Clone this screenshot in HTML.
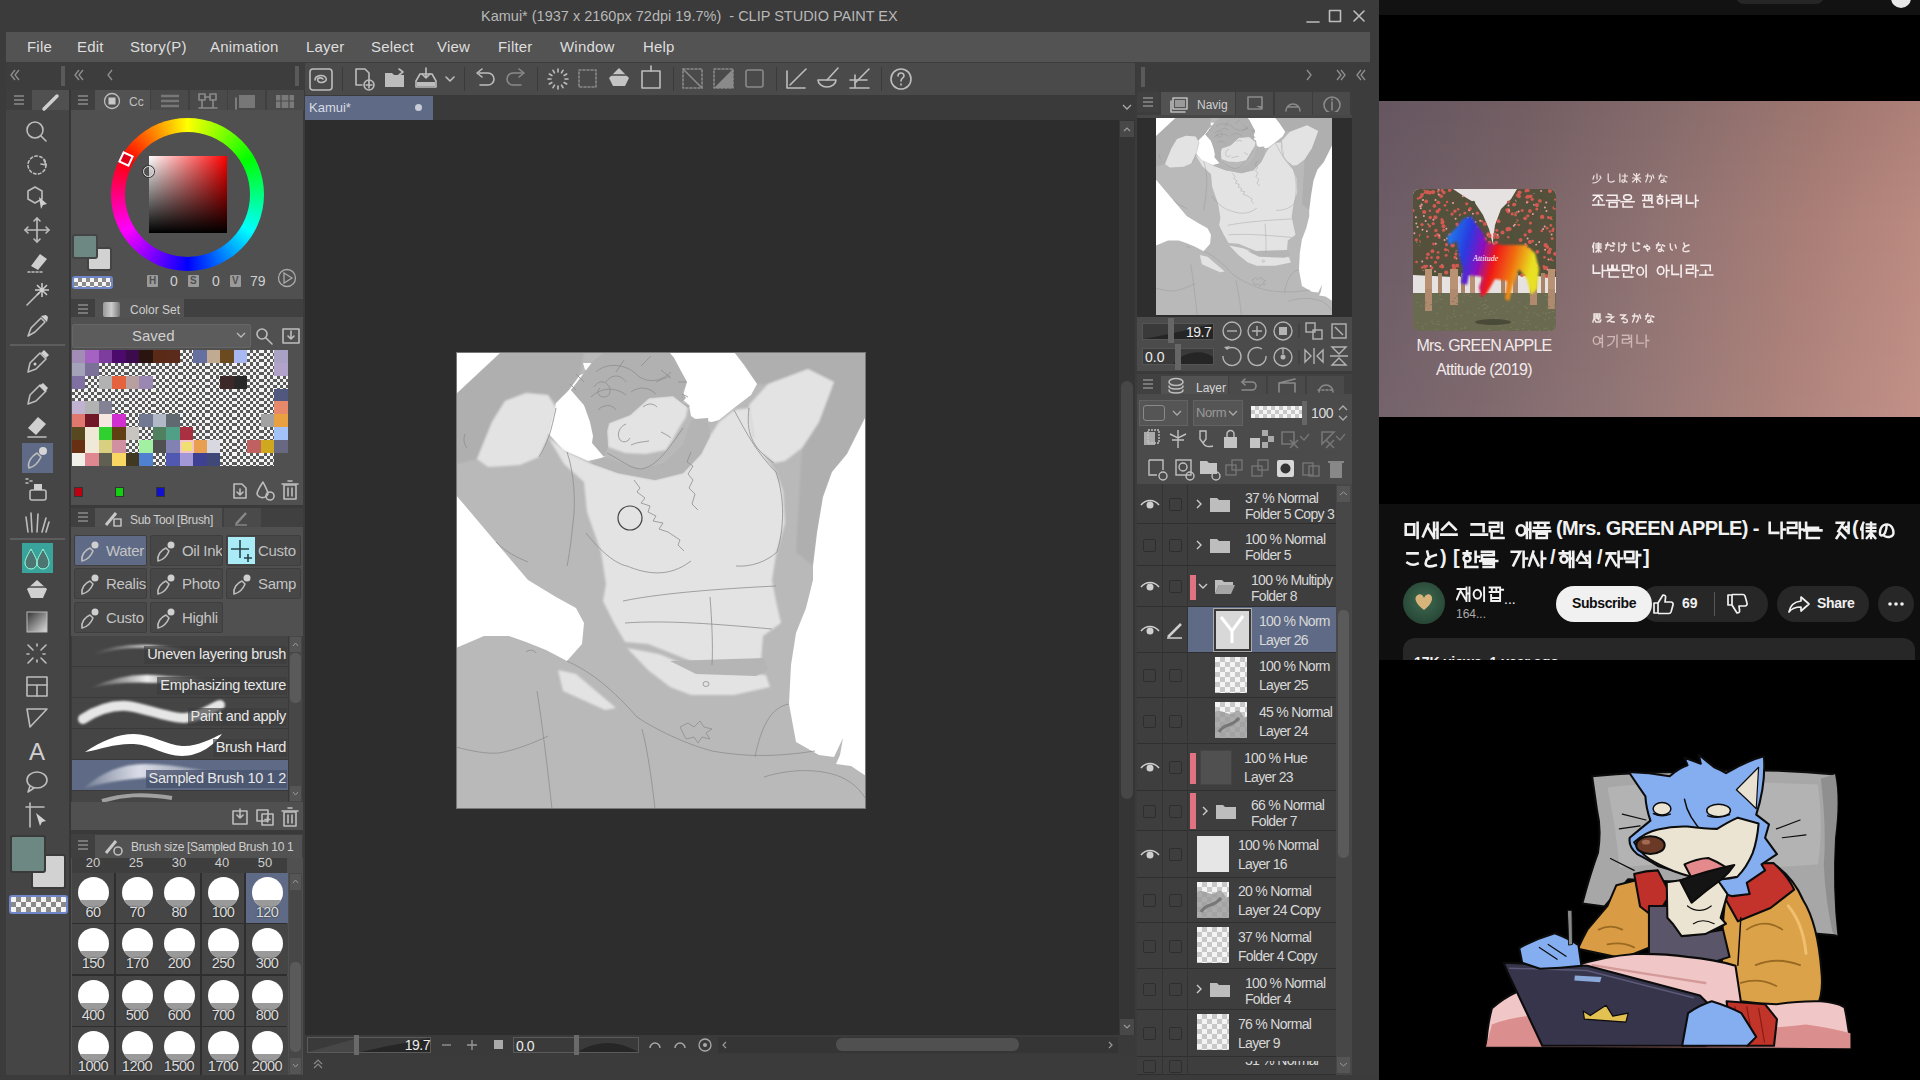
<!DOCTYPE html>
<html><head><meta charset="utf-8">
<style>
*{margin:0;padding:0;box-sizing:border-box}
html,body{width:1920px;height:1080px;overflow:hidden;background:#3b3b3b;font-family:"Liberation Sans",sans-serif;color:#d0d0d0}
.a{position:absolute}
.t{position:absolute;white-space:nowrap;line-height:1}
.chk{background-color:#f4f4f4;background-image:linear-gradient(45deg,#5a5a5a 25%,transparent 25%,transparent 75%,#5a5a5a 75%),linear-gradient(45deg,#5a5a5a 25%,transparent 25%,transparent 75%,#5a5a5a 75%);background-size:6px 6px;background-position:0 0,3px 3px}
.chkl{background-color:#f4f4f4;background-image:linear-gradient(45deg,#c8c8c8 25%,transparent 25%,transparent 75%,#c8c8c8 75%),linear-gradient(45deg,#c8c8c8 25%,transparent 25%,transparent 75%,#c8c8c8 75%);background-size:10px 10px;background-position:0 0,5px 5px}
.chk4{background-color:#fff;background-image:linear-gradient(45deg,#bdbdbd 25%,transparent 25%,transparent 75%,#bdbdbd 75%),linear-gradient(45deg,#bdbdbd 25%,transparent 25%,transparent 75%,#bdbdbd 75%);background-size:4px 4px;background-position:0 0,2px 2px}
</style></head><body>
<div class="a" style="left:0px;top:0px;width:1379px;height:1080px;background:#3b3b3b;"></div>
<div class="t" style="left:481px;top:9px;font-size:14.5px;color:#b8b8b8;letter-spacing:0px">Kamui* (1937 x 2160px 72dpi 19.7%)&nbsp; - CLIP STUDIO PAINT EX</div>
<svg class="a" style="left:1300px;top:6px;" width="75" height="22" viewBox="0 0 75 22"><path d="M7 16h12" stroke="#bdbdbd" fill="none" stroke-width="1.6" stroke-linecap="round" stroke-linejoin="round" stroke-width="1.5"/><rect x="29.5" y="4.5" width="11" height="11" stroke="#bdbdbd" fill="none" stroke-width="1.6" stroke-linecap="round" stroke-linejoin="round" stroke-width="1.5"/><path d="M54 5l10 10M64 5l-10 10" stroke="#bdbdbd" fill="none" stroke-width="1.6" stroke-linecap="round" stroke-linejoin="round" stroke-width="1.5"/></svg>
<div class="a" style="left:6px;top:32px;width:1364px;height:30px;background:#535353;"></div>
<div class="t" style="left:27px;top:39px;font-size:15px;color:#dedede;letter-spacing:0.2px">File</div>
<div class="t" style="left:77px;top:39px;font-size:15px;color:#dedede;letter-spacing:0.2px">Edit</div>
<div class="t" style="left:130px;top:39px;font-size:15px;color:#dedede;letter-spacing:0.2px">Story(P)</div>
<div class="t" style="left:210px;top:39px;font-size:15px;color:#dedede;letter-spacing:0.2px">Animation</div>
<div class="t" style="left:306px;top:39px;font-size:15px;color:#dedede;letter-spacing:0.2px">Layer</div>
<div class="t" style="left:371px;top:39px;font-size:15px;color:#dedede;letter-spacing:0.2px">Select</div>
<div class="t" style="left:437px;top:39px;font-size:15px;color:#dedede;letter-spacing:0.2px">View</div>
<div class="t" style="left:498px;top:39px;font-size:15px;color:#dedede;letter-spacing:0.2px">Filter</div>
<div class="t" style="left:560px;top:39px;font-size:15px;color:#dedede;letter-spacing:0.2px">Window</div>
<div class="t" style="left:643px;top:39px;font-size:15px;color:#dedede;letter-spacing:0.2px">Help</div>
<div class="a" style="left:6px;top:62px;width:1364px;height:28px;background:#3d3d3d;"></div>
<svg class="a" style="left:9px;top:69px;" width="13" height="13" viewBox="0 0 13 13"><path d="M6 1L2 6l4 5 M10 1L6 6l4 5" stroke="#8f8f8f" fill="none" stroke-width="1.3"/></svg>
<div class="a" style="left:61px;top:66px;width:4px;height:20px;background:#5a5a5a;"></div>
<svg class="a" style="left:73px;top:69px;" width="13" height="13" viewBox="0 0 13 13"><path d="M6 1L2 6l4 5 M10 1L6 6l4 5" stroke="#8f8f8f" fill="none" stroke-width="1.3"/></svg>
<svg class="a" style="left:106px;top:69px;" width="13" height="13" viewBox="0 0 13 13"><path d="M6 1L2 6l4 5" stroke="#8f8f8f" fill="none" stroke-width="1.3"/></svg>
<div class="a" style="left:295px;top:66px;width:4px;height:20px;background:#5a5a5a;"></div>
<div class="a" style="left:305px;top:63px;width:830px;height:32px;background:#4a4a4a;"></div>
<div class="a" style="left:342px;top:67px;width:1px;height:24px;background:#3a3a3a;"></div>
<div class="a" style="left:464px;top:67px;width:1px;height:24px;background:#3a3a3a;"></div>
<div class="a" style="left:537px;top:67px;width:1px;height:24px;background:#3a3a3a;"></div>
<div class="a" style="left:673px;top:67px;width:1px;height:24px;background:#3a3a3a;"></div>
<div class="a" style="left:776px;top:67px;width:1px;height:24px;background:#3a3a3a;"></div>
<div class="a" style="left:881px;top:67px;width:1px;height:24px;background:#3a3a3a;"></div>
<svg class="a" style="left:301px;top:63px;" width="40" height="32" viewBox="0 0 40 32"><rect x="9" y="6" width="22" height="21" rx="3" stroke="#bdbdbd" fill="none" stroke-width="1.6" stroke-linecap="round" stroke-linejoin="round"/><path d="M14 17c0-5 9-6 11-2s-6 6-8 3 3-4 5-2" stroke="#bdbdbd" fill="none" stroke-width="1.6" stroke-linecap="round" stroke-linejoin="round" stroke-width="1.4"/></svg>
<svg class="a" style="left:350px;top:63px;" width="30" height="32" viewBox="0 0 30 32"><path d="M6 6h9l4 4v9M6 6v16h6" stroke="#bdbdbd" fill="none" stroke-width="1.6" stroke-linecap="round" stroke-linejoin="round"/><circle cx="19" cy="22" r="5" stroke="#bdbdbd" fill="none" stroke-width="1.6" stroke-linecap="round" stroke-linejoin="round"/><path d="M16 22h6M19 19v6" stroke="#bdbdbd" fill="none" stroke-width="1.6" stroke-linecap="round" stroke-linejoin="round" stroke-width="1.2"/></svg>
<svg class="a" style="left:381px;top:63px;" width="30" height="32" viewBox="0 0 30 32"><path d="M4 10h7l2 2h10v12H4z" fill="#bdbdbd"/><path d="M18 6l4 3-4 3" stroke="#bdbdbd" fill="none" stroke-width="1.6" stroke-linecap="round" stroke-linejoin="round" stroke-width="1.3"/></svg>
<svg class="a" style="left:411px;top:63px;" width="30" height="32" viewBox="0 0 30 32"><path d="M5 18l4-7h12l4 7v6H5z" stroke="#bdbdbd" fill="none" stroke-width="1.6" stroke-linecap="round" stroke-linejoin="round"/><path d="M15 5v10M11 11l4 4 4-4" stroke="#bdbdbd" fill="none" stroke-width="1.6" stroke-linecap="round" stroke-linejoin="round" stroke-width="1.4"/><rect x="6" y="19" width="18" height="4" fill="#bdbdbd"/></svg>
<svg class="a" style="left:443px;top:63px;" width="16" height="32" viewBox="0 0 16 32"><path d="M3 14l4 4 4-4" stroke="#bdbdbd" fill="none" stroke-width="1.6" stroke-linecap="round" stroke-linejoin="round" stroke-width="1.3"/></svg>
<svg class="a" style="left:470px;top:63px;" width="30" height="32" viewBox="0 0 30 32"><path d="M9 10h9a6 6 0 010 12h-8" stroke="#bdbdbd" fill="none" stroke-width="1.6" stroke-linecap="round" stroke-linejoin="round"/><path d="M12 6l-5 4 5 4" stroke="#bdbdbd" fill="none" stroke-width="1.6" stroke-linecap="round" stroke-linejoin="round"/></svg>
<svg class="a" style="left:501px;top:63px;" width="30" height="32" viewBox="0 0 30 32"><path d="M21 10h-9a6 6 0 000 12h8" stroke="#8a8a8a" fill="none" stroke-width="1.6" stroke-linecap="round" stroke-linejoin="round"/><path d="M18 6l5 4-5 4" stroke="#8a8a8a" fill="none" stroke-width="1.6" stroke-linecap="round" stroke-linejoin="round"/></svg>
<svg class="a" style="left:543px;top:63px;" width="30" height="32" viewBox="0 0 30 32"><line x1="22.0" y1="16.0" x2="25.0" y2="16.0" stroke="#bdbdbd" fill="none" stroke-width="1.6" stroke-linecap="round" stroke-linejoin="round" stroke-width="2"/><line x1="21.1" y1="19.5" x2="23.7" y2="21.0" stroke="#bdbdbd" fill="none" stroke-width="1.6" stroke-linecap="round" stroke-linejoin="round" stroke-width="2"/><line x1="18.5" y1="22.1" x2="20.0" y2="24.7" stroke="#bdbdbd" fill="none" stroke-width="1.6" stroke-linecap="round" stroke-linejoin="round" stroke-width="2"/><line x1="15.0" y1="23.0" x2="15.0" y2="26.0" stroke="#bdbdbd" fill="none" stroke-width="1.6" stroke-linecap="round" stroke-linejoin="round" stroke-width="2"/><line x1="11.5" y1="22.1" x2="10.0" y2="24.7" stroke="#bdbdbd" fill="none" stroke-width="1.6" stroke-linecap="round" stroke-linejoin="round" stroke-width="2"/><line x1="8.9" y1="19.5" x2="6.3" y2="21.0" stroke="#bdbdbd" fill="none" stroke-width="1.6" stroke-linecap="round" stroke-linejoin="round" stroke-width="2"/><line x1="8.0" y1="16.0" x2="5.0" y2="16.0" stroke="#bdbdbd" fill="none" stroke-width="1.6" stroke-linecap="round" stroke-linejoin="round" stroke-width="2"/><line x1="8.9" y1="12.5" x2="6.3" y2="11.0" stroke="#bdbdbd" fill="none" stroke-width="1.6" stroke-linecap="round" stroke-linejoin="round" stroke-width="2"/><line x1="11.5" y1="9.9" x2="10.0" y2="7.3" stroke="#bdbdbd" fill="none" stroke-width="1.6" stroke-linecap="round" stroke-linejoin="round" stroke-width="2"/><line x1="15.0" y1="9.0" x2="15.0" y2="6.0" stroke="#bdbdbd" fill="none" stroke-width="1.6" stroke-linecap="round" stroke-linejoin="round" stroke-width="2"/><line x1="18.5" y1="9.9" x2="20.0" y2="7.3" stroke="#bdbdbd" fill="none" stroke-width="1.6" stroke-linecap="round" stroke-linejoin="round" stroke-width="2"/><line x1="21.1" y1="12.5" x2="23.7" y2="11.0" stroke="#bdbdbd" fill="none" stroke-width="1.6" stroke-linecap="round" stroke-linejoin="round" stroke-width="2"/></svg>
<svg class="a" style="left:573px;top:63px;" width="30" height="32" viewBox="0 0 30 32"><rect x="6" y="7" width="17" height="17" stroke="#8a8a8a" fill="none" stroke-width="1.6" stroke-linecap="round" stroke-linejoin="round" stroke-dasharray="2 2"/></svg>
<svg class="a" style="left:603px;top:63px;" width="32" height="32" viewBox="0 0 32 32"><path d="M16 5l10 10-4 8h-12l-4-8z" fill="#c4c4c4"/><path d="M8 12h16" stroke="#4a4a4a" stroke-width="1.5"/></svg>
<svg class="a" style="left:636px;top:63px;" width="30" height="32" viewBox="0 0 30 32"><rect x="6" y="8" width="18" height="17" stroke="#bdbdbd" fill="none" stroke-width="1.6" stroke-linecap="round" stroke-linejoin="round"/><path d="M15 3v5" stroke="#bdbdbd" fill="none" stroke-width="1.6" stroke-linecap="round" stroke-linejoin="round"/></svg>
<svg class="a" style="left:678px;top:63px;" width="30" height="32" viewBox="0 0 30 32"><rect x="5" y="6" width="19" height="19" stroke="#8a8a8a" fill="none" stroke-width="1.6" stroke-linecap="round" stroke-linejoin="round" stroke-dasharray="2 2"/><path d="M5 6l19 19" stroke="#8a8a8a" fill="none" stroke-width="1.6" stroke-linecap="round" stroke-linejoin="round"/></svg>
<svg class="a" style="left:709px;top:63px;" width="30" height="32" viewBox="0 0 30 32"><rect x="5" y="6" width="19" height="19" stroke="#8a8a8a" fill="none" stroke-width="1.6" stroke-linecap="round" stroke-linejoin="round" stroke-dasharray="2 2"/><path d="M24 6v19H5z" fill="#8a8a8a"/></svg>
<svg class="a" style="left:740px;top:63px;" width="30" height="32" viewBox="0 0 30 32"><rect x="6" y="7" width="17" height="17" rx="2" stroke="#8a8a8a" fill="none" stroke-width="1.6" stroke-linecap="round" stroke-linejoin="round"/></svg>
<svg class="a" style="left:782px;top:63px;" width="30" height="32" viewBox="0 0 30 32"><path d="M5 8v17h18" stroke="#bdbdbd" fill="none" stroke-width="1.6" stroke-linecap="round" stroke-linejoin="round"/><path d="M8 22L24 6" stroke="#bdbdbd" fill="none" stroke-width="1.6" stroke-linecap="round" stroke-linejoin="round" stroke-width="2"/></svg>
<svg class="a" style="left:813px;top:63px;" width="30" height="32" viewBox="0 0 30 32"><path d="M5 17a9 7 0 0018 0z" stroke="#bdbdbd" fill="none" stroke-width="1.6" stroke-linecap="round" stroke-linejoin="round"/><path d="M14 17L25 5" stroke="#bdbdbd" fill="none" stroke-width="1.6" stroke-linecap="round" stroke-linejoin="round" stroke-width="2"/></svg>
<svg class="a" style="left:845px;top:63px;" width="30" height="32" viewBox="0 0 30 32"><path d="M5 25h19M5 17h17M10 12v13" stroke="#bdbdbd" fill="none" stroke-width="1.6" stroke-linecap="round" stroke-linejoin="round"/><path d="M10 20L24 6" stroke="#bdbdbd" fill="none" stroke-width="1.6" stroke-linecap="round" stroke-linejoin="round" stroke-width="2"/></svg>
<svg class="a" style="left:886px;top:63px;" width="32" height="32" viewBox="0 0 32 32"><circle cx="15" cy="16" r="10" stroke="#bdbdbd" fill="none" stroke-width="1.6" stroke-linecap="round" stroke-linejoin="round"/><path d="M12 13a3 3 0 116 0c0 2-3 2-3 5M15 21v1" stroke="#bdbdbd" fill="none" stroke-width="1.6" stroke-linecap="round" stroke-linejoin="round" stroke-width="1.4"/></svg>
<div class="a" style="left:305px;top:95px;width:830px;height:25px;background:#3a3a3a;"></div>
<div class="a" style="left:305px;top:96px;width:128px;height:24px;background:#5f6b86;"></div>
<div class="t" style="left:309px;top:101px;font-size:13px;color:#d8dbe4;">Kamui*</div>
<div class="a" style="left:415px;top:104px;width:7px;height:7px;border-radius:50%;background:#c8ccd6"></div>
<svg class="a" style="left:1120px;top:100px;" width="14" height="14" viewBox="0 0 14 14"><path d="M3 5l4 4 4-4" stroke="#aaa" fill="none" stroke-width="1.3"/></svg>
<div class="a" style="left:305px;top:120px;width:830px;height:915px;background:#2d2d2d;"></div>
<div class="a" style="left:1119px;top:120px;width:16px;height:915px;background:#353535;"></div>
<div class="a" style="left:1121px;top:381px;width:12px;height:418px;background:#474747;border-radius:6px"></div>
<div class="a" style="left:1120px;top:121px;width:14px;height:16px;background:#484848;"></div>
<svg class="a" style="left:1120px;top:121px;" width="14" height="16" viewBox="0 0 14 16"><path d="M4 10l3-3 3 3" stroke="#999" fill="none" stroke-width="1.2"/></svg>
<div class="a" style="left:1120px;top:1019px;width:14px;height:16px;background:#484848;"></div>
<svg class="a" style="left:1120px;top:1019px;" width="14" height="16" viewBox="0 0 14 16"><path d="M4 6l3 3 3-3" stroke="#999" fill="none" stroke-width="1.2"/></svg>
<div class="a" style="left:305px;top:1035px;width:830px;height:20px;background:#3a3a3a;"></div>
<div class="a" style="left:307px;top:1037px;width:124px;height:16px;background:#3a3a3a;border:1px solid #5a5a5a"></div>
<svg class="a" style="left:308px;top:1038px;" width="122" height="14" viewBox="0 0 122 14"><path d="M0 14L50 14L50 0Z" fill="#474747"/><path d="M52 14C70 10 100 4 122 0V14Z" fill="#262626"/></svg>
<div class="a" style="left:354px;top:1035px;width:5px;height:20px;background:#6a6a6a;"></div>
<div class="t" style="right:1490px;top:1038px;font-size:14px;color:#ececec;letter-spacing:-0.5px">19.7</div>
<svg class="a" style="left:438px;top:1035px;" width="20" height="20" viewBox="0 0 20 20"><path d="M4 10h9" stroke="#999" stroke-width="1.3"/></svg>
<svg class="a" style="left:463px;top:1035px;" width="20" height="20" viewBox="0 0 20 20"><path d="M4 10h10M9 5v10" stroke="#999" stroke-width="1.3"/></svg>
<div class="a" style="left:494px;top:1040px;width:9px;height:9px;background:#aaa;"></div>
<div class="a" style="left:513px;top:1037px;width:126px;height:16px;background:#3a3a3a;border:1px solid #5a5a5a"></div>
<svg class="a" style="left:514px;top:1038px;" width="124" height="14" viewBox="0 0 124 14"><path d="M64 14C80 4 100 0 124 14Z" fill="#262626"/></svg>
<div class="a" style="left:574px;top:1035px;width:5px;height:20px;background:#6a6a6a;"></div>
<div class="t" style="left:516px;top:1039px;font-size:14px;color:#ececec;letter-spacing:-0.5px">0.0</div>
<svg class="a" style="left:645px;top:1035px;" width="70" height="20" viewBox="0 0 70 20"><path d="M5 13a5 5 0 0110 0" stroke="#aaa" fill="none" stroke-width="1.4"/><path d="M30 13a5 5 0 0110 0" stroke="#aaa" fill="none" stroke-width="1.4"/><circle cx="60" cy="10" r="6" stroke="#aaa" fill="none" stroke-width="1.3"/><circle cx="60" cy="10" r="2" fill="#aaa"/></svg>
<div class="a" style="left:718px;top:1037px;width:400px;height:16px;background:#353535;"></div>
<svg class="a" style="left:720px;top:1037px;" width="10" height="16" viewBox="0 0 10 16"><path d="M6 5l-3 3 3 3" stroke="#999" fill="none" stroke-width="1.2"/></svg>
<div class="a" style="left:836px;top:1038px;width:183px;height:13px;background:#505050;border-radius:6px"></div>
<svg class="a" style="left:1106px;top:1037px;" width="10" height="16" viewBox="0 0 10 16"><path d="M3 5l3 3-3 3" stroke="#999" fill="none" stroke-width="1.2"/></svg>
<div class="a" style="left:305px;top:1055px;width:830px;height:25px;background:#3b3b3b;"></div>
<svg class="a" style="left:310px;top:1055px;" width="18" height="16" viewBox="0 0 18 16"><path d="M4 9l4-4 4 4M4 13l4-4 4 4" stroke="#888" fill="none" stroke-width="1.2"/></svg>
<div class="a" style="left:6px;top:90px;width:63px;height:985px;background:#454545;"></div>
<div class="a" style="left:69px;top:90px;width:2px;height:985px;background:#363636;"></div>
<div class="a" style="left:6px;top:90px;width:26px;height:20px;background:#3e3e3e;"></div>
<svg class="a" style="left:12px;top:94px;" width="14" height="12" viewBox="0 0 14 12"><path d="M2 2h10M2 6h10M2 10h10" stroke="#8a8a8a" stroke-width="1.5"/></svg>
<div class="a" style="left:32px;top:90px;width:37px;height:20px;background:#505050;"></div>
<svg class="a" style="left:36px;top:92px;" width="28" height="20" viewBox="0 0 28 20"><path d="M8 17L21 4" stroke="#cfcfcf" stroke-width="3.5" stroke-linecap="round"/></svg>
<svg class="a" style="left:22px;top:117px;" width="31" height="30" viewBox="0 0 31 30"><circle cx="13" cy="13" r="8" stroke="#bdbdbd" fill="none" stroke-width="1.6" stroke-linecap="round" stroke-linejoin="round"/><path d="M19 19l5 5" stroke="#bdbdbd" fill="none" stroke-width="1.6" stroke-linecap="round" stroke-linejoin="round" stroke-width="2"/></svg>
<svg class="a" style="left:22px;top:150px;" width="31" height="30" viewBox="0 0 31 30"><circle cx="15" cy="15" r="9" stroke="#bdbdbd" fill="none" stroke-width="1.6" stroke-linecap="round" stroke-linejoin="round" stroke-dasharray="2.5 2.5"/><path d="M22 10l2 5-5-1" stroke="#bdbdbd" fill="none" stroke-width="1.6" stroke-linecap="round" stroke-linejoin="round" stroke-width="1.3"/></svg>
<svg class="a" style="left:22px;top:182px;" width="31" height="30" viewBox="0 0 31 30"><path d="M6 9l7-4 7 4v8l-7 4-7-4z" stroke="#bdbdbd" fill="none" stroke-width="1.6" stroke-linecap="round" stroke-linejoin="round"/><path d="M17 15l8 7-4 1-2 4z" fill="#cfcfcf"/></svg>
<svg class="a" style="left:22px;top:215px;" width="31" height="30" viewBox="0 0 31 30"><path d="M15 3v24M3 15h24" stroke="#bdbdbd" fill="none" stroke-width="1.6" stroke-linecap="round" stroke-linejoin="round"/><path d="M12 6l3-3 3 3M12 24l3 3 3-3M6 12l-3 3 3 3M24 12l3 3-3 3" stroke="#bdbdbd" fill="none" stroke-width="1.6" stroke-linecap="round" stroke-linejoin="round" stroke-width="1.4"/></svg>
<svg class="a" style="left:22px;top:247px;" width="31" height="30" viewBox="0 0 31 30"><path d="M9 19l9-12 7 5-9 11z" fill="#cfcfcf"/><path d="M6 25h16" stroke="#bdbdbd" fill="none" stroke-width="1.6" stroke-linecap="round" stroke-linejoin="round" stroke-dasharray="2 2"/></svg>
<svg class="a" style="left:22px;top:279px;" width="31" height="30" viewBox="0 0 31 30"><path d="M5 26l12-12" stroke="#bdbdbd" fill="none" stroke-width="1.6" stroke-linecap="round" stroke-linejoin="round" stroke-width="1.8"/><path d="M20 4v14M13 11h14M15 6l10 10M25 6L15 16" stroke="#cfcfcf" stroke-width="1.5"/></svg>
<svg class="a" style="left:22px;top:311px;" width="31" height="30" viewBox="0 0 31 30"><path d="M6 25l3-8 10-10 4 4-10 10z" stroke="#bdbdbd" fill="none" stroke-width="1.6" stroke-linecap="round" stroke-linejoin="round"/><path d="M19 5l5-1 2 2-1 5z" fill="#cfcfcf"/></svg>
<div class="a" style="left:10px;top:344px;width:55px;height:2px;background:#5d5d5d;"></div>
<svg class="a" style="left:22px;top:347px;" width="31" height="30" viewBox="0 0 31 30"><path d="M6 25l2-9 10-10 6 6-10 10z" stroke="#bdbdbd" fill="none" stroke-width="1.6" stroke-linecap="round" stroke-linejoin="round"/><path d="M19 6l3-3 5 5-3 3" fill="#cfcfcf"/><circle cx="13" cy="17" r="1.5" fill="#cfcfcf"/></svg>
<svg class="a" style="left:22px;top:379px;" width="31" height="30" viewBox="0 0 31 30"><path d="M6 25l2-9 10-10 6 6-10 10z" stroke="#bdbdbd" fill="none" stroke-width="1.6" stroke-linecap="round" stroke-linejoin="round"/><path d="M17 7l4-3 5 5-3 4z" fill="#cfcfcf"/></svg>
<svg class="a" style="left:22px;top:411px;" width="31" height="30" viewBox="0 0 31 30"><path d="M6 17l10-11 8 7-10 11z" fill="#d0d0d0"/><path d="M6 26h18" stroke="#bdbdbd" fill="none" stroke-width="1.6" stroke-linecap="round" stroke-linejoin="round"/></svg>
<div class="a" style="left:22px;top:443px;width:31px;height:30px;background:#5f6b86;"></div>
<svg class="a" style="left:22px;top:443px;" width="31" height="30" viewBox="0 0 31 30"><path d="M7 25c-2-6 3-12 8-15l4 4c-3 6-7 10-12 11z" stroke="#bdbdbd" fill="none" stroke-width="1.6" stroke-linecap="round" stroke-linejoin="round"/><circle cx="21" cy="8" r="4" fill="#d5d5d5"/></svg>
<svg class="a" style="left:22px;top:475px;" width="31" height="30" viewBox="0 0 31 30"><rect x="8" y="15" width="16" height="10" rx="2" stroke="#bdbdbd" fill="none" stroke-width="1.6" stroke-linecap="round" stroke-linejoin="round"/><rect x="12" y="9" width="8" height="6" fill="#cfcfcf"/><path d="M4 4h2M4 8h2M8 6h2" stroke="#bdbdbd" fill="none" stroke-width="1.6" stroke-linecap="round" stroke-linejoin="round" stroke-width="1.2"/></svg>
<svg class="a" style="left:22px;top:507px;" width="31" height="30" viewBox="0 0 31 30"><path d="M6 25L4 10M10 25L9 6M15 25l1-18M20 25l4-14M24 25l3-10" stroke="#bdbdbd" fill="none" stroke-width="1.6" stroke-linecap="round" stroke-linejoin="round" stroke-width="1.4"/></svg>
<div class="a" style="left:10px;top:538px;width:55px;height:2px;background:#5d5d5d;"></div>
<div class="a" style="left:22px;top:543px;width:31px;height:30px;background:#3aa49c;"></div>
<svg class="a" style="left:22px;top:543px;" width="31" height="30" viewBox="0 0 31 30"><path d="M9 6c-4 7-6 11-6 14a6 6 0 0012 0c0-3-2-7-6-14zM21 6c-4 7-6 11-6 14a6 6 0 0012 0c0-3-2-7-6-14z" fill="#4d7672" stroke="#9fd" stroke-width="1"/></svg>
<svg class="a" style="left:22px;top:575px;" width="31" height="30" viewBox="0 0 31 30"><path d="M15 5l10 9-4 9h-12l-4-9z" fill="#d0d0d0"/><path d="M6 12h18" stroke="#484848" stroke-width="1.5"/></svg>
<svg class="a" style="left:22px;top:607px;" width="31" height="30" viewBox="0 0 31 30"><defs><linearGradient id="gg" x1="0" y1="0" x2="1" y2="1"><stop offset="0" stop-color="#333"/><stop offset="1" stop-color="#ddd"/></linearGradient></defs><rect x="5" y="5" width="20" height="20" fill="url(#gg)" stroke="#bbb" stroke-width="1"/></svg>
<svg class="a" style="left:22px;top:639px;" width="31" height="30" viewBox="0 0 31 30"><path d="M6 6l5 5M24 6l-5 5M6 24l5-5M24 24l-5-5" stroke="#bdbdbd" fill="none" stroke-width="1.6" stroke-linecap="round" stroke-linejoin="round"/><path d="M5 15h4M21 15h4M15 5v4M15 21v4" stroke="#bdbdbd" fill="none" stroke-width="1.6" stroke-linecap="round" stroke-linejoin="round" stroke-dasharray="2 2"/></svg>
<svg class="a" style="left:22px;top:671px;" width="31" height="30" viewBox="0 0 31 30"><rect x="5" y="6" width="20" height="19" stroke="#bdbdbd" fill="none" stroke-width="1.6" stroke-linecap="round" stroke-linejoin="round"/><path d="M5 14h20M15 14v11" stroke="#bdbdbd" fill="none" stroke-width="1.6" stroke-linecap="round" stroke-linejoin="round"/></svg>
<svg class="a" style="left:22px;top:703px;" width="31" height="30" viewBox="0 0 31 30"><path d="M5 6h20L8 24z" stroke="#bdbdbd" fill="none" stroke-width="1.6" stroke-linecap="round" stroke-linejoin="round" stroke-width="2"/></svg>
<svg class="a" style="left:22px;top:735px;" width="31" height="30" viewBox="0 0 31 30"><text x="15" y="25" font-size="24" text-anchor="middle" fill="#d0d0d0" font-family="Liberation Sans">A</text></svg>
<svg class="a" style="left:22px;top:767px;" width="31" height="30" viewBox="0 0 31 30"><ellipse cx="15" cy="13" rx="10" ry="8" stroke="#bdbdbd" fill="none" stroke-width="1.6" stroke-linecap="round" stroke-linejoin="round"/><path d="M8 19l-2 6 6-4" stroke="#bdbdbd" fill="none" stroke-width="1.6" stroke-linecap="round" stroke-linejoin="round"/></svg>
<svg class="a" style="left:22px;top:799px;" width="31" height="30" viewBox="0 0 31 30"><path d="M8 4v24M4 8h18" stroke="#bdbdbd" fill="none" stroke-width="1.6" stroke-linecap="round" stroke-linejoin="round"/><path d="M14 14l10 8-4 1-2 4z" fill="#d0d0d0"/></svg>
<div class="a" style="left:31px;top:854px;width:35px;height:35px;background:#d2d2d2;border:2px solid #3a3a3a;border-radius:3px"></div>
<div class="a" style="left:10px;top:835px;width:36px;height:38px;background:#6d8783;border:2px solid #3a3a3a;border-radius:3px"></div>
<div class="a chkl" style="left:9px;top:895px;width:59px;height:19px;border:2px solid #6f86c8;border-radius:3px;background-image:linear-gradient(45deg,#8a8a8a 25%,transparent 25%,transparent 75%,#8a8a8a 75%),linear-gradient(45deg,#8a8a8a 25%,transparent 25%,transparent 75%,#8a8a8a 75%);background-size:10px 10px;background-position:0 0,5px 5px"></div>
<div class="a" style="left:71px;top:90px;width:232px;height:985px;background:#3d3d3d;"></div>
<div class="a" style="left:71px;top:90px;width:232px;height:20px;background:#404040;"></div>
<svg class="a" style="left:76px;top:94px;" width="14" height="12" viewBox="0 0 14 12"><path d="M2 2h10M2 6h10M2 10h10" stroke="#8a8a8a" stroke-width="1.5"/></svg>
<div class="a" style="left:95px;top:90px;width:55px;height:20px;background:#525252;"></div>
<svg class="a" style="left:102px;top:92px;" width="20" height="18" viewBox="0 0 20 18"><circle cx="10" cy="9" r="7.5" stroke="#bdbdbd" fill="none" stroke-width="1.3"/><rect x="6.5" y="5.5" width="7" height="7" fill="#c8c8c8"/></svg>
<div class="t" style="left:129px;top:96px;font-size:12px;color:#c0c0c0;">Cc</div>
<div class="a" style="left:151px;top:90px;width:37px;height:20px;background:#4a4a4a;"></div>
<div class="a" style="left:190px;top:90px;width:37px;height:20px;background:#4a4a4a;"></div>
<div class="a" style="left:228px;top:90px;width:37px;height:20px;background:#4a4a4a;"></div>
<div class="a" style="left:267px;top:90px;width:37px;height:20px;background:#4a4a4a;"></div>
<svg class="a" style="left:158px;top:92px;" width="24" height="18" viewBox="0 0 24 18"><path d="M3 4h18M3 9h18M3 14h18" stroke="#777" stroke-width="2.5"/></svg>
<svg class="a" style="left:196px;top:92px;" width="24" height="18" viewBox="0 0 24 18"><rect x="3" y="2" width="6" height="6" stroke="#8a8a8a" fill="none" stroke-width="1.6" stroke-linecap="round" stroke-linejoin="round"/><rect x="14" y="2" width="6" height="6" stroke="#8a8a8a" fill="none" stroke-width="1.6" stroke-linecap="round" stroke-linejoin="round"/><path d="M6 8v8M17 8v8M3 16h18M9 5h5" stroke="#8a8a8a" fill="none" stroke-width="1.6" stroke-linecap="round" stroke-linejoin="round"/></svg>
<svg class="a" style="left:234px;top:92px;" width="24" height="18" viewBox="0 0 24 18"><rect x="5" y="3" width="16" height="13" fill="#777"/><path d="M2 6v11" stroke="#8a8a8a" fill="none" stroke-width="1.6" stroke-linecap="round" stroke-linejoin="round"/></svg>
<svg class="a" style="left:273px;top:92px;" width="24" height="18" viewBox="0 0 24 18"><rect x="3" y="3" width="18" height="13" fill="#7a7a7a"/><path d="M3 9h18M8 3v13M16 3v13" stroke="#4a4a4a" stroke-width="1.2"/></svg>
<div class="a" style="left:71px;top:110px;width:232px;height:190px;background:#505050;"></div>
<div class="a" style="left:111px;top:118px;width:153px;height:153px;border-radius:50%;background:conic-gradient(from 0deg,#ffff00,#00ff00,#00ffff,#0000ff,#ff00ff,#ff0000,#ffff00)"></div>
<div class="a" style="left:125px;top:132px;width:125px;height:125px;border-radius:50%;background:#505050"></div>
<div class="a" style="left:149px;top:156px;width:78px;height:77px;background:linear-gradient(to top,#000,rgba(0,0,0,0)),linear-gradient(to right,#fff,#f00)"></div>
<div class="a" style="left:120px;top:153px;width:12px;height:12px;background:#e0001a;border:2px solid #fff;transform:rotate(25deg)"></div>
<div class="a" style="left:143px;top:166px;width:11px;height:11px;border-radius:50%;border:1.5px solid #ddd;box-shadow:0 0 0 1px #333"></div>
<div class="a" style="left:87px;top:247px;width:25px;height:24px;background:#d2d2d2;border:2px solid #444;border-radius:3px"></div>
<div class="a" style="left:72px;top:234px;width:26px;height:25px;background:#6d8783;border:2px solid #444;border-radius:3px"></div>
<div class="a chkl" style="left:72px;top:276px;width:41px;height:13px;border:2px solid #6f86c8;border-radius:3px;background-image:linear-gradient(45deg,#8a8a8a 25%,transparent 25%,transparent 75%,#8a8a8a 75%),linear-gradient(45deg,#8a8a8a 25%,transparent 25%,transparent 75%,#8a8a8a 75%);background-size:8px 8px;background-position:0 0,4px 4px"></div>
<div class="a" style="left:147px;top:275px;width:11px;height:12px;background:#9a9a9a;border-radius:1px"></div>
<div class="t" style="left:149px;top:276px;font-size:10px;color:#505050;font-weight:bold">H</div>
<div class="t" style="left:170px;top:274px;font-size:14px;color:#cfcfcf;">0</div>
<div class="a" style="left:188px;top:275px;width:11px;height:12px;background:#9a9a9a;border-radius:1px"></div>
<div class="t" style="left:190px;top:276px;font-size:10px;color:#505050;font-weight:bold">S</div>
<div class="t" style="left:212px;top:274px;font-size:14px;color:#cfcfcf;">0</div>
<div class="a" style="left:230px;top:275px;width:11px;height:12px;background:#9a9a9a;border-radius:1px"></div>
<div class="t" style="left:232px;top:276px;font-size:10px;color:#505050;font-weight:bold">V</div>
<div class="t" style="left:250px;top:274px;font-size:14px;color:#cfcfcf;">79</div>
<svg class="a" style="left:277px;top:268px;" width="20" height="20" viewBox="0 0 20 20"><circle cx="10" cy="10" r="8.5" stroke="#aaa" fill="none" stroke-width="1.3"/><path d="M7 5l8 5-8 5z" stroke="#aaa" fill="none" stroke-width="1.3"/></svg>
<div class="a" style="left:71px;top:300px;width:232px;height:16px;background:#3d3d3d;"></div>
<div class="a" style="left:71px;top:299px;width:232px;height:18px;background:#404040;"></div>
<svg class="a" style="left:76px;top:303px;" width="14" height="12" viewBox="0 0 14 12"><path d="M2 2h10M2 6h10M2 10h10" stroke="#8a8a8a" stroke-width="1.5"/></svg>
<div class="a" style="left:95px;top:299px;width:89px;height:18px;background:#525252;"></div>
<div class="a" style="left:103px;top:302px;width:17px;height:15px;background:linear-gradient(90deg,#999,#ccc,#777);border-radius:2px"></div>
<div class="t" style="left:130px;top:304px;font-size:12px;color:#cfcfcf;">Color Set</div>
<div class="a" style="left:71px;top:317px;width:232px;height:188px;background:#505050;"></div>
<div class="a" style="left:72px;top:324px;width:179px;height:24px;background:#5c5c5c;border:1px solid #666;border-radius:2px"></div>
<div class="t" style="left:132px;top:328px;font-size:15px;color:#d0d0d0;">Saved</div>
<svg class="a" style="left:234px;top:328px;" width="14" height="14" viewBox="0 0 14 14"><path d="M3 5l4 4 4-4" stroke="#bbb" fill="none" stroke-width="1.3"/></svg>
<svg class="a" style="left:254px;top:326px;" width="22" height="20" viewBox="0 0 22 20"><circle cx="8" cy="8" r="5" stroke="#bdbdbd" fill="none" stroke-width="1.6" stroke-linecap="round" stroke-linejoin="round" stroke-width="1.4"/><path d="M12 12l6 6" stroke="#bdbdbd" fill="none" stroke-width="1.6" stroke-linecap="round" stroke-linejoin="round" stroke-width="2.2"/></svg>
<svg class="a" style="left:281px;top:326px;" width="20" height="20" viewBox="0 0 20 20"><rect x="2" y="3" width="16" height="14" stroke="#bdbdbd" fill="none" stroke-width="1.6" stroke-linecap="round" stroke-linejoin="round" stroke-width="1.3"/><path d="M10 5v8M7 10l3 3 3-3" stroke="#bdbdbd" fill="none" stroke-width="1.6" stroke-linecap="round" stroke-linejoin="round" stroke-width="1.3"/></svg>
<div class="a" style="left:72px;top:350px;width:13px;height:13px;background:#a08cb4;"></div>
<div class="a" style="left:85px;top:350px;width:14px;height:13px;background:#a562c2;"></div>
<div class="a" style="left:99px;top:350px;width:13px;height:13px;background:#7c3d9e;"></div>
<div class="a" style="left:112px;top:350px;width:14px;height:13px;background:#4b0a6c;"></div>
<div class="a" style="left:126px;top:350px;width:13px;height:13px;background:#3c0b4c;"></div>
<div class="a" style="left:139px;top:350px;width:14px;height:13px;background:#2a1410;"></div>
<div class="a" style="left:153px;top:350px;width:13px;height:13px;background:#5a2a16;"></div>
<div class="a" style="left:166px;top:350px;width:14px;height:13px;background:#5a2a1a;"></div>
<div class="a chk" style="left:180px;top:350px;width:13px;height:13px"></div>
<div class="a" style="left:193px;top:350px;width:14px;height:13px;background:#6670a0;"></div>
<div class="a" style="left:207px;top:350px;width:13px;height:13px;background:#c0aa92;"></div>
<div class="a" style="left:220px;top:350px;width:14px;height:13px;background:#6a4a1e;"></div>
<div class="a" style="left:234px;top:350px;width:13px;height:13px;background:#a8b8f0;"></div>
<div class="a chk" style="left:247px;top:350px;width:14px;height:13px"></div>
<div class="a chk" style="left:261px;top:350px;width:13px;height:13px"></div>
<div class="a" style="left:274px;top:350px;width:14px;height:13px;background:#a9a2c4;"></div>
<div class="a" style="left:72px;top:363px;width:13px;height:13px;background:#a3a2b8;"></div>
<div class="a" style="left:85px;top:363px;width:14px;height:13px;background:#7a7098;"></div>
<div class="a chk" style="left:99px;top:363px;width:13px;height:13px"></div>
<div class="a chk" style="left:112px;top:363px;width:14px;height:13px"></div>
<div class="a chk" style="left:126px;top:363px;width:13px;height:13px"></div>
<div class="a chk" style="left:139px;top:363px;width:14px;height:13px"></div>
<div class="a chk" style="left:153px;top:363px;width:13px;height:13px"></div>
<div class="a chk" style="left:166px;top:363px;width:14px;height:13px"></div>
<div class="a chk" style="left:180px;top:363px;width:13px;height:13px"></div>
<div class="a chk" style="left:193px;top:363px;width:14px;height:13px"></div>
<div class="a chk" style="left:207px;top:363px;width:13px;height:13px"></div>
<div class="a chk" style="left:220px;top:363px;width:14px;height:13px"></div>
<div class="a chk" style="left:234px;top:363px;width:13px;height:13px"></div>
<div class="a chk" style="left:247px;top:363px;width:14px;height:13px"></div>
<div class="a chk" style="left:261px;top:363px;width:13px;height:13px"></div>
<div class="a" style="left:274px;top:363px;width:14px;height:13px;background:#b0a2c8;"></div>
<div class="a" style="left:72px;top:376px;width:13px;height:13px;background:#8070a2;"></div>
<div class="a chk" style="left:85px;top:376px;width:14px;height:13px"></div>
<div class="a" style="left:99px;top:376px;width:13px;height:13px;background:#b2b2b2;"></div>
<div class="a" style="left:112px;top:376px;width:14px;height:13px;background:#e4623e;"></div>
<div class="a" style="left:126px;top:376px;width:13px;height:13px;background:#b9a0a0;"></div>
<div class="a" style="left:139px;top:376px;width:14px;height:13px;background:#9a88b2;"></div>
<div class="a chk" style="left:153px;top:376px;width:13px;height:13px"></div>
<div class="a chk" style="left:166px;top:376px;width:14px;height:13px"></div>
<div class="a chk" style="left:180px;top:376px;width:13px;height:13px"></div>
<div class="a chk" style="left:193px;top:376px;width:14px;height:13px"></div>
<div class="a chk" style="left:207px;top:376px;width:13px;height:13px"></div>
<div class="a" style="left:220px;top:376px;width:14px;height:13px;background:#3c2828;"></div>
<div class="a" style="left:234px;top:376px;width:13px;height:13px;background:#282828;"></div>
<div class="a chk" style="left:247px;top:376px;width:14px;height:13px"></div>
<div class="a chk" style="left:261px;top:376px;width:13px;height:13px"></div>
<div class="a chk" style="left:274px;top:376px;width:14px;height:13px"></div>
<div class="a chk" style="left:72px;top:389px;width:13px;height:12px"></div>
<div class="a chk" style="left:85px;top:389px;width:14px;height:12px"></div>
<div class="a chk" style="left:99px;top:389px;width:13px;height:12px"></div>
<div class="a chk" style="left:112px;top:389px;width:14px;height:12px"></div>
<div class="a chk" style="left:126px;top:389px;width:13px;height:12px"></div>
<div class="a chk" style="left:139px;top:389px;width:14px;height:12px"></div>
<div class="a chk" style="left:153px;top:389px;width:13px;height:12px"></div>
<div class="a chk" style="left:166px;top:389px;width:14px;height:12px"></div>
<div class="a chk" style="left:180px;top:389px;width:13px;height:12px"></div>
<div class="a chk" style="left:193px;top:389px;width:14px;height:12px"></div>
<div class="a chk" style="left:207px;top:389px;width:13px;height:12px"></div>
<div class="a chk" style="left:220px;top:389px;width:14px;height:12px"></div>
<div class="a chk" style="left:234px;top:389px;width:13px;height:12px"></div>
<div class="a chk" style="left:247px;top:389px;width:14px;height:12px"></div>
<div class="a chk" style="left:261px;top:389px;width:13px;height:12px"></div>
<div class="a" style="left:274px;top:389px;width:14px;height:12px;background:#505880;"></div>
<div class="a" style="left:72px;top:401px;width:13px;height:13px;background:#c2b2d2;"></div>
<div class="a" style="left:85px;top:401px;width:14px;height:13px;background:#b2b2b2;"></div>
<div class="a" style="left:99px;top:401px;width:13px;height:13px;background:#828294;"></div>
<div class="a chk" style="left:112px;top:401px;width:14px;height:13px"></div>
<div class="a chk" style="left:126px;top:401px;width:13px;height:13px"></div>
<div class="a chk" style="left:139px;top:401px;width:14px;height:13px"></div>
<div class="a chk" style="left:153px;top:401px;width:13px;height:13px"></div>
<div class="a chk" style="left:166px;top:401px;width:14px;height:13px"></div>
<div class="a chk" style="left:180px;top:401px;width:13px;height:13px"></div>
<div class="a chk" style="left:193px;top:401px;width:14px;height:13px"></div>
<div class="a chk" style="left:207px;top:401px;width:13px;height:13px"></div>
<div class="a chk" style="left:220px;top:401px;width:14px;height:13px"></div>
<div class="a chk" style="left:234px;top:401px;width:13px;height:13px"></div>
<div class="a chk" style="left:247px;top:401px;width:14px;height:13px"></div>
<div class="a chk" style="left:261px;top:401px;width:13px;height:13px"></div>
<div class="a" style="left:274px;top:401px;width:14px;height:13px;background:#e8886a;"></div>
<div class="a" style="left:72px;top:414px;width:13px;height:13px;background:#e07870;"></div>
<div class="a" style="left:85px;top:414px;width:14px;height:13px;background:#701828;"></div>
<div class="a" style="left:99px;top:414px;width:13px;height:13px;background:#f6e8e0;"></div>
<div class="a" style="left:112px;top:414px;width:14px;height:13px;background:#d030d0;"></div>
<div class="a chk" style="left:126px;top:414px;width:13px;height:13px"></div>
<div class="a" style="left:139px;top:414px;width:14px;height:13px;background:#707892;"></div>
<div class="a" style="left:153px;top:414px;width:13px;height:13px;background:#b2bac8;"></div>
<div class="a" style="left:166px;top:414px;width:14px;height:13px;background:#606870;"></div>
<div class="a chk" style="left:180px;top:414px;width:13px;height:13px"></div>
<div class="a chk" style="left:193px;top:414px;width:14px;height:13px"></div>
<div class="a chk" style="left:207px;top:414px;width:13px;height:13px"></div>
<div class="a chk" style="left:220px;top:414px;width:14px;height:13px"></div>
<div class="a chk" style="left:234px;top:414px;width:13px;height:13px"></div>
<div class="a chk" style="left:247px;top:414px;width:14px;height:13px"></div>
<div class="a" style="left:261px;top:414px;width:13px;height:13px;background:#a2a2a2;"></div>
<div class="a" style="left:274px;top:414px;width:14px;height:13px;background:#e8a040;"></div>
<div class="a" style="left:72px;top:427px;width:13px;height:13px;background:#584820;"></div>
<div class="a" style="left:85px;top:427px;width:14px;height:13px;background:#f0e8d6;"></div>
<div class="a" style="left:99px;top:427px;width:13px;height:13px;background:#30d030;"></div>
<div class="a" style="left:112px;top:427px;width:14px;height:13px;background:#604012;"></div>
<div class="a" style="left:126px;top:427px;width:13px;height:13px;background:#c8c4c0;"></div>
<div class="a chk" style="left:139px;top:427px;width:14px;height:13px"></div>
<div class="a" style="left:153px;top:427px;width:13px;height:13px;background:#508060;"></div>
<div class="a" style="left:166px;top:427px;width:14px;height:13px;background:#50a088;"></div>
<div class="a" style="left:180px;top:427px;width:13px;height:13px;background:#a83040;"></div>
<div class="a chk" style="left:193px;top:427px;width:14px;height:13px"></div>
<div class="a chk" style="left:207px;top:427px;width:13px;height:13px"></div>
<div class="a chk" style="left:220px;top:427px;width:14px;height:13px"></div>
<div class="a chk" style="left:234px;top:427px;width:13px;height:13px"></div>
<div class="a chk" style="left:247px;top:427px;width:14px;height:13px"></div>
<div class="a chk" style="left:261px;top:427px;width:13px;height:13px"></div>
<div class="a" style="left:274px;top:427px;width:14px;height:13px;background:#a2c2f8;"></div>
<div class="a" style="left:72px;top:440px;width:13px;height:13px;background:#683012;"></div>
<div class="a" style="left:85px;top:440px;width:14px;height:13px;background:#f0e8d8;"></div>
<div class="a" style="left:99px;top:440px;width:13px;height:13px;background:#d8d080;"></div>
<div class="a" style="left:112px;top:440px;width:14px;height:13px;background:#d090a2;"></div>
<div class="a chk" style="left:126px;top:440px;width:13px;height:13px"></div>
<div class="a" style="left:139px;top:440px;width:14px;height:13px;background:#a2f0a2;"></div>
<div class="a" style="left:153px;top:440px;width:13px;height:13px;background:#505050;"></div>
<div class="a" style="left:166px;top:440px;width:14px;height:13px;background:#8282b2;"></div>
<div class="a" style="left:180px;top:440px;width:13px;height:13px;background:#f0e070;"></div>
<div class="a" style="left:193px;top:440px;width:14px;height:13px;background:#e8a050;"></div>
<div class="a" style="left:207px;top:440px;width:13px;height:13px;background:#d8d8e0;"></div>
<div class="a chk" style="left:220px;top:440px;width:14px;height:13px"></div>
<div class="a chk" style="left:234px;top:440px;width:13px;height:13px"></div>
<div class="a" style="left:247px;top:440px;width:14px;height:13px;background:#c06060;"></div>
<div class="a" style="left:261px;top:440px;width:13px;height:13px;background:#d0a820;"></div>
<div class="a" style="left:274px;top:440px;width:14px;height:13px;background:#686882;"></div>
<div class="a" style="left:72px;top:453px;width:13px;height:13px;background:#f0f0e8;"></div>
<div class="a" style="left:85px;top:453px;width:14px;height:13px;background:#e08892;"></div>
<div class="a" style="left:99px;top:453px;width:13px;height:13px;background:#606052;"></div>
<div class="a" style="left:112px;top:453px;width:14px;height:13px;background:#f8d862;"></div>
<div class="a" style="left:126px;top:453px;width:13px;height:13px;background:#403820;"></div>
<div class="a" style="left:139px;top:453px;width:14px;height:13px;background:#5080d0;"></div>
<div class="a chk" style="left:153px;top:453px;width:13px;height:13px"></div>
<div class="a" style="left:166px;top:453px;width:14px;height:13px;background:#5058b2;"></div>
<div class="a" style="left:180px;top:453px;width:13px;height:13px;background:#a298d8;"></div>
<div class="a" style="left:193px;top:453px;width:14px;height:13px;background:#404092;"></div>
<div class="a" style="left:207px;top:453px;width:13px;height:13px;background:#404878;"></div>
<div class="a chk" style="left:220px;top:453px;width:14px;height:13px"></div>
<div class="a chk" style="left:234px;top:453px;width:13px;height:13px"></div>
<div class="a chk" style="left:247px;top:453px;width:14px;height:13px"></div>
<div class="a chk" style="left:261px;top:453px;width:13px;height:13px"></div>
<div class="a" style="left:274px;top:453px;width:14px;height:13px;background:#505050;"></div>
<div class="a" style="left:180px;top:440px;width:14px;height:13px;border:2px solid #f4c4c8"></div>
<div class="a" style="left:71px;top:466px;width:232px;height:10px;background:#505050;"></div>
<div class="a" style="left:74px;top:487px;width:9px;height:10px;background:#c00010;border:1px solid #333"></div>
<div class="a" style="left:115px;top:487px;width:9px;height:10px;background:#10d010;border:1px solid #333"></div>
<div class="a" style="left:156px;top:487px;width:9px;height:10px;background:#1010d0;border:1px solid #333"></div>
<svg class="a" style="left:229px;top:479px;" width="22" height="22" viewBox="0 0 22 22"><path d="M5 5h8l4 4v10H5z" stroke="#bdbdbd" fill="none" stroke-width="1.6" stroke-linecap="round" stroke-linejoin="round" stroke-width="1.3"/><path d="M11 10v6M8 13l3 3 3-3" stroke="#bdbdbd" fill="none" stroke-width="1.6" stroke-linecap="round" stroke-linejoin="round" stroke-width="1.2"/></svg>
<svg class="a" style="left:254px;top:479px;" width="22" height="22" viewBox="0 0 22 22"><path d="M9 3c-4 6-6 9-6 12a6 6 0 0011 0c0-3-2-6-5-12z" stroke="#bdbdbd" fill="none" stroke-width="1.6" stroke-linecap="round" stroke-linejoin="round" stroke-width="1.3"/><circle cx="16" cy="17" r="4" stroke="#bdbdbd" fill="none" stroke-width="1.6" stroke-linecap="round" stroke-linejoin="round" stroke-width="1.2"/></svg>
<svg class="a" style="left:280px;top:479px;" width="20" height="22" viewBox="0 0 20 22"><rect x="4" y="6" width="12" height="14" stroke="#bdbdbd" fill="none" stroke-width="1.6" stroke-linecap="round" stroke-linejoin="round" stroke-width="1.3"/><path d="M2 5h16M8 2h4M8 9v8M12 9v8" stroke="#bdbdbd" fill="none" stroke-width="1.6" stroke-linecap="round" stroke-linejoin="round" stroke-width="1.2"/></svg>
<div class="a" style="left:71px;top:505px;width:232px;height:3px;background:#3a3a3a;"></div>
<div class="a" style="left:71px;top:508px;width:232px;height:19px;background:#404040;"></div>
<svg class="a" style="left:76px;top:511px;" width="14" height="12" viewBox="0 0 14 12"><path d="M2 2h10M2 6h10M2 10h10" stroke="#8a8a8a" stroke-width="1.5"/></svg>
<div class="a" style="left:95px;top:508px;width:127px;height:19px;background:#525252;"></div>
<svg class="a" style="left:103px;top:509px;" width="20" height="18" viewBox="0 0 20 18"><path d="M3 16l10-12" stroke="#c8c8c8" stroke-width="3"/><rect x="11" y="10" width="7" height="7" stroke="#bdbdbd" fill="none" stroke-width="1.6" stroke-linecap="round" stroke-linejoin="round" stroke-width="1.2"/></svg>
<div class="t" style="left:130px;top:514px;font-size:12px;color:#cfcfcf;letter-spacing:-0.3px">Sub Tool [Brush]</div>
<div class="a" style="left:224px;top:508px;width:37px;height:19px;background:#4a4a4a;"></div>
<svg class="a" style="left:232px;top:509px;" width="20" height="18" viewBox="0 0 20 18"><path d="M4 15l10-11" stroke="#888" stroke-width="2.5"/><path d="M3 16h12" stroke="#888" stroke-width="1.4"/></svg>
<div class="a" style="left:71px;top:527px;width:232px;height:109px;background:#505050;"></div>
<div class="a" style="left:74px;top:535px;width:73px;height:31px;background:#5f6b86;border:1px solid #3e3e3e;border-radius:2px;overflow:hidden"><svg style="position:absolute;left:3px;top:2px" width="26" height="26"><path d="M4 23c-1-6 3-11 8-13l3 3c-2 5-6 9-11 10z" stroke="#bdbdbd" fill="none" stroke-width="1.6" stroke-linecap="round" stroke-linejoin="round" stroke-width="1.4"/><circle cx="17" cy="7" r="3.5" fill="#cfcfcf"/></svg><div class="t" style="left:31px;top:7px;font-size:15px;color:#c4c4c4;letter-spacing:-0.3px">Water</div></div>
<div class="a" style="left:150px;top:535px;width:73px;height:31px;background:#474747;border:1px solid #3e3e3e;border-radius:2px;overflow:hidden"><svg style="position:absolute;left:3px;top:2px" width="26" height="26"><path d="M4 23c-1-6 3-11 8-13l3 3c-2 5-6 9-11 10z" stroke="#bdbdbd" fill="none" stroke-width="1.6" stroke-linecap="round" stroke-linejoin="round" stroke-width="1.4"/><circle cx="17" cy="7" r="3.5" fill="#cfcfcf"/></svg><div class="t" style="left:31px;top:7px;font-size:15px;color:#c4c4c4;letter-spacing:-0.3px">Oil Ink</div></div>
<div class="a" style="left:226px;top:535px;width:75px;height:31px;background:#474747;border:1px solid #3e3e3e;border-radius:2px;overflow:hidden"><div style="position:absolute;left:1px;top:1px;width:27px;height:27px;background:#a9ecf8"></div><svg style="position:absolute;left:1px;top:1px" width="27" height="27"><path d="M12 3v18M3 12h18M20 17v8M16 21h8" stroke="#2a4048" stroke-width="1.6"/></svg><div class="t" style="left:31px;top:7px;font-size:15px;color:#bfbfbf;letter-spacing:-0.3px">Custo</div></div>
<div class="a" style="left:74px;top:568px;width:73px;height:31px;background:#474747;border:1px solid #3e3e3e;border-radius:2px;overflow:hidden"><svg style="position:absolute;left:3px;top:2px" width="26" height="26"><path d="M4 23c-1-6 3-11 8-13l3 3c-2 5-6 9-11 10z" stroke="#bdbdbd" fill="none" stroke-width="1.6" stroke-linecap="round" stroke-linejoin="round" stroke-width="1.4"/><circle cx="17" cy="7" r="3.5" fill="#cfcfcf"/></svg><div class="t" style="left:31px;top:7px;font-size:15px;color:#c4c4c4;letter-spacing:-0.3px">Realis</div></div>
<div class="a" style="left:150px;top:568px;width:73px;height:31px;background:#474747;border:1px solid #3e3e3e;border-radius:2px;overflow:hidden"><svg style="position:absolute;left:3px;top:2px" width="26" height="26"><path d="M4 23c-1-6 3-11 8-13l3 3c-2 5-6 9-11 10z" stroke="#bdbdbd" fill="none" stroke-width="1.6" stroke-linecap="round" stroke-linejoin="round" stroke-width="1.4"/><circle cx="17" cy="7" r="3.5" fill="#cfcfcf"/></svg><div class="t" style="left:31px;top:7px;font-size:15px;color:#c4c4c4;letter-spacing:-0.3px">Photo</div></div>
<div class="a" style="left:226px;top:568px;width:75px;height:31px;background:#474747;border:1px solid #3e3e3e;border-radius:2px;overflow:hidden"><svg style="position:absolute;left:3px;top:2px" width="26" height="26"><path d="M4 23c-1-6 3-11 8-13l3 3c-2 5-6 9-11 10z" stroke="#bdbdbd" fill="none" stroke-width="1.6" stroke-linecap="round" stroke-linejoin="round" stroke-width="1.4"/><circle cx="17" cy="7" r="3.5" fill="#cfcfcf"/></svg><div class="t" style="left:31px;top:7px;font-size:15px;color:#c4c4c4;letter-spacing:-0.3px">Samp</div></div>
<div class="a" style="left:74px;top:602px;width:73px;height:31px;background:#474747;border:1px solid #3e3e3e;border-radius:2px;overflow:hidden"><svg style="position:absolute;left:3px;top:2px" width="26" height="26"><path d="M4 23c-1-6 3-11 8-13l3 3c-2 5-6 9-11 10z" stroke="#bdbdbd" fill="none" stroke-width="1.6" stroke-linecap="round" stroke-linejoin="round" stroke-width="1.4"/><circle cx="17" cy="7" r="3.5" fill="#cfcfcf"/></svg><div class="t" style="left:31px;top:7px;font-size:15px;color:#c4c4c4;letter-spacing:-0.3px">Custo</div></div>
<div class="a" style="left:150px;top:602px;width:73px;height:31px;background:#474747;border:1px solid #3e3e3e;border-radius:2px;overflow:hidden"><svg style="position:absolute;left:3px;top:2px" width="26" height="26"><path d="M4 23c-1-6 3-11 8-13l3 3c-2 5-6 9-11 10z" stroke="#bdbdbd" fill="none" stroke-width="1.6" stroke-linecap="round" stroke-linejoin="round" stroke-width="1.4"/><circle cx="17" cy="7" r="3.5" fill="#cfcfcf"/></svg><div class="t" style="left:31px;top:7px;font-size:15px;color:#c4c4c4;letter-spacing:-0.3px">Highli</div></div>
<div class="a" style="left:71px;top:636px;width:218px;height:166px;background:#3a3a3a;"></div>
<div class="a" style="left:72px;top:636px;width:216px;height:30px;background:#454545;"></div>
<svg class="a" style="left:72px;top:636px;" width="216" height="30" viewBox="0 0 216 30"><defs><filter id="bb" x="-20%" y="-150%" width="140%" height="400%"><feGaussianBlur stdDeviation="1.1"/></filter><linearGradient id="bu" x1="0" x2="1"><stop offset="0" stop-color="#999" stop-opacity="0"/><stop offset="0.6" stop-color="#ddd"/><stop offset="1" stop-color="#bbb" stop-opacity="0.2"/></linearGradient><linearGradient id="be" x1="0" x2="1"><stop offset="0" stop-color="#bbb" stop-opacity="0.1"/><stop offset="0.45" stop-color="#eee"/><stop offset="1" stop-color="#888" stop-opacity="0.2"/></linearGradient><linearGradient id="bs" x1="0" x2="1"><stop offset="0" stop-color="#fff" stop-opacity="0.1"/><stop offset="0.4" stop-color="#e8eaf4" stop-opacity="0.9"/><stop offset="1" stop-color="#fff" stop-opacity="0.1"/></linearGradient></defs><path d="M22 18Q60 4 112 15" stroke="url(#bu)" stroke-width="3" fill="none" filter="url(#bb)"/></svg>
<div class="t" style="right:1633px;top:646px;font-size:14.5px;color:#e8e8e8;letter-spacing:-0.3px;background:rgba(60,60,60,0.65);padding:1px 1px 2px 3px">Uneven layering brush</div>
<div class="a" style="left:72px;top:667px;width:216px;height:30px;background:#454545;"></div>
<svg class="a" style="left:72px;top:667px;" width="216" height="30" viewBox="0 0 216 30"><path d="M18 21Q50 6 82 8Q110 10 145 12Q110 16 82 16Q50 14 18 21Z" fill="url(#be)" filter="url(#bb)"/></svg>
<div class="t" style="right:1633px;top:677px;font-size:14.5px;color:#e8e8e8;letter-spacing:-0.3px;background:rgba(60,60,60,0.65);padding:1px 1px 2px 3px">Emphasizing texture</div>
<div class="a" style="left:72px;top:698px;width:216px;height:30px;background:#454545;"></div>
<svg class="a" style="left:72px;top:698px;" width="216" height="30" viewBox="0 0 216 30"><path d="M11 21C25 12 40 7 55 8S95 20 112 20S140 9 148 7" stroke="#e6e6e6" stroke-width="10" fill="none" stroke-linecap="round" filter="url(#bb)"/></svg>
<div class="t" style="right:1633px;top:708px;font-size:14.5px;color:#e8e8e8;letter-spacing:-0.3px;background:rgba(60,60,60,0.65);padding:1px 1px 2px 3px">Paint and apply</div>
<div class="a" style="left:72px;top:729px;width:216px;height:30px;background:#454545;"></div>
<svg class="a" style="left:72px;top:729px;" width="216" height="30" viewBox="0 0 216 30"><path d="M13 23C30 12 45 5 62 5S95 16 110 17S138 10 150 5C142 16 128 27 110 27S80 16 62 15S30 20 13 23Z" fill="#ffffff"/></svg>
<div class="t" style="right:1633px;top:739px;font-size:14.5px;color:#e8e8e8;letter-spacing:-0.3px;background:rgba(60,60,60,0.65);padding:1px 1px 2px 3px">Brush Hard</div>
<div class="a" style="left:72px;top:760px;width:216px;height:30px;background:#5f6b86;"></div>
<svg class="a" style="left:72px;top:760px;" width="216" height="30" viewBox="0 0 216 30"><path d="M12 28C30 12 50 4 72 4S120 8 150 14C120 14 95 16 72 18S35 22 12 28Z" fill="url(#bs)" filter="url(#bb)"/></svg>
<div class="t" style="right:1633px;top:770px;font-size:14.5px;color:#e8e8e8;letter-spacing:-0.3px;background:rgba(70,80,105,0.75);padding:1px 1px 2px 3px">Sampled Brush 10 1 2</div>
<div class="a" style="left:72px;top:791px;width:216px;height:11px;background:#454545;"></div>
<svg class="a" style="left:72px;top:791px;" width="216" height="11" viewBox="0 0 216 11"><path d="M30 10c20-6 40-8 70-3" stroke="#ddd" stroke-width="4" fill="none" opacity="0.6"/></svg>
<div class="a" style="left:289px;top:636px;width:13px;height:166px;background:#474747;"></div>
<div class="a" style="left:290px;top:637px;width:11px;height:15px;background:#555;"></div>
<svg class="a" style="left:290px;top:637px;" width="11" height="15" viewBox="0 0 11 15"><path d="M3 9l2.5-3 2.5 3" stroke="#999" fill="none" stroke-width="1"/></svg>
<div class="a" style="left:290px;top:653px;width:11px;height:50px;background:#5a5a5a;border-radius:5px"></div>
<div class="a" style="left:290px;top:786px;width:11px;height:15px;background:#555;"></div>
<svg class="a" style="left:290px;top:786px;" width="11" height="15" viewBox="0 0 11 15"><path d="M3 6l2.5 3 2.5-3" stroke="#999" fill="none" stroke-width="1"/></svg>
<div class="a" style="left:71px;top:802px;width:232px;height:28px;background:#505050;"></div>
<svg class="a" style="left:229px;top:806px;" width="22" height="22" viewBox="0 0 22 22"><rect x="4" y="5" width="14" height="13" stroke="#bdbdbd" fill="none" stroke-width="1.6" stroke-linecap="round" stroke-linejoin="round" stroke-width="1.3"/><path d="M11 3v9M8 9l3 3 3-3" stroke="#bdbdbd" fill="none" stroke-width="1.6" stroke-linecap="round" stroke-linejoin="round" stroke-width="1.2"/></svg>
<svg class="a" style="left:254px;top:806px;" width="22" height="22" viewBox="0 0 22 22"><rect x="3" y="4" width="11" height="11" stroke="#bdbdbd" fill="none" stroke-width="1.6" stroke-linecap="round" stroke-linejoin="round" stroke-width="1.3"/><rect x="8" y="8" width="11" height="11" stroke="#bdbdbd" fill="none" stroke-width="1.6" stroke-linecap="round" stroke-linejoin="round" stroke-width="1.3"/><path d="M13.5 11v5M11 13.5h5" stroke="#bdbdbd" fill="none" stroke-width="1.6" stroke-linecap="round" stroke-linejoin="round" stroke-width="1.2"/></svg>
<svg class="a" style="left:280px;top:806px;" width="20" height="22" viewBox="0 0 20 22"><rect x="4" y="6" width="12" height="14" stroke="#bdbdbd" fill="none" stroke-width="1.6" stroke-linecap="round" stroke-linejoin="round" stroke-width="1.3"/><path d="M2 5h16M8 2h4M8 9v8M12 9v8" stroke="#bdbdbd" fill="none" stroke-width="1.6" stroke-linecap="round" stroke-linejoin="round" stroke-width="1.2"/></svg>
<div class="a" style="left:71px;top:830px;width:232px;height:4px;background:#3a3a3a;"></div>
<div class="a" style="left:71px;top:834px;width:232px;height:24px;background:#404040;"></div>
<svg class="a" style="left:76px;top:839px;" width="14" height="12" viewBox="0 0 14 12"><path d="M2 2h10M2 6h10M2 10h10" stroke="#8a8a8a" stroke-width="1.5"/></svg>
<div class="a" style="left:95px;top:835px;width:207px;height:23px;background:#525252;"></div>
<svg class="a" style="left:103px;top:836px;" width="22" height="22" viewBox="0 0 22 22"><path d="M3 17l10-12" stroke="#c8c8c8" stroke-width="3"/><circle cx="15" cy="15" r="4" stroke="#bdbdbd" fill="none" stroke-width="1.6" stroke-linecap="round" stroke-linejoin="round" stroke-width="1.2"/></svg>
<div class="t" style="left:131px;top:841px;font-size:12px;color:#cfcfcf;letter-spacing:-0.3px">Brush size [Sampled Brush 10 1</div>
<div class="a" style="left:71px;top:858px;width:232px;height:217px;background:#505050;"></div>
<div class="a" style="left:72px;top:858px;width:215px;height:15px;background:#3e3e3e;"></div>
<div class="a" style="left:72px;top:856px;width:42px;height:14px;overflow:hidden"><div class="t" style="left:0;width:42px;text-align:center;top:0;font-size:13px;color:#cfcfcf">20</div></div>
<div class="a" style="left:115px;top:856px;width:42px;height:14px;overflow:hidden"><div class="t" style="left:0;width:42px;text-align:center;top:0;font-size:13px;color:#cfcfcf">25</div></div>
<div class="a" style="left:158px;top:856px;width:42px;height:14px;overflow:hidden"><div class="t" style="left:0;width:42px;text-align:center;top:0;font-size:13px;color:#cfcfcf">30</div></div>
<div class="a" style="left:201px;top:856px;width:42px;height:14px;overflow:hidden"><div class="t" style="left:0;width:42px;text-align:center;top:0;font-size:13px;color:#cfcfcf">40</div></div>
<div class="a" style="left:244px;top:856px;width:42px;height:14px;overflow:hidden"><div class="t" style="left:0;width:42px;text-align:center;top:0;font-size:13px;color:#cfcfcf">50</div></div>
<div class="a" style="left:72px;top:873px;width:215px;height:202px;background:#2e2e2e;"></div>
<div class="a" style="left:72px;top:873px;width:42px;height:50px;background:#454545;"></div>
<div class="a" style="left:78px;top:877px;width:31px;height:31px;border-radius:50%;background:#fff;overflow:hidden"><div style="position:absolute;left:0;top:23px;width:31px;height:8px;background:#9a9a9a"></div></div>
<div class="t" style="left:72px;width:42px;text-align:center;top:905px;font-size:14.5px;color:#dcdcdc;letter-spacing:-0.5px;text-shadow:0 0 2px #222">60</div>
<div class="a" style="left:116px;top:873px;width:42px;height:50px;background:#454545;"></div>
<div class="a" style="left:122px;top:877px;width:31px;height:31px;border-radius:50%;background:#fff;overflow:hidden"><div style="position:absolute;left:0;top:23px;width:31px;height:8px;background:#9a9a9a"></div></div>
<div class="t" style="left:116px;width:42px;text-align:center;top:905px;font-size:14.5px;color:#dcdcdc;letter-spacing:-0.5px;text-shadow:0 0 2px #222">70</div>
<div class="a" style="left:158px;top:873px;width:42px;height:50px;background:#454545;"></div>
<div class="a" style="left:164px;top:877px;width:31px;height:31px;border-radius:50%;background:#fff;overflow:hidden"><div style="position:absolute;left:0;top:23px;width:31px;height:8px;background:#9a9a9a"></div></div>
<div class="t" style="left:158px;width:42px;text-align:center;top:905px;font-size:14.5px;color:#dcdcdc;letter-spacing:-0.5px;text-shadow:0 0 2px #222">80</div>
<div class="a" style="left:202px;top:873px;width:42px;height:50px;background:#454545;"></div>
<div class="a" style="left:208px;top:877px;width:31px;height:31px;border-radius:50%;background:#fff;overflow:hidden"><div style="position:absolute;left:0;top:23px;width:31px;height:8px;background:#9a9a9a"></div></div>
<div class="t" style="left:202px;width:42px;text-align:center;top:905px;font-size:14.5px;color:#dcdcdc;letter-spacing:-0.5px;text-shadow:0 0 2px #222">100</div>
<div class="a" style="left:246px;top:873px;width:42px;height:50px;background:#5f6b86;"></div>
<div class="a" style="left:252px;top:877px;width:31px;height:31px;border-radius:50%;background:#fff;overflow:hidden"><div style="position:absolute;left:0;top:23px;width:31px;height:8px;background:#9a9a9a"></div></div>
<div class="t" style="left:246px;width:42px;text-align:center;top:905px;font-size:14.5px;color:#dcdcdc;letter-spacing:-0.5px;text-shadow:0 0 2px #222">120</div>
<div class="a" style="left:72px;top:924px;width:42px;height:50px;background:#454545;"></div>
<div class="a" style="left:78px;top:928px;width:31px;height:31px;border-radius:50%;background:#fff;overflow:hidden"><div style="position:absolute;left:0;top:23px;width:31px;height:8px;background:#9a9a9a"></div></div>
<div class="t" style="left:72px;width:42px;text-align:center;top:956px;font-size:14.5px;color:#dcdcdc;letter-spacing:-0.5px;text-shadow:0 0 2px #222">150</div>
<div class="a" style="left:116px;top:924px;width:42px;height:50px;background:#454545;"></div>
<div class="a" style="left:122px;top:928px;width:31px;height:31px;border-radius:50%;background:#fff;overflow:hidden"><div style="position:absolute;left:0;top:23px;width:31px;height:8px;background:#9a9a9a"></div></div>
<div class="t" style="left:116px;width:42px;text-align:center;top:956px;font-size:14.5px;color:#dcdcdc;letter-spacing:-0.5px;text-shadow:0 0 2px #222">170</div>
<div class="a" style="left:158px;top:924px;width:42px;height:50px;background:#454545;"></div>
<div class="a" style="left:164px;top:928px;width:31px;height:31px;border-radius:50%;background:#fff;overflow:hidden"><div style="position:absolute;left:0;top:23px;width:31px;height:8px;background:#9a9a9a"></div></div>
<div class="t" style="left:158px;width:42px;text-align:center;top:956px;font-size:14.5px;color:#dcdcdc;letter-spacing:-0.5px;text-shadow:0 0 2px #222">200</div>
<div class="a" style="left:202px;top:924px;width:42px;height:50px;background:#454545;"></div>
<div class="a" style="left:208px;top:928px;width:31px;height:31px;border-radius:50%;background:#fff;overflow:hidden"><div style="position:absolute;left:0;top:23px;width:31px;height:8px;background:#9a9a9a"></div></div>
<div class="t" style="left:202px;width:42px;text-align:center;top:956px;font-size:14.5px;color:#dcdcdc;letter-spacing:-0.5px;text-shadow:0 0 2px #222">250</div>
<div class="a" style="left:246px;top:924px;width:42px;height:50px;background:#454545;"></div>
<div class="a" style="left:252px;top:928px;width:31px;height:31px;border-radius:50%;background:#fff;overflow:hidden"><div style="position:absolute;left:0;top:23px;width:31px;height:8px;background:#9a9a9a"></div></div>
<div class="t" style="left:246px;width:42px;text-align:center;top:956px;font-size:14.5px;color:#dcdcdc;letter-spacing:-0.5px;text-shadow:0 0 2px #222">300</div>
<div class="a" style="left:72px;top:976px;width:42px;height:50px;background:#454545;"></div>
<div class="a" style="left:78px;top:980px;width:31px;height:31px;border-radius:50%;background:#fff;overflow:hidden"><div style="position:absolute;left:0;top:23px;width:31px;height:8px;background:#9a9a9a"></div></div>
<div class="t" style="left:72px;width:42px;text-align:center;top:1008px;font-size:14.5px;color:#dcdcdc;letter-spacing:-0.5px;text-shadow:0 0 2px #222">400</div>
<div class="a" style="left:116px;top:976px;width:42px;height:50px;background:#454545;"></div>
<div class="a" style="left:122px;top:980px;width:31px;height:31px;border-radius:50%;background:#fff;overflow:hidden"><div style="position:absolute;left:0;top:23px;width:31px;height:8px;background:#9a9a9a"></div></div>
<div class="t" style="left:116px;width:42px;text-align:center;top:1008px;font-size:14.5px;color:#dcdcdc;letter-spacing:-0.5px;text-shadow:0 0 2px #222">500</div>
<div class="a" style="left:158px;top:976px;width:42px;height:50px;background:#454545;"></div>
<div class="a" style="left:164px;top:980px;width:31px;height:31px;border-radius:50%;background:#fff;overflow:hidden"><div style="position:absolute;left:0;top:23px;width:31px;height:8px;background:#9a9a9a"></div></div>
<div class="t" style="left:158px;width:42px;text-align:center;top:1008px;font-size:14.5px;color:#dcdcdc;letter-spacing:-0.5px;text-shadow:0 0 2px #222">600</div>
<div class="a" style="left:202px;top:976px;width:42px;height:50px;background:#454545;"></div>
<div class="a" style="left:208px;top:980px;width:31px;height:31px;border-radius:50%;background:#fff;overflow:hidden"><div style="position:absolute;left:0;top:23px;width:31px;height:8px;background:#9a9a9a"></div></div>
<div class="t" style="left:202px;width:42px;text-align:center;top:1008px;font-size:14.5px;color:#dcdcdc;letter-spacing:-0.5px;text-shadow:0 0 2px #222">700</div>
<div class="a" style="left:246px;top:976px;width:42px;height:50px;background:#454545;"></div>
<div class="a" style="left:252px;top:980px;width:31px;height:31px;border-radius:50%;background:#fff;overflow:hidden"><div style="position:absolute;left:0;top:23px;width:31px;height:8px;background:#9a9a9a"></div></div>
<div class="t" style="left:246px;width:42px;text-align:center;top:1008px;font-size:14.5px;color:#dcdcdc;letter-spacing:-0.5px;text-shadow:0 0 2px #222">800</div>
<div class="a" style="left:72px;top:1027px;width:42px;height:48px;background:#454545;"></div>
<div class="a" style="left:78px;top:1031px;width:31px;height:31px;border-radius:50%;background:#fff;overflow:hidden"><div style="position:absolute;left:0;top:23px;width:31px;height:8px;background:#9a9a9a"></div></div>
<div class="t" style="left:72px;width:42px;text-align:center;top:1059px;font-size:14.5px;color:#dcdcdc;letter-spacing:-0.5px;text-shadow:0 0 2px #222">1000</div>
<div class="a" style="left:116px;top:1027px;width:42px;height:48px;background:#454545;"></div>
<div class="a" style="left:122px;top:1031px;width:31px;height:31px;border-radius:50%;background:#fff;overflow:hidden"><div style="position:absolute;left:0;top:23px;width:31px;height:8px;background:#9a9a9a"></div></div>
<div class="t" style="left:116px;width:42px;text-align:center;top:1059px;font-size:14.5px;color:#dcdcdc;letter-spacing:-0.5px;text-shadow:0 0 2px #222">1200</div>
<div class="a" style="left:158px;top:1027px;width:42px;height:48px;background:#454545;"></div>
<div class="a" style="left:164px;top:1031px;width:31px;height:31px;border-radius:50%;background:#fff;overflow:hidden"><div style="position:absolute;left:0;top:23px;width:31px;height:8px;background:#9a9a9a"></div></div>
<div class="t" style="left:158px;width:42px;text-align:center;top:1059px;font-size:14.5px;color:#dcdcdc;letter-spacing:-0.5px;text-shadow:0 0 2px #222">1500</div>
<div class="a" style="left:202px;top:1027px;width:42px;height:48px;background:#454545;"></div>
<div class="a" style="left:208px;top:1031px;width:31px;height:31px;border-radius:50%;background:#fff;overflow:hidden"><div style="position:absolute;left:0;top:23px;width:31px;height:8px;background:#9a9a9a"></div></div>
<div class="t" style="left:202px;width:42px;text-align:center;top:1059px;font-size:14.5px;color:#dcdcdc;letter-spacing:-0.5px;text-shadow:0 0 2px #222">1700</div>
<div class="a" style="left:246px;top:1027px;width:42px;height:48px;background:#454545;"></div>
<div class="a" style="left:252px;top:1031px;width:31px;height:31px;border-radius:50%;background:#fff;overflow:hidden"><div style="position:absolute;left:0;top:23px;width:31px;height:8px;background:#9a9a9a"></div></div>
<div class="t" style="left:246px;width:42px;text-align:center;top:1059px;font-size:14.5px;color:#dcdcdc;letter-spacing:-0.5px;text-shadow:0 0 2px #222">2000</div>
<div class="a" style="left:289px;top:873px;width:13px;height:202px;background:#474747;"></div>
<div class="a" style="left:290px;top:874px;width:11px;height:16px;background:#555;"></div>
<svg class="a" style="left:290px;top:874px;" width="11" height="16" viewBox="0 0 11 16"><path d="M3 9l2.5-3 2.5 3" stroke="#999" fill="none" stroke-width="1"/></svg>
<div class="a" style="left:290px;top:962px;width:11px;height:90px;background:#5a5a5a;border-radius:5px"></div>
<div class="a" style="left:290px;top:1058px;width:11px;height:16px;background:#555;"></div>
<svg class="a" style="left:290px;top:1058px;" width="11" height="16" viewBox="0 0 11 16"><path d="M3 6l2.5 3 2.5-3" stroke="#999" fill="none" stroke-width="1"/></svg>
<svg class="a" style="left:456px;top:352px" width="410" height="457" viewBox="0 0 410 457"><defs><filter id="cb" x="-10%" y="-10%" width="120%" height="120%"><feGaussianBlur stdDeviation="1.3"/></filter></defs>
<rect width="410" height="457" fill="#b9b9b9"/>
<g fill="#afafaf" filter="url(#cb)"><polygon points="0,42 45,0 128,0 124,23 113,38 100,51 92,43 70,41 49,49 36,70 21,107 0,112"/><polygon points="278,0 410,0 410,64 391,102 376,120 367,145 361,181 357,214 340,200 346,96 363,70 378,30 352,17 312,32 301,32 288,13"/></g>
<g fill="#ffffff">
<polygon points="0,0 45,0 0,42"/>
<polygon points="124,23 113,38 100,51 92,81 107,98 132,109 149,105 139,90 137,70 128,53 115,38 124,30 130,21"/>
<polygon points="127,11 143,11 141,17 129,18"/>
<polygon points="213,0 278,0 288,13 301,32 295,43 278,56 263,68 256,70 241,68 235,64 233,53 226,47 231,30 224,19 218,6"/>
<polygon points="410,64 391,102 376,120 367,145 361,181 357,214 357,228 350,256 340,281 335,313 333,352 340,390 363,403 378,405 387,386 384,403 380,412 395,414 410,424"/>
<polygon points="0,143 38,188 72,228 100,245 120,256 128,271 126,292 111,309 90,298 70,290 53,284 28,284 0,296"/>
</g>
<g fill="#e3e3e3" filter="url(#cb)">
<polygon points="21,107 36,70 49,49 70,41 92,43 100,56 92,85 83,105 64,113 32,115"/>
<polygon points="92,85 111,100 134,111 162,121 199,128 227,121 245,102 254,84 263,70 278,58 293,56 297,85 307,102 320,120 327,139 329,171 320,203 316,228 320,249 325,271 307,284 305,309 295,313 256,313 235,309 192,292 169,290 158,271 147,249 150,232 145,200 131,160 128,130 108,112"/>
<polygon points="293,53 312,32 352,17 378,30 363,70 346,96 329,109 318,111 299,94"/>
<polygon points="153,71 174,63 193,46 217,44 232,54 230,65 223,76 217,87 210,98 190,102 169,101 152,95 151,79"/>
<polygon points="171,296 203,302 235,315 256,319 310,323 314,335 278,343 235,343 214,335 192,318"/>
<polygon points="102,318 120,322 160,356 149,358 107,339"/>
</g>
<g fill="#b1b1b1">
<polygon points="115,38 128,21 137,9 149,0 213,0 218,6 231,30 226,40 230,46 226,50 234,54 232,56 217,44 193,46 174,63 153,71 151,79 152,95 148,105 136,91 137,84 134,70 128,53"/>
</g>
<g fill="#b5b5b5">
<polygon points="214,309 308,306 312,318 300,324 240,322"/>
</g>
<g fill="#b4b4b4">
<polygon points="148,105 171,113 186,117 208,111 227,93 234,70 239,67 252,66 254,84 245,102 227,121 199,128 162,121 134,111"/>
</g>
<g stroke="#8e8e8e" fill="none" stroke-width="0.8">
<path d="M111,100 C118,120 120,150 117,171 C115,190 113,205 111,214"/>
<path d="M130,181 C145,200 160,212 171,214 C190,222 213,226 235,209"/>
<path d="M178,128 l6,8 -3,4 8,6 -4,5 9,3 -2,6 8,4 -3,5 10,2 -4,6 9,3 12,8 -2,5 6,6"/>
<path d="M235,100 l-4,10 6,4 -5,8 5,6 -4,8 6,6 -3,10 6,6"/>
<path d="M278,58 C290,80 300,100 320,120 C327,140 330,170 321,200 C310,210 295,215 280,214"/>
<path d="M293,56 C290,80 295,95 318,111"/>
<path d="M100,56 C95,80 92,90 83,105"/>
<path d="M9,82 c-2,6 -1,10 2,14"/>
<path d="M111,309 C130,318 150,330 181,365 C200,378 230,392 256,399 C290,405 320,405 359,399"/>
<path d="M186,377 C192,400 196,430 199,457"/>
<path d="M0,395 C15,399 30,402 43,401 C60,398 80,390 92,384"/>
<path d="M81,339 C86,370 92,420 96,457"/>
<path d="M299,405 C305,375 315,355 333,352"/>
<path d="M308,425 C330,418 360,415 385,425 C400,432 405,440 410,447"/>
<path d="M167,249 C210,240 280,236 320,234"/>
<path d="M169,271 C210,268 260,272 316,277"/>
<path d="M254,245 C256,270 257,295 256,313"/>
<path d="M224,375 l8,-4 6,4 6,-6 4,6 8,2 -6,4 4,6 -8,-2 -4,6 -4,-6 -8,2z"/>
<path d="M170,72 c-6,2 -10,10 -6,16 c3,3 8,2 10,-2 M175,93 c6,-3 12,-3 18,-4 M187,55 c5,-4 10,-4 14,0 M151,101 C165,108 175,117 185,117 C200,115 212,98 227,76 M205,80 c4,2 8,4 10,6"/>
<path d="M140,20 C150,10 170,12 180,22 C190,32 205,30 215,20 M135,45 c10,-10 25,-10 35,-2 M150,30 c5,-8 15,-8 20,0 M175,40 c8,-6 18,-5 25,2 M138,35 c4,-6 10,-7 14,-2 c4,5 2,12 -4,12 c-6,0 -8,-6 -4,-9 M142,58 c6,-6 14,-6 18,0 M160,20 l8,-12 M185,14 l10,-10 M200,30 l14,-6 M205,18 l10,8 M120,38 l-6,-6 M128,30 l-8,-8 M222,30 l8,0 M226,42 l6,3"/>
<path d="M40,190 C50,200 60,205 72,210"/>
<path d="M70,300 c4,-3 8,-2 10,1"/>
</g>
<ellipse cx="250" cy="332" rx="3" ry="2.5" fill="none" stroke="#8e8e8e" stroke-width="0.8"/>
<circle cx="174" cy="166" r="12" fill="none" stroke="#444" stroke-width="1.2"/>
<rect x="0.5" y="0.5" width="409" height="456" fill="none" stroke="#777" stroke-width="1"/>
</svg>
<div class="a" style="left:1135px;top:63px;width:244px;height:1017px;background:#3b3b3b;"></div>
<div class="a" style="left:1137px;top:63px;width:241px;height:27px;background:#3c3c3c;"></div>
<div class="a" style="left:1141px;top:67px;width:4px;height:20px;background:#5a5a5a;"></div>
<svg class="a" style="left:1305px;top:69px;" width="13" height="13" viewBox="0 0 13 13"><path d="M2 1l4 5-4 5" stroke="#8f8f8f" fill="none" stroke-width="1.3"/></svg>
<svg class="a" style="left:1335px;top:69px;" width="13" height="13" viewBox="0 0 13 13"><path d="M2 1l4 5-4 5 M6 1l4 5-4 5" stroke="#8f8f8f" fill="none" stroke-width="1.3"/></svg>
<svg class="a" style="left:1355px;top:69px;" width="13" height="13" viewBox="0 0 13 13"><path d="M6 1L2 6l4 5 M10 1L6 6l4 5" stroke="#8f8f8f" fill="none" stroke-width="1.3"/></svg>
<div class="a" style="left:1352px;top:90px;width:27px;height:990px;background:#3c3c3c;"></div>
<div class="a" style="left:1137px;top:90px;width:215px;height:25px;background:#3d3d3d;"></div>
<div class="a" style="left:1137px;top:92px;width:22px;height:20px;background:#404040;"></div>
<svg class="a" style="left:1141px;top:96px;" width="14" height="12" viewBox="0 0 14 12"><path d="M2 2h10M2 6h10M2 10h10" stroke="#8a8a8a" stroke-width="1.5"/></svg>
<div class="a" style="left:1161px;top:92px;width:74px;height:23px;background:#525252;"></div>
<svg class="a" style="left:1168px;top:96px;" width="22" height="18" viewBox="0 0 22 18"><rect x="5" y="2" width="14" height="11" stroke="#bdbdbd" fill="none" stroke-width="1.6" stroke-linecap="round" stroke-linejoin="round" stroke-width="1.3"/><rect x="7" y="4" width="10" height="7" fill="#9a9a9a"/><path d="M3 5v11h14" stroke="#bdbdbd" fill="none" stroke-width="1.6" stroke-linecap="round" stroke-linejoin="round" stroke-width="1.2"/></svg>
<div class="t" style="left:1197px;top:99px;font-size:12px;color:#cfcfcf;">Navig</div>
<div class="a" style="left:1236px;top:92px;width:37px;height:23px;background:#4a4a4a;"></div>
<div class="a" style="left:1275px;top:92px;width:37px;height:23px;background:#4a4a4a;"></div>
<div class="a" style="left:1313px;top:92px;width:37px;height:23px;background:#4a4a4a;"></div>
<svg class="a" style="left:1244px;top:94px;" width="22" height="18" viewBox="0 0 22 18"><rect x="4" y="3" width="14" height="12" stroke="#8a8a8a" fill="none" stroke-width="1.6" stroke-linecap="round" stroke-linejoin="round"/><path d="M12 12h6v3" fill="#8a8a8a"/></svg>
<svg class="a" style="left:1282px;top:94px;" width="22" height="18" viewBox="0 0 22 18"><path d="M4 17a7 7 0 0114 0M6 13h10" stroke="#8a8a8a" fill="none" stroke-width="1.6" stroke-linecap="round" stroke-linejoin="round"/></svg>
<svg class="a" style="left:1321px;top:94px;" width="22" height="18" viewBox="0 0 22 18"><circle cx="11" cy="11" r="8" stroke="#8a8a8a" fill="none" stroke-width="1.6" stroke-linecap="round" stroke-linejoin="round"/><path d="M11 8v8M11 5v1" stroke="#8a8a8a" fill="none" stroke-width="1.6" stroke-linecap="round" stroke-linejoin="round"/></svg>
<div class="a" style="left:1137px;top:115px;width:215px;height:3px;background:#474747;"></div>
<div class="a" style="left:1137px;top:118px;width:215px;height:199px;background:#2e2e2e;"></div>
<svg class="a" style="left:1156px;top:118px" width="176" height="197" viewBox="0 0 410 457" preserveAspectRatio="none"><defs><filter id="cb2" x="-10%" y="-10%" width="120%" height="120%"><feGaussianBlur stdDeviation="1.3"/></filter></defs>
<rect width="410" height="457" fill="#b9b9b9"/>
<g fill="#afafaf" filter="url(#cb2)"><polygon points="0,42 45,0 128,0 124,23 113,38 100,51 92,43 70,41 49,49 36,70 21,107 0,112"/><polygon points="278,0 410,0 410,64 391,102 376,120 367,145 361,181 357,214 340,200 346,96 363,70 378,30 352,17 312,32 301,32 288,13"/></g>
<g fill="#ffffff">
<polygon points="0,0 45,0 0,42"/>
<polygon points="124,23 113,38 100,51 92,81 107,98 132,109 149,105 139,90 137,70 128,53 115,38 124,30 130,21"/>
<polygon points="127,11 143,11 141,17 129,18"/>
<polygon points="213,0 278,0 288,13 301,32 295,43 278,56 263,68 256,70 241,68 235,64 233,53 226,47 231,30 224,19 218,6"/>
<polygon points="410,64 391,102 376,120 367,145 361,181 357,214 357,228 350,256 340,281 335,313 333,352 340,390 363,403 378,405 387,386 384,403 380,412 395,414 410,424"/>
<polygon points="0,143 38,188 72,228 100,245 120,256 128,271 126,292 111,309 90,298 70,290 53,284 28,284 0,296"/>
</g>
<g fill="#e3e3e3" filter="url(#cb2)">
<polygon points="21,107 36,70 49,49 70,41 92,43 100,56 92,85 83,105 64,113 32,115"/>
<polygon points="92,85 111,100 134,111 162,121 199,128 227,121 245,102 254,84 263,70 278,58 293,56 297,85 307,102 320,120 327,139 329,171 320,203 316,228 320,249 325,271 307,284 305,309 295,313 256,313 235,309 192,292 169,290 158,271 147,249 150,232 145,200 131,160 128,130 108,112"/>
<polygon points="293,53 312,32 352,17 378,30 363,70 346,96 329,109 318,111 299,94"/>
<polygon points="153,71 174,63 193,46 217,44 232,54 230,65 223,76 217,87 210,98 190,102 169,101 152,95 151,79"/>
<polygon points="171,296 203,302 235,315 256,319 310,323 314,335 278,343 235,343 214,335 192,318"/>
<polygon points="102,318 120,322 160,356 149,358 107,339"/>
</g>
<g fill="#b1b1b1">
<polygon points="115,38 128,21 137,9 149,0 213,0 218,6 231,30 226,40 230,46 226,50 234,54 232,56 217,44 193,46 174,63 153,71 151,79 152,95 148,105 136,91 137,84 134,70 128,53"/>
</g>
<g fill="#b5b5b5">
<polygon points="214,309 308,306 312,318 300,324 240,322"/>
</g>
<g fill="#b4b4b4">
<polygon points="148,105 171,113 186,117 208,111 227,93 234,70 239,67 252,66 254,84 245,102 227,121 199,128 162,121 134,111"/>
</g>
<g stroke="#8e8e8e" fill="none" stroke-width="0.8">
<path d="M111,100 C118,120 120,150 117,171 C115,190 113,205 111,214"/>
<path d="M130,181 C145,200 160,212 171,214 C190,222 213,226 235,209"/>
<path d="M178,128 l6,8 -3,4 8,6 -4,5 9,3 -2,6 8,4 -3,5 10,2 -4,6 9,3 12,8 -2,5 6,6"/>
<path d="M235,100 l-4,10 6,4 -5,8 5,6 -4,8 6,6 -3,10 6,6"/>
<path d="M278,58 C290,80 300,100 320,120 C327,140 330,170 321,200 C310,210 295,215 280,214"/>
<path d="M293,56 C290,80 295,95 318,111"/>
<path d="M100,56 C95,80 92,90 83,105"/>
<path d="M9,82 c-2,6 -1,10 2,14"/>
<path d="M111,309 C130,318 150,330 181,365 C200,378 230,392 256,399 C290,405 320,405 359,399"/>
<path d="M186,377 C192,400 196,430 199,457"/>
<path d="M0,395 C15,399 30,402 43,401 C60,398 80,390 92,384"/>
<path d="M81,339 C86,370 92,420 96,457"/>
<path d="M299,405 C305,375 315,355 333,352"/>
<path d="M308,425 C330,418 360,415 385,425 C400,432 405,440 410,447"/>
<path d="M167,249 C210,240 280,236 320,234"/>
<path d="M169,271 C210,268 260,272 316,277"/>
<path d="M254,245 C256,270 257,295 256,313"/>
<path d="M224,375 l8,-4 6,4 6,-6 4,6 8,2 -6,4 4,6 -8,-2 -4,6 -4,-6 -8,2z"/>
<path d="M170,72 c-6,2 -10,10 -6,16 c3,3 8,2 10,-2 M175,93 c6,-3 12,-3 18,-4 M187,55 c5,-4 10,-4 14,0 M151,101 C165,108 175,117 185,117 C200,115 212,98 227,76 M205,80 c4,2 8,4 10,6"/>
<path d="M140,20 C150,10 170,12 180,22 C190,32 205,30 215,20 M135,45 c10,-10 25,-10 35,-2 M150,30 c5,-8 15,-8 20,0 M175,40 c8,-6 18,-5 25,2 M138,35 c4,-6 10,-7 14,-2 c4,5 2,12 -4,12 c-6,0 -8,-6 -4,-9 M142,58 c6,-6 14,-6 18,0 M160,20 l8,-12 M185,14 l10,-10 M200,30 l14,-6 M205,18 l10,8 M120,38 l-6,-6 M128,30 l-8,-8 M222,30 l8,0 M226,42 l6,3"/>
<path d="M40,190 C50,200 60,205 72,210"/>
<path d="M70,300 c4,-3 8,-2 10,1"/>
</g>
<ellipse cx="250" cy="332" rx="3" ry="2.5" fill="none" stroke="#8e8e8e" stroke-width="0.8"/>
</svg>
<div class="a" style="left:1137px;top:317px;width:215px;height:54px;background:#4b4b4b;"></div>
<div class="a" style="left:1142px;top:323px;width:72px;height:17px;background:#3a3a3a;border:1px solid #555"></div>
<svg class="a" style="left:1143px;top:324px;" width="70" height="15" viewBox="0 0 70 15"><path d="M0 15 C30 10 50 4 70 0 V15z" fill="#252525"/></svg>
<div class="a" style="left:1168px;top:318px;width:6px;height:25px;background:#666;"></div>
<div class="t" style="left:1186px;top:325px;font-size:14px;color:#ececec;letter-spacing:-0.5px">19.7</div>
<div class="a" style="left:1142px;top:348px;width:72px;height:17px;background:#3a3a3a;border:1px solid #555"></div>
<svg class="a" style="left:1143px;top:349px;" width="70" height="15" viewBox="0 0 70 15"><path d="M30 15 C40 2 60 0 70 8 V15z" fill="#252525"/></svg>
<div class="a" style="left:1175px;top:344px;width:6px;height:26px;background:#666;"></div>
<div class="t" style="left:1145px;top:350px;font-size:14px;color:#ececec;">0.0</div>
<svg class="a" style="left:1222px;top:320px;" width="110" height="48" viewBox="0 0 110 48"><circle cx="10" cy="11" r="9" stroke="#b4b4b4" fill="none" stroke-width="1.4"/><path d="M5 11h10" stroke="#b4b4b4" fill="none" stroke-width="1.4" stroke-width="2"/><circle cx="35" cy="11" r="9" stroke="#b4b4b4" fill="none" stroke-width="1.4"/><path d="M30 11h10M35 6v10" stroke="#b4b4b4" fill="none" stroke-width="1.4" stroke-width="2"/><circle cx="61" cy="11" r="9" stroke="#b4b4b4" fill="none" stroke-width="1.4"/><rect x="57" y="7" width="8" height="8" fill="#b4b4b4"/><path d="M1 36a9 9 0 1 0 4-7" stroke="#b4b4b4" fill="none" stroke-width="1.4"/><path d="M2 27l3 3 3-4" fill="#b4b4b4"/><path d="M44 36a9 9 0 1 1-4-7" stroke="#b4b4b4" fill="none" stroke-width="1.4"/><circle cx="61" cy="37" r="9" stroke="#b4b4b4" fill="none" stroke-width="1.4"/><circle cx="61" cy="37" r="2.5" fill="#b4b4b4"/><path d="M61 28v6" stroke="#b4b4b4" fill="none" stroke-width="1.4"/><path d="M77 4v14M77 30v14" stroke="#3a3a3a" stroke-width="1"/></svg>
<svg class="a" style="left:1302px;top:320px;" width="46" height="48" viewBox="0 0 46 48"><rect x="4" y="3" width="9" height="9" stroke="#b4b4b4" fill="none" stroke-width="1.4"/><rect x="11" y="10" width="9" height="9" stroke="#b4b4b4" fill="none" stroke-width="1.4"/><rect x="30" y="4" width="14" height="14" stroke="#b4b4b4" fill="none" stroke-width="1.4"/><path d="M33 7l8 8" stroke="#b4b4b4" fill="none" stroke-width="1.4" stroke-width="2"/><path d="M3 30l6 6-6 6zM21 30l-6 6 6 6z" stroke="#b4b4b4" fill="none" stroke-width="1.4"/><path d="M12 28v16" stroke="#b4b4b4" fill="none" stroke-width="1.4"/><path d="M30 27h14l-7 7zM30 45h14l-7-7zM28 36h18" stroke="#b4b4b4" fill="none" stroke-width="1.4"/></svg>
<div class="a" style="left:1137px;top:371px;width:215px;height:3px;background:#3a3a3a;"></div>
<div class="a" style="left:1137px;top:374px;width:215px;height:20px;background:#404040;"></div>
<svg class="a" style="left:1141px;top:378px;" width="14" height="12" viewBox="0 0 14 12"><path d="M2 2h10M2 6h10M2 10h10" stroke="#8a8a8a" stroke-width="1.5"/></svg>
<div class="a" style="left:1161px;top:376px;width:67px;height:18px;background:#525252;"></div>
<svg class="a" style="left:1165px;top:376px;" width="22" height="20" viewBox="0 0 22 20"><ellipse cx="11" cy="6" rx="7" ry="3.5" stroke="#bdbdbd" fill="none" stroke-width="1.6" stroke-linecap="round" stroke-linejoin="round" stroke-width="1.3"/><path d="M4 10c0 4 14 4 14 0M4 14c0 4 14 4 14 0" stroke="#bdbdbd" fill="none" stroke-width="1.6" stroke-linecap="round" stroke-linejoin="round" stroke-width="1.3"/></svg>
<div class="t" style="left:1196px;top:382px;font-size:12px;color:#d6d6d6;">Layer</div>
<div class="a" style="left:1229px;top:376px;width:37px;height:18px;background:#4a4a4a;"></div>
<div class="a" style="left:1268px;top:376px;width:37px;height:18px;background:#4a4a4a;"></div>
<div class="a" style="left:1307px;top:376px;width:37px;height:18px;background:#4a4a4a;"></div>
<svg class="a" style="left:1237px;top:376px;" width="22" height="18" viewBox="0 0 22 18"><path d="M5 6h10a4 4 0 010 8H5" stroke="#8a8a8a" fill="none" stroke-width="1.6" stroke-linecap="round" stroke-linejoin="round"/><path d="M8 3l-3 3 3 3" stroke="#8a8a8a" fill="none" stroke-width="1.6" stroke-linecap="round" stroke-linejoin="round"/></svg>
<svg class="a" style="left:1276px;top:376px;" width="22" height="18" viewBox="0 0 22 18"><path d="M3 16V7h16v9M3 7l16-4" stroke="#8a8a8a" fill="none" stroke-width="1.6" stroke-linecap="round" stroke-linejoin="round"/></svg>
<svg class="a" style="left:1315px;top:376px;" width="22" height="18" viewBox="0 0 22 18"><path d="M4 16a7 7 0 0114 0" stroke="#8a8a8a" fill="none" stroke-width="1.6" stroke-linecap="round" stroke-linejoin="round"/><path d="M3 14h16" stroke="#8a8a8a" fill="none" stroke-width="1.6" stroke-linecap="round" stroke-linejoin="round" stroke-dasharray="2 2"/></svg>
<div class="a" style="left:1137px;top:394px;width:215px;height:90px;background:#4b4b4b;"></div>
<div class="a" style="left:1139px;top:400px;width:49px;height:26px;background:#555;border:1px solid #626262"></div>
<div class="a" style="left:1143px;top:405px;width:22px;height:16px;background:#555;border:1.5px solid #8a8a8a;border-radius:3px"></div>
<svg class="a" style="left:1170px;top:406px;" width="14" height="14" viewBox="0 0 14 14"><path d="M3 5l4 4 4-4" stroke="#aaa" fill="none" stroke-width="1.3"/></svg>
<div class="a" style="left:1193px;top:400px;width:50px;height:26px;background:#555;border:1px solid #626262"></div>
<div class="t" style="left:1196px;top:406px;font-size:13px;color:#9a9a9a;letter-spacing:-0.4px">Norm</div>
<svg class="a" style="left:1226px;top:406px;" width="14" height="14" viewBox="0 0 14 14"><path d="M3 5l4 4 4-4" stroke="#aaa" fill="none" stroke-width="1.3"/></svg>
<div class="a chkl" style="left:1251px;top:406px;width:51px;height:12px;background-size:8px 8px;background-position:0 0,4px 4px"></div>
<div class="a" style="left:1302px;top:401px;width:5px;height:24px;background:#666;"></div>
<div class="t" style="left:1311px;top:406px;font-size:14px;color:#dedede;letter-spacing:-0.4px">100</div>
<svg class="a" style="left:1336px;top:402px;" width="14" height="22" viewBox="0 0 14 22"><path d="M3 8l4-4 4 4M3 14l4 4 4-4" stroke="#aaa" fill="none" stroke-width="1.3"/></svg>
<div class="a" style="left:1137px;top:484px;width:215px;height:591px;background:#3e3e3e;"></div>
<div class="a" style="left:1137px;top:484px;width:199px;height:40px;background:#3e3e3e;"></div>
<div class="a" style="left:1137px;top:523px;width:199px;height:1px;background:#2f2f2f;"></div>
<div class="a" style="left:1162px;top:484px;width:1px;height:40px;background:#333;"></div>
<div class="a" style="left:1187px;top:484px;width:1px;height:40px;background:#333;"></div>
<svg class="a" style="left:1139px;top:497px;" width="22" height="14" viewBox="0 0 22 14"><path d="M2 8c5-6 13-6 18 0" stroke="#cfcfcf" fill="none" stroke-width="1.6"/><circle cx="11" cy="8" r="3.5" fill="#cfcfcf"/></svg>
<div class="a" style="left:1169px;top:498px;width:13px;height:13px;background:#3e3e3e;border:1px solid #2e2e2e;border-radius:2px"></div>
<svg class="a" style="left:1193px;top:498px;" width="12" height="12" viewBox="0 0 12 12"><path d="M4 2l4 4-4 4" stroke="#ccc" fill="none" stroke-width="1.4"/></svg>
<svg class="a" style="left:1209px;top:495px;" width="22" height="18" viewBox="0 0 22 18"><path d="M1 3h7l2 2h11v12H1z" fill="#bdbdbd"/></svg>
<div class="a" style="left:1245px;top:488px;width:91px;height:40px;overflow:hidden"><div class="t" style="left:0;top:3px;font-size:14px;color:#d8d8d8;letter-spacing:-0.7px">37 % Normal</div><div class="t" style="left:0;top:19px;font-size:14px;color:#d8d8d8;letter-spacing:-0.7px">Folder 5 Copy 3</div></div>
<div class="a" style="left:1137px;top:524px;width:199px;height:42px;background:#3e3e3e;"></div>
<div class="a" style="left:1137px;top:565px;width:199px;height:1px;background:#2f2f2f;"></div>
<div class="a" style="left:1162px;top:524px;width:1px;height:42px;background:#333;"></div>
<div class="a" style="left:1187px;top:524px;width:1px;height:42px;background:#333;"></div>
<div class="a" style="left:1143px;top:539px;width:13px;height:13px;background:#3e3e3e;border:1px solid #2e2e2e;border-radius:2px"></div>
<div class="a" style="left:1169px;top:539px;width:13px;height:13px;background:#3e3e3e;border:1px solid #2e2e2e;border-radius:2px"></div>
<svg class="a" style="left:1193px;top:539px;" width="12" height="12" viewBox="0 0 12 12"><path d="M4 2l4 4-4 4" stroke="#ccc" fill="none" stroke-width="1.4"/></svg>
<svg class="a" style="left:1209px;top:536px;" width="22" height="18" viewBox="0 0 22 18"><path d="M1 3h7l2 2h11v12H1z" fill="#bdbdbd"/></svg>
<div class="a" style="left:1245px;top:528px;width:91px;height:42px;overflow:hidden"><div class="t" style="left:0;top:4px;font-size:14px;color:#d8d8d8;letter-spacing:-0.7px">100 % Normal</div><div class="t" style="left:0;top:20px;font-size:14px;color:#d8d8d8;letter-spacing:-0.7px">Folder 5</div></div>
<div class="a" style="left:1137px;top:566px;width:199px;height:41px;background:#3e3e3e;"></div>
<div class="a" style="left:1137px;top:606px;width:199px;height:1px;background:#2f2f2f;"></div>
<div class="a" style="left:1162px;top:566px;width:1px;height:41px;background:#333;"></div>
<div class="a" style="left:1187px;top:566px;width:1px;height:41px;background:#333;"></div>
<svg class="a" style="left:1139px;top:579px;" width="22" height="14" viewBox="0 0 22 14"><path d="M2 8c5-6 13-6 18 0" stroke="#cfcfcf" fill="none" stroke-width="1.6"/><circle cx="11" cy="8" r="3.5" fill="#cfcfcf"/></svg>
<div class="a" style="left:1169px;top:580px;width:13px;height:13px;background:#3e3e3e;border:1px solid #2e2e2e;border-radius:2px"></div>
<div class="a" style="left:1190px;top:575px;width:6px;height:25px;background:#e07282;"></div>
<svg class="a" style="left:1197px;top:580px;" width="12" height="12" viewBox="0 0 12 12"><path d="M2 4l4 4 4-4" stroke="#ccc" fill="none" stroke-width="1.4"/></svg>
<svg class="a" style="left:1214px;top:577px;" width="22" height="18" viewBox="0 0 22 18"><path d="M1 3h7l2 2h9v3H5l-4 9z" fill="#bdbdbd"/><path d="M5 8h16l-4 9H1z" fill="#a5a5a5"/></svg>
<div class="a" style="left:1251px;top:570px;width:85px;height:41px;overflow:hidden"><div class="t" style="left:0;top:3px;font-size:14px;color:#d8d8d8;letter-spacing:-0.7px">100 % Multiply</div><div class="t" style="left:0;top:19px;font-size:14px;color:#d8d8d8;letter-spacing:-0.7px">Folder 8</div></div>
<div class="a" style="left:1137px;top:607px;width:199px;height:46px;background:#3e3e3e;"></div>
<div class="a" style="left:1188px;top:607px;width:148px;height:46px;background:#5f6b86;"></div>
<div class="a" style="left:1137px;top:652px;width:199px;height:1px;background:#2f2f2f;"></div>
<div class="a" style="left:1162px;top:607px;width:1px;height:46px;background:#333;"></div>
<div class="a" style="left:1187px;top:607px;width:1px;height:46px;background:#333;"></div>
<svg class="a" style="left:1139px;top:623px;" width="22" height="14" viewBox="0 0 22 14"><path d="M2 8c5-6 13-6 18 0" stroke="#cfcfcf" fill="none" stroke-width="1.6"/><circle cx="11" cy="8" r="3.5" fill="#cfcfcf"/></svg>
<svg class="a" style="left:1164px;top:619px;" width="22" height="22" viewBox="0 0 22 22"><path d="M4 18L17 5" stroke="#cfcfcf" stroke-width="2.5"/><path d="M3 19h15" stroke="#cfcfcf" stroke-width="1.5"/></svg>
<div class="a" style="left:1214px;top:609px;width:37px;height:42px;background:#d8d8d8;border:2px solid #3a3a3a;outline:1px solid #aaa"></div>
<svg class="a" style="left:1218px;top:613px;" width="30" height="34" viewBox="0 0 30 34"><path d="M3 4l11 14M25 3L14 18v12" stroke="#fff" stroke-width="3" fill="none"/></svg>
<div class="a" style="left:1259px;top:611px;width:77px;height:46px;overflow:hidden"><div class="t" style="left:0;top:3px;font-size:14px;color:#d8d8d8;letter-spacing:-0.7px">100 % Norm</div><div class="t" style="left:0;top:22px;font-size:14px;color:#d8d8d8;letter-spacing:-0.7px">Layer 26</div></div>
<div class="a" style="left:1137px;top:653px;width:199px;height:45px;background:#3e3e3e;"></div>
<div class="a" style="left:1137px;top:697px;width:199px;height:1px;background:#2f2f2f;"></div>
<div class="a" style="left:1162px;top:653px;width:1px;height:45px;background:#333;"></div>
<div class="a" style="left:1187px;top:653px;width:1px;height:45px;background:#333;"></div>
<div class="a" style="left:1143px;top:669px;width:13px;height:13px;background:#3e3e3e;border:1px solid #2e2e2e;border-radius:2px"></div>
<div class="a" style="left:1169px;top:669px;width:13px;height:13px;background:#3e3e3e;border:1px solid #2e2e2e;border-radius:2px"></div>
<div class="a chkl" style="left:1215px;top:657px;width:32px;height:36px"></div>
<div class="a" style="left:1259px;top:657px;width:77px;height:45px;overflow:hidden"><div class="t" style="left:0;top:2px;font-size:14px;color:#d8d8d8;letter-spacing:-0.7px">100 % Norm</div><div class="t" style="left:0;top:21px;font-size:14px;color:#d8d8d8;letter-spacing:-0.7px">Layer 25</div></div>
<div class="a" style="left:1137px;top:698px;width:199px;height:46px;background:#3e3e3e;"></div>
<div class="a" style="left:1137px;top:743px;width:199px;height:1px;background:#2f2f2f;"></div>
<div class="a" style="left:1162px;top:698px;width:1px;height:46px;background:#333;"></div>
<div class="a" style="left:1187px;top:698px;width:1px;height:46px;background:#333;"></div>
<div class="a" style="left:1143px;top:715px;width:13px;height:13px;background:#3e3e3e;border:1px solid #2e2e2e;border-radius:2px"></div>
<div class="a" style="left:1169px;top:715px;width:13px;height:13px;background:#3e3e3e;border:1px solid #2e2e2e;border-radius:2px"></div>
<div class="a chkl" style="left:1215px;top:702px;width:32px;height:36px"></div>
<svg class="a" style="left:1215px;top:702px;" width="32" height="36" viewBox="0 0 32 36"><path d="M0 10c8-4 14 6 20 0s8 10 12 4v22H0z" fill="#9a9a9a" opacity="0.8"/><path d="M4 30c6-10 12-4 20-14" stroke="#777" stroke-width="3" fill="none"/></svg>
<div class="a" style="left:1259px;top:702px;width:77px;height:46px;overflow:hidden"><div class="t" style="left:0;top:3px;font-size:14px;color:#d8d8d8;letter-spacing:-0.7px">45 % Normal</div><div class="t" style="left:0;top:22px;font-size:14px;color:#d8d8d8;letter-spacing:-0.7px">Layer 24</div></div>
<div class="a" style="left:1137px;top:744px;width:199px;height:47px;background:#3e3e3e;"></div>
<div class="a" style="left:1137px;top:790px;width:199px;height:1px;background:#2f2f2f;"></div>
<div class="a" style="left:1162px;top:744px;width:1px;height:47px;background:#333;"></div>
<div class="a" style="left:1187px;top:744px;width:1px;height:47px;background:#333;"></div>
<svg class="a" style="left:1139px;top:760px;" width="22" height="14" viewBox="0 0 22 14"><path d="M2 8c5-6 13-6 18 0" stroke="#cfcfcf" fill="none" stroke-width="1.6"/><circle cx="11" cy="8" r="3.5" fill="#cfcfcf"/></svg>
<div class="a" style="left:1169px;top:761px;width:13px;height:13px;background:#3e3e3e;border:1px solid #2e2e2e;border-radius:2px"></div>
<div class="a" style="left:1190px;top:753px;width:6px;height:31px;background:#e07282;"></div>
<div class="a" style="left:1200px;top:750px;width:32px;height:35px;background:#505050;border:1px solid #444"></div>
<div class="a" style="left:1244px;top:748px;width:92px;height:47px;overflow:hidden"><div class="t" style="left:0;top:3px;font-size:14px;color:#d8d8d8;letter-spacing:-0.7px">100 % Hue</div><div class="t" style="left:0;top:22px;font-size:14px;color:#d8d8d8;letter-spacing:-0.7px">Layer 23</div></div>
<div class="a" style="left:1137px;top:791px;width:199px;height:40px;background:#3e3e3e;"></div>
<div class="a" style="left:1137px;top:830px;width:199px;height:1px;background:#2f2f2f;"></div>
<div class="a" style="left:1162px;top:791px;width:1px;height:40px;background:#333;"></div>
<div class="a" style="left:1187px;top:791px;width:1px;height:40px;background:#333;"></div>
<div class="a" style="left:1143px;top:805px;width:13px;height:13px;background:#3e3e3e;border:1px solid #2e2e2e;border-radius:2px"></div>
<div class="a" style="left:1169px;top:805px;width:13px;height:13px;background:#3e3e3e;border:1px solid #2e2e2e;border-radius:2px"></div>
<div class="a" style="left:1190px;top:793px;width:6px;height:36px;background:#e07282;"></div>
<svg class="a" style="left:1199px;top:805px;" width="12" height="12" viewBox="0 0 12 12"><path d="M4 2l4 4-4 4" stroke="#ccc" fill="none" stroke-width="1.4"/></svg>
<svg class="a" style="left:1215px;top:802px;" width="22" height="18" viewBox="0 0 22 18"><path d="M1 3h7l2 2h11v12H1z" fill="#bdbdbd"/></svg>
<div class="a" style="left:1251px;top:795px;width:85px;height:40px;overflow:hidden"><div class="t" style="left:0;top:3px;font-size:14px;color:#d8d8d8;letter-spacing:-0.7px">66 % Normal</div><div class="t" style="left:0;top:19px;font-size:14px;color:#d8d8d8;letter-spacing:-0.7px">Folder 7</div></div>
<div class="a" style="left:1137px;top:831px;width:199px;height:47px;background:#3e3e3e;"></div>
<div class="a" style="left:1137px;top:877px;width:199px;height:1px;background:#2f2f2f;"></div>
<div class="a" style="left:1162px;top:831px;width:1px;height:47px;background:#333;"></div>
<div class="a" style="left:1187px;top:831px;width:1px;height:47px;background:#333;"></div>
<svg class="a" style="left:1139px;top:847px;" width="22" height="14" viewBox="0 0 22 14"><path d="M2 8c5-6 13-6 18 0" stroke="#cfcfcf" fill="none" stroke-width="1.6"/><circle cx="11" cy="8" r="3.5" fill="#cfcfcf"/></svg>
<div class="a" style="left:1169px;top:848px;width:13px;height:13px;background:#3e3e3e;border:1px solid #2e2e2e;border-radius:2px"></div>
<div class="a" style="left:1197px;top:836px;width:32px;height:36px;background:#e6e6e6;"></div>
<div class="a" style="left:1238px;top:835px;width:98px;height:47px;overflow:hidden"><div class="t" style="left:0;top:3px;font-size:14px;color:#d8d8d8;letter-spacing:-0.7px">100 % Normal</div><div class="t" style="left:0;top:22px;font-size:14px;color:#d8d8d8;letter-spacing:-0.7px">Layer 16</div></div>
<div class="a" style="left:1137px;top:878px;width:199px;height:45px;background:#3e3e3e;"></div>
<div class="a" style="left:1137px;top:922px;width:199px;height:1px;background:#2f2f2f;"></div>
<div class="a" style="left:1162px;top:878px;width:1px;height:45px;background:#333;"></div>
<div class="a" style="left:1187px;top:878px;width:1px;height:45px;background:#333;"></div>
<div class="a" style="left:1143px;top:894px;width:13px;height:13px;background:#3e3e3e;border:1px solid #2e2e2e;border-radius:2px"></div>
<div class="a" style="left:1169px;top:894px;width:13px;height:13px;background:#3e3e3e;border:1px solid #2e2e2e;border-radius:2px"></div>
<div class="a chkl" style="left:1197px;top:882px;width:32px;height:36px"></div>
<svg class="a" style="left:1197px;top:882px;" width="32" height="36" viewBox="0 0 32 36"><path d="M0 10c8-4 14 6 20 0s8 10 12 4v22H0z" fill="#9a9a9a" opacity="0.8"/><path d="M4 30c6-10 12-4 20-14" stroke="#777" stroke-width="3" fill="none"/></svg>
<div class="a" style="left:1238px;top:882px;width:98px;height:45px;overflow:hidden"><div class="t" style="left:0;top:2px;font-size:14px;color:#d8d8d8;letter-spacing:-0.7px">20 % Normal</div><div class="t" style="left:0;top:21px;font-size:14px;color:#d8d8d8;letter-spacing:-0.7px">Layer 24 Copy</div></div>
<div class="a" style="left:1137px;top:923px;width:199px;height:46px;background:#3e3e3e;"></div>
<div class="a" style="left:1137px;top:968px;width:199px;height:1px;background:#2f2f2f;"></div>
<div class="a" style="left:1162px;top:923px;width:1px;height:46px;background:#333;"></div>
<div class="a" style="left:1187px;top:923px;width:1px;height:46px;background:#333;"></div>
<div class="a" style="left:1143px;top:940px;width:13px;height:13px;background:#3e3e3e;border:1px solid #2e2e2e;border-radius:2px"></div>
<div class="a" style="left:1169px;top:940px;width:13px;height:13px;background:#3e3e3e;border:1px solid #2e2e2e;border-radius:2px"></div>
<div class="a chkl" style="left:1197px;top:927px;width:32px;height:36px"></div>
<div class="a" style="left:1238px;top:927px;width:98px;height:46px;overflow:hidden"><div class="t" style="left:0;top:3px;font-size:14px;color:#d8d8d8;letter-spacing:-0.7px">37 % Normal</div><div class="t" style="left:0;top:22px;font-size:14px;color:#d8d8d8;letter-spacing:-0.7px">Folder 4 Copy</div></div>
<div class="a" style="left:1137px;top:969px;width:199px;height:41px;background:#3e3e3e;"></div>
<div class="a" style="left:1137px;top:1009px;width:199px;height:1px;background:#2f2f2f;"></div>
<div class="a" style="left:1162px;top:969px;width:1px;height:41px;background:#333;"></div>
<div class="a" style="left:1187px;top:969px;width:1px;height:41px;background:#333;"></div>
<div class="a" style="left:1143px;top:983px;width:13px;height:13px;background:#3e3e3e;border:1px solid #2e2e2e;border-radius:2px"></div>
<div class="a" style="left:1169px;top:983px;width:13px;height:13px;background:#3e3e3e;border:1px solid #2e2e2e;border-radius:2px"></div>
<svg class="a" style="left:1193px;top:983px;" width="12" height="12" viewBox="0 0 12 12"><path d="M4 2l4 4-4 4" stroke="#ccc" fill="none" stroke-width="1.4"/></svg>
<svg class="a" style="left:1209px;top:980px;" width="22" height="18" viewBox="0 0 22 18"><path d="M1 3h7l2 2h11v12H1z" fill="#bdbdbd"/></svg>
<div class="a" style="left:1245px;top:973px;width:91px;height:41px;overflow:hidden"><div class="t" style="left:0;top:3px;font-size:14px;color:#d8d8d8;letter-spacing:-0.7px">100 % Normal</div><div class="t" style="left:0;top:19px;font-size:14px;color:#d8d8d8;letter-spacing:-0.7px">Folder 4</div></div>
<div class="a" style="left:1137px;top:1010px;width:199px;height:47px;background:#3e3e3e;"></div>
<div class="a" style="left:1137px;top:1056px;width:199px;height:1px;background:#2f2f2f;"></div>
<div class="a" style="left:1162px;top:1010px;width:1px;height:47px;background:#333;"></div>
<div class="a" style="left:1187px;top:1010px;width:1px;height:47px;background:#333;"></div>
<div class="a" style="left:1143px;top:1027px;width:13px;height:13px;background:#3e3e3e;border:1px solid #2e2e2e;border-radius:2px"></div>
<div class="a" style="left:1169px;top:1027px;width:13px;height:13px;background:#3e3e3e;border:1px solid #2e2e2e;border-radius:2px"></div>
<div class="a chkl" style="left:1197px;top:1014px;width:32px;height:36px"></div>
<div class="a" style="left:1238px;top:1014px;width:98px;height:47px;overflow:hidden"><div class="t" style="left:0;top:3px;font-size:14px;color:#d8d8d8;letter-spacing:-0.7px">76 % Normal</div><div class="t" style="left:0;top:22px;font-size:14px;color:#d8d8d8;letter-spacing:-0.7px">Layer 9</div></div>
<div class="a" style="left:1137px;top:1057px;width:199px;height:18px;background:#3e3e3e;"></div>
<div class="a" style="left:1137px;top:1074px;width:199px;height:1px;background:#2f2f2f;"></div>
<div class="a" style="left:1162px;top:1057px;width:1px;height:18px;background:#333;"></div>
<div class="a" style="left:1187px;top:1057px;width:1px;height:18px;background:#333;"></div>
<div class="a" style="left:1143px;top:1060px;width:13px;height:13px;background:#3e3e3e;border:1px solid #2e2e2e;border-radius:2px"></div>
<div class="a" style="left:1169px;top:1060px;width:13px;height:13px;background:#3e3e3e;border:1px solid #2e2e2e;border-radius:2px"></div>
<div class="a" style="left:1245px;top:1061px;width:91px;height:18px;overflow:hidden"><div class="t" style="left:0;top:-8px;font-size:14px;color:#d8d8d8;letter-spacing:-0.7px">31 % Normal</div><div class="t" style="left:0;top:8px;font-size:14px;color:#d8d8d8;letter-spacing:-0.7px"></div></div>
<div class="a" style="left:1336px;top:484px;width:16px;height:591px;background:#474747;"></div>
<div class="a" style="left:1337px;top:486px;width:13px;height:16px;background:#555;"></div>
<svg class="a" style="left:1337px;top:486px;" width="13" height="16" viewBox="0 0 13 16"><path d="M3 9l3.5-3 3.5 3" stroke="#999" fill="none" stroke-width="1"/></svg>
<div class="a" style="left:1338px;top:610px;width:11px;height:248px;background:#5a5a5a;border-radius:5px"></div>
<div class="a" style="left:1337px;top:1057px;width:13px;height:16px;background:#555;"></div>
<svg class="a" style="left:1337px;top:1057px;" width="13" height="16" viewBox="0 0 13 16"><path d="M3 6l3.5 3 3.5-3" stroke="#999" fill="none" stroke-width="1"/></svg>
<div class="a" style="left:1137px;top:1075px;width:242px;height:5px;background:#3b3b3b;"></div>
<svg class="a" style="left:1140px;top:428px;" width="205" height="22" viewBox="0 0 205 22"><rect x="4" y="4" width="11" height="13" fill="#aaa"/><rect x="8" y="2" width="11" height="13" stroke="#c0c0c0" fill="none" stroke-width="1.4" stroke-dasharray="2 1"/><path d="M38 2v18M30 6l8 4 8-4M32 12h12" stroke="#c0c0c0" fill="none" stroke-width="1.4"/><path d="M60 3h6v8l-3 4-3-4zM63 15c2 4 6 4 10 3" stroke="#c0c0c0" fill="none" stroke-width="1.4"/><rect x="84" y="9" width="13" height="11" fill="#c4c4c4"/><path d="M87 9V6a3.5 3.5 0 017 0v3" stroke="#c0c0c0" fill="none" stroke-width="1.4"/><rect x="110" y="10" width="10" height="10" fill="#c4c4c4"/><path d="M122 2h6v6h-6zM128 8h6v6h-6zM122 14h6v6h-6z" fill="#aaa"/><path d="M142 4h12v12h-12zM150 12l8 8M158 12l-8 8" stroke="#777" fill="none" stroke-width="1.6"/><path d="M160 8l4 4 5-6" stroke="#777" fill="none" stroke-width="1.3"/><path d="M182 4l12 0-12 12zM186 12l8 8M194 12l-8 8" stroke="#777" fill="none" stroke-width="1.6"/><path d="M196 8l4 4 5-6" stroke="#777" fill="none" stroke-width="1.3"/></svg>
<svg class="a" style="left:1146px;top:457px;" width="205" height="24" viewBox="0 0 205 24"><path d="M3 3h14v10M3 3v15h8" stroke="#c0c0c0" fill="none" stroke-width="1.4"/><circle cx="17" cy="19" r="4" stroke="#c0c0c0" fill="none" stroke-width="1.4"/><rect x="30" y="3" width="15" height="15" stroke="#c0c0c0" fill="none" stroke-width="1.4"/><circle cx="37" cy="10" r="4" stroke="#c0c0c0" fill="none" stroke-width="1.4"/><circle cx="44" cy="19" r="4" stroke="#c0c0c0" fill="none" stroke-width="1.4"/><path d="M54 4h7l2 2h8v11H54z" fill="#c4c4c4"/><circle cx="70" cy="19" r="4" stroke="#c0c0c0" fill="none" stroke-width="1.4"/><rect x="80" y="8" width="10" height="10" stroke="#777" fill="none" stroke-width="1.3"/><rect x="86" y="3" width="10" height="10" stroke="#777" fill="none" stroke-width="1.3"/><rect x="106" y="9" width="10" height="10" stroke="#777" fill="none" stroke-width="1.3"/><rect x="112" y="3" width="10" height="10" stroke="#777" fill="none" stroke-width="1.3"/><rect x="131" y="3" width="17" height="17" rx="2" fill="#d8d8d8"/><circle cx="139.5" cy="11.5" r="5" fill="#333"/><rect x="157" y="6" width="10" height="12" stroke="#777" fill="none" stroke-width="1.3"/><rect x="163" y="9" width="10" height="10" stroke="#777" fill="none" stroke-width="1.3"/><rect x="184" y="6" width="12" height="15" fill="#888"/><path d="M182 5h16" stroke="#999" stroke-width="1.5"/></svg>
<div class="a" style="left:1379px;top:0px;width:541px;height:1080px;background:#000000;"></div>
<div class="a" style="left:1379px;top:0px;width:541px;height:15px;background:#121212;"></div>
<div class="a" style="left:1736px;top:-12px;width:88px;height:16px;background:#262626;border-radius:8px"></div>
<div class="a" style="left:1891px;top:-12px;width:20px;height:20px;border-radius:50%;background:#e8e8e8"></div>
<div class="a" style="left:1379px;top:101px;width:541px;height:316px;background:linear-gradient(100deg,#6b5b66 0%,#7a6469 25%,#8f7272 50%,#a97e77 75%,#c08d83 100%)"></div>
<div class="a" style="left:1379px;top:101px;width:541px;height:316px;background:linear-gradient(180deg,rgba(0,0,0,0.06) 0%,rgba(0,0,0,0) 40%,rgba(255,255,255,0.03) 100%)"></div>
<svg class="a" style="left:1413px;top:189px;border-radius:6px" width="143" height="142" viewBox="0 0 143 142"><defs><linearGradient id="uni" x1="0" y1="0" x2="1" y2="0.25"><stop offset="0" stop-color="#1a90f0"/><stop offset="0.28" stop-color="#2a3ae0"/><stop offset="0.45" stop-color="#8a10c0"/><stop offset="0.6" stop-color="#f01818"/><stop offset="0.8" stop-color="#f07010"/><stop offset="1" stop-color="#e8e020"/></linearGradient><filter id="bl"><feGaussianBlur stdDeviation="1.2"/></filter></defs><rect width="143" height="142" fill="#6a6a50"/><rect width="143" height="104" fill="#e6e2e2"/><polygon points="0,0 40,0 52,8 62,14 70,26 76,40 80,56 76,72 70,84 40,88 0,86" fill="#54503c"/><polygon points="143,0 104,0 98,10 88,20 82,36 80,52 84,68 96,86 143,88" fill="#54503c"/><circle cx="66.6" cy="44.7" r="1.6" fill="#4a5438"/><circle cx="26.4" cy="45.0" r="1.6" fill="#4a5438"/><circle cx="113.4" cy="8.3" r="1.3" fill="#d25a52"/><circle cx="115.8" cy="61.0" r="2.2" fill="#d25a52"/><circle cx="138.0" cy="57.5" r="1.6" fill="#4a5438"/><circle cx="22.5" cy="1.3" r="1.6" fill="#4a5438"/><circle cx="8.5" cy="16.7" r="1.2" fill="#d25a52"/><circle cx="74.2" cy="56.3" r="1" fill="#e8a0a0"/><circle cx="94.7" cy="40.2" r="2.2" fill="#d25a52"/><circle cx="142.4" cy="73.9" r="1.6" fill="#4a5438"/><circle cx="45.1" cy="20.2" r="1.3" fill="#d25a52"/><circle cx="90.0" cy="68.5" r="1.3" fill="#d25a52"/><circle cx="16.9" cy="21.7" r="1.3" fill="#d25a52"/><circle cx="114.0" cy="15.6" r="1.6" fill="#4a5438"/><circle cx="104.7" cy="11.5" r="1.6" fill="#4a5438"/><circle cx="16.7" cy="37.0" r="1.5" fill="#d25a52"/><circle cx="138.8" cy="70.7" r="2.1" fill="#d25a52"/><circle cx="141.5" cy="18.8" r="2.0" fill="#d25a52"/><circle cx="47.0" cy="26.1" r="1.3" fill="#d25a52"/><circle cx="86.0" cy="32.7" r="1" fill="#e8a0a0"/><circle cx="137.2" cy="42.6" r="1.6" fill="#4a5438"/><circle cx="123.9" cy="16.1" r="2.1" fill="#d25a52"/><circle cx="116.9" cy="22.0" r="1.9" fill="#d25a52"/><circle cx="126.2" cy="53.1" r="1" fill="#e8a0a0"/><circle cx="34.1" cy="62.0" r="2.0" fill="#d25a52"/><circle cx="25.1" cy="63.4" r="1.4" fill="#d25a52"/><circle cx="29.2" cy="1.5" r="1.6" fill="#d25a52"/><circle cx="8.6" cy="15.5" r="1" fill="#e8a0a0"/><circle cx="93.9" cy="60.8" r="1.6" fill="#4a5438"/><circle cx="20.1" cy="3.1" r="2.1" fill="#d25a52"/><circle cx="100.2" cy="84.7" r="1.8" fill="#d25a52"/><circle cx="69.0" cy="64.3" r="2.2" fill="#d25a52"/><circle cx="10.8" cy="48.1" r="1.6" fill="#4a5438"/><circle cx="128.7" cy="64.9" r="1.6" fill="#4a5438"/><circle cx="113.4" cy="80.5" r="1" fill="#e8a0a0"/><circle cx="81.9" cy="55.0" r="1" fill="#e8a0a0"/><circle cx="83.3" cy="53.6" r="1.8" fill="#d25a52"/><circle cx="142.0" cy="77.4" r="1.6" fill="#4a5438"/><circle cx="55.5" cy="64.7" r="1.6" fill="#4a5438"/><circle cx="63.0" cy="73.8" r="2.0" fill="#d25a52"/><circle cx="4.3" cy="52.9" r="1" fill="#e8a0a0"/><circle cx="32.9" cy="61.5" r="1" fill="#e8a0a0"/><circle cx="36.6" cy="1.0" r="1.9" fill="#d25a52"/><circle cx="46.8" cy="58.6" r="1.6" fill="#d25a52"/><circle cx="55.0" cy="51.3" r="1.3" fill="#d25a52"/><circle cx="101.7" cy="83.6" r="1.4" fill="#d25a52"/><circle cx="64.4" cy="24.2" r="1.6" fill="#d25a52"/><circle cx="89.5" cy="43.5" r="2.0" fill="#d25a52"/><circle cx="140.4" cy="39.8" r="1.2" fill="#d25a52"/><circle cx="124.8" cy="3.7" r="1.6" fill="#4a5438"/><circle cx="113.2" cy="1.7" r="1.7" fill="#d25a52"/><circle cx="3.5" cy="73.0" r="1.3" fill="#d25a52"/><circle cx="6.7" cy="55.4" r="1" fill="#e8a0a0"/><circle cx="137.1" cy="60.2" r="1.7" fill="#d25a52"/><circle cx="25.6" cy="0.9" r="1" fill="#e8a0a0"/><circle cx="102.1" cy="15.8" r="1.5" fill="#d25a52"/><circle cx="99.7" cy="45.8" r="1.6" fill="#4a5438"/><circle cx="103.3" cy="11.4" r="1" fill="#e8a0a0"/><circle cx="113.9" cy="83.1" r="1" fill="#e8a0a0"/><circle cx="93.1" cy="18.0" r="1.6" fill="#4a5438"/><circle cx="117.0" cy="56.5" r="1.6" fill="#4a5438"/><circle cx="49.8" cy="7.3" r="1" fill="#e8a0a0"/><circle cx="20.1" cy="13.1" r="1.6" fill="#4a5438"/><circle cx="103.5" cy="73.9" r="1.6" fill="#4a5438"/><circle cx="12.3" cy="19.5" r="1.6" fill="#4a5438"/><circle cx="41.5" cy="64.1" r="1.6" fill="#4a5438"/><circle cx="74.8" cy="74.2" r="1.6" fill="#4a5438"/><circle cx="138.5" cy="46.1" r="1.6" fill="#4a5438"/><circle cx="28.7" cy="47.2" r="1.6" fill="#4a5438"/><circle cx="138.6" cy="45.4" r="1" fill="#e8a0a0"/><circle cx="114.6" cy="49.5" r="1" fill="#e8a0a0"/><circle cx="136.8" cy="81.3" r="1.7" fill="#d25a52"/><circle cx="128.8" cy="41.9" r="1.4" fill="#d25a52"/><circle cx="18.5" cy="68.6" r="1.4" fill="#d25a52"/><circle cx="32.5" cy="60.5" r="1.6" fill="#d25a52"/><circle cx="104.5" cy="10.8" r="1.6" fill="#4a5438"/><circle cx="35.8" cy="17.4" r="1.6" fill="#4a5438"/><circle cx="62.5" cy="33.1" r="1" fill="#e8a0a0"/><circle cx="29.2" cy="55.6" r="1.6" fill="#4a5438"/><circle cx="129.1" cy="27.8" r="2.1" fill="#d25a52"/><circle cx="126.9" cy="11.8" r="1.9" fill="#d25a52"/><circle cx="60.3" cy="69.5" r="1.6" fill="#d25a52"/><circle cx="138.5" cy="10.2" r="1.6" fill="#4a5438"/><circle cx="108.4" cy="44.2" r="1.6" fill="#4a5438"/><circle cx="27.0" cy="6.2" r="1.2" fill="#d25a52"/><circle cx="141.6" cy="81.6" r="1.3" fill="#d25a52"/><circle cx="46.7" cy="41.1" r="1.6" fill="#4a5438"/><circle cx="61.5" cy="52.9" r="1.9" fill="#d25a52"/><circle cx="120.7" cy="16.0" r="1" fill="#e8a0a0"/><circle cx="105.7" cy="35.7" r="1.4" fill="#d25a52"/><circle cx="127.7" cy="70.6" r="1.6" fill="#4a5438"/><circle cx="123.1" cy="55.4" r="1" fill="#e8a0a0"/><circle cx="58.0" cy="63.6" r="1.5" fill="#d25a52"/><circle cx="50.9" cy="56.2" r="1.6" fill="#4a5438"/><circle cx="33.2" cy="83.1" r="1.6" fill="#4a5438"/><circle cx="48.3" cy="58.1" r="1.6" fill="#4a5438"/><circle cx="143.0" cy="56.5" r="1.6" fill="#4a5438"/><circle cx="108.9" cy="86.2" r="1.8" fill="#d25a52"/><circle cx="105.6" cy="22.6" r="1" fill="#e8a0a0"/><circle cx="7.2" cy="17.2" r="1" fill="#e8a0a0"/><circle cx="91.2" cy="71.2" r="1.8" fill="#d25a52"/><circle cx="22.9" cy="41.5" r="1.7" fill="#d25a52"/><circle cx="135.2" cy="37.0" r="1.6" fill="#4a5438"/><circle cx="85.5" cy="32.2" r="1.9" fill="#d25a52"/><circle cx="102.5" cy="26.1" r="1.4" fill="#d25a52"/><circle cx="55.8" cy="79.0" r="1.6" fill="#4a5438"/><circle cx="116.8" cy="53.1" r="1.8" fill="#d25a52"/><circle cx="7.4" cy="46.5" r="1.6" fill="#d25a52"/><circle cx="95.5" cy="40.1" r="1.8" fill="#d25a52"/><circle cx="60.0" cy="68.5" r="1.6" fill="#4a5438"/><circle cx="142.7" cy="83.8" r="1.6" fill="#4a5438"/><circle cx="112.2" cy="55.0" r="1" fill="#e8a0a0"/><circle cx="38.8" cy="60.3" r="1.6" fill="#4a5438"/><circle cx="130.9" cy="77.3" r="1.3" fill="#d25a52"/><circle cx="38.7" cy="37.4" r="1.6" fill="#4a5438"/><circle cx="14.7" cy="47.7" r="1.3" fill="#d25a52"/><circle cx="96.7" cy="48.5" r="1.6" fill="#4a5438"/><circle cx="53.4" cy="42.1" r="1.5" fill="#d25a52"/><circle cx="106.5" cy="73.8" r="1.3" fill="#d25a52"/><circle cx="30.5" cy="37.3" r="2.0" fill="#d25a52"/><circle cx="46.5" cy="48.3" r="1.6" fill="#4a5438"/><circle cx="131.7" cy="37.6" r="1" fill="#e8a0a0"/><circle cx="13.9" cy="77.0" r="1.3" fill="#d25a52"/><circle cx="10.9" cy="18.8" r="1.6" fill="#4a5438"/><circle cx="11.7" cy="26.7" r="1.6" fill="#4a5438"/><circle cx="99.2" cy="24.9" r="1.6" fill="#d25a52"/><circle cx="103.8" cy="32.2" r="1.9" fill="#d25a52"/><circle cx="134.4" cy="80.4" r="1" fill="#e8a0a0"/><circle cx="114.8" cy="26.8" r="1.6" fill="#d25a52"/><circle cx="133.7" cy="78.7" r="1.6" fill="#d25a52"/><circle cx="52.3" cy="32.0" r="1" fill="#e8a0a0"/><circle cx="55.4" cy="17.2" r="1.6" fill="#4a5438"/><circle cx="108.5" cy="77.5" r="1.2" fill="#d25a52"/><circle cx="73.7" cy="47.9" r="1.6" fill="#4a5438"/><circle cx="12.0" cy="7.2" r="1.6" fill="#4a5438"/><circle cx="128.6" cy="7.5" r="1.6" fill="#4a5438"/><circle cx="20.6" cy="65.6" r="1.6" fill="#4a5438"/><circle cx="74.6" cy="67.3" r="1" fill="#e8a0a0"/><circle cx="48.3" cy="85.2" r="1.6" fill="#4a5438"/><circle cx="70.6" cy="47.3" r="1.6" fill="#4a5438"/><circle cx="101.3" cy="80.5" r="1" fill="#e8a0a0"/><circle cx="137.0" cy="56.3" r="1.6" fill="#4a5438"/><circle cx="101.5" cy="70.6" r="1" fill="#e8a0a0"/><circle cx="53.7" cy="14.8" r="1.6" fill="#d25a52"/><circle cx="41.8" cy="85.3" r="1.5" fill="#d25a52"/><circle cx="25.7" cy="5.5" r="1" fill="#e8a0a0"/><circle cx="5.2" cy="9.6" r="1.4" fill="#d25a52"/><circle cx="33.7" cy="63.1" r="1.6" fill="#4a5438"/><circle cx="32.0" cy="16.3" r="1.4" fill="#d25a52"/><circle cx="108.3" cy="27.4" r="1.6" fill="#4a5438"/><circle cx="116.8" cy="42.2" r="2.1" fill="#d25a52"/><circle cx="130.7" cy="30.1" r="1.6" fill="#4a5438"/><circle cx="136.9" cy="42.5" r="1.2" fill="#d25a52"/><circle cx="135.5" cy="70.5" r="1" fill="#e8a0a0"/><circle cx="75.4" cy="45.4" r="2.2" fill="#d25a52"/><circle cx="94.0" cy="20.9" r="1.7" fill="#d25a52"/><circle cx="53.1" cy="70.1" r="1.6" fill="#4a5438"/><circle cx="22.4" cy="28.3" r="2.1" fill="#d25a52"/><circle cx="38.1" cy="47.0" r="2.0" fill="#d25a52"/><circle cx="117.6" cy="7.3" r="1.9" fill="#d25a52"/><circle cx="13.9" cy="42.2" r="1" fill="#e8a0a0"/><circle cx="43.4" cy="69.5" r="1" fill="#e8a0a0"/><circle cx="29.8" cy="47.8" r="1.6" fill="#4a5438"/><circle cx="22.5" cy="73.2" r="1.5" fill="#d25a52"/><circle cx="10.9" cy="26.9" r="1" fill="#e8a0a0"/><circle cx="102.3" cy="31.7" r="1.6" fill="#4a5438"/><circle cx="15.1" cy="34.7" r="1" fill="#e8a0a0"/><circle cx="138.3" cy="73.0" r="1.6" fill="#4a5438"/><circle cx="1.8" cy="33.2" r="1.6" fill="#4a5438"/><circle cx="34.0" cy="49.6" r="1" fill="#e8a0a0"/><circle cx="114.3" cy="18.2" r="1.6" fill="#4a5438"/><circle cx="41.5" cy="33.1" r="1.6" fill="#4a5438"/><circle cx="42.6" cy="29.7" r="1" fill="#e8a0a0"/><circle cx="95.3" cy="22.6" r="1.9" fill="#d25a52"/><circle cx="47.1" cy="83.2" r="1.6" fill="#4a5438"/><circle cx="13.2" cy="12.4" r="1.9" fill="#d25a52"/><circle cx="101.3" cy="15.8" r="1" fill="#e8a0a0"/><circle cx="119.7" cy="52.2" r="1.4" fill="#d25a52"/><circle cx="22.5" cy="10.9" r="1" fill="#e8a0a0"/><circle cx="10.4" cy="81.0" r="1" fill="#e8a0a0"/><circle cx="117.4" cy="34.0" r="1.6" fill="#d25a52"/><circle cx="2.2" cy="35.3" r="1.6" fill="#4a5438"/><circle cx="140.4" cy="69.5" r="1.6" fill="#4a5438"/><circle cx="47.3" cy="30.1" r="1.6" fill="#4a5438"/><circle cx="15.2" cy="33.2" r="1.6" fill="#4a5438"/><circle cx="112.8" cy="72.6" r="1.6" fill="#4a5438"/><circle cx="28.2" cy="83.2" r="1.6" fill="#4a5438"/><circle cx="28.3" cy="7.3" r="1.8" fill="#d25a52"/><circle cx="51.7" cy="40.7" r="2.2" fill="#d25a52"/><circle cx="19.4" cy="79.6" r="1.6" fill="#4a5438"/><circle cx="116.9" cy="52.9" r="2.0" fill="#d25a52"/><circle cx="41.3" cy="78.9" r="1.8" fill="#d25a52"/><circle cx="118.8" cy="16.3" r="1.6" fill="#4a5438"/><circle cx="10.9" cy="2.8" r="2.2" fill="#d25a52"/><circle cx="134.3" cy="57.9" r="1.9" fill="#d25a52"/><circle cx="105.5" cy="33.6" r="1.6" fill="#4a5438"/><circle cx="114.9" cy="1.4" r="1.7" fill="#d25a52"/><circle cx="20.4" cy="34.0" r="1.6" fill="#4a5438"/><circle cx="24.8" cy="45.7" r="1.8" fill="#d25a52"/><circle cx="47.5" cy="56.5" r="1.9" fill="#d25a52"/><circle cx="20.7" cy="84.4" r="1.6" fill="#4a5438"/><circle cx="67.2" cy="36.2" r="1.6" fill="#4a5438"/><circle cx="119.9" cy="75.2" r="1" fill="#e8a0a0"/><circle cx="75.2" cy="46.2" r="1" fill="#e8a0a0"/><circle cx="129.3" cy="28.2" r="1.9" fill="#d25a52"/><circle cx="128.7" cy="64.4" r="1.6" fill="#4a5438"/><circle cx="107.5" cy="26.8" r="1.6" fill="#4a5438"/><circle cx="10.0" cy="11.0" r="1" fill="#e8a0a0"/><circle cx="71.9" cy="34.9" r="1.9" fill="#d25a52"/><circle cx="43.8" cy="34.8" r="1.3" fill="#d25a52"/><circle cx="130.3" cy="85.0" r="1.6" fill="#4a5438"/><circle cx="31.7" cy="65.7" r="1.6" fill="#4a5438"/><circle cx="0.1" cy="21.5" r="1.5" fill="#d25a52"/><circle cx="56.8" cy="31.4" r="1.6" fill="#4a5438"/><circle cx="139.8" cy="41.6" r="1.5" fill="#d25a52"/><circle cx="131.9" cy="78.9" r="2.0" fill="#d25a52"/><circle cx="50.6" cy="41.6" r="2.1" fill="#d25a52"/><circle cx="142.3" cy="17.8" r="1.6" fill="#4a5438"/><circle cx="27.4" cy="77.5" r="1.3" fill="#d25a52"/><circle cx="124.4" cy="62.8" r="1.9" fill="#d25a52"/><circle cx="134.1" cy="39.2" r="1.4" fill="#d25a52"/><circle cx="43.9" cy="62.5" r="1.4" fill="#d25a52"/><circle cx="43.0" cy="81.6" r="1.6" fill="#4a5438"/><circle cx="39.6" cy="56.3" r="2.2" fill="#d25a52"/><circle cx="63.0" cy="46.5" r="1.6" fill="#4a5438"/><circle cx="6.5" cy="52.8" r="1.5" fill="#d25a52"/><circle cx="114.9" cy="7.7" r="2.0" fill="#d25a52"/><circle cx="35.2" cy="24.6" r="1.6" fill="#4a5438"/><circle cx="55.0" cy="81.8" r="1" fill="#e8a0a0"/><circle cx="25.7" cy="48.9" r="1.6" fill="#4a5438"/><circle cx="24.9" cy="68.6" r="1.8" fill="#d25a52"/><circle cx="112.5" cy="69.6" r="1.7" fill="#d25a52"/><circle cx="31.6" cy="51.0" r="1" fill="#e8a0a0"/><circle cx="5.1" cy="52.5" r="1.6" fill="#4a5438"/><circle cx="25.7" cy="13.4" r="1.7" fill="#d25a52"/><circle cx="62.2" cy="38.9" r="2.0" fill="#d25a52"/><circle cx="10.4" cy="79.8" r="1.6" fill="#4a5438"/><circle cx="34.0" cy="12.9" r="1.2" fill="#d25a52"/><circle cx="45.0" cy="54.7" r="1.6" fill="#4a5438"/><circle cx="37.9" cy="51.8" r="2.0" fill="#d25a52"/><circle cx="24.5" cy="22.4" r="1.9" fill="#d25a52"/><circle cx="118.8" cy="69.2" r="1.6" fill="#d25a52"/><circle cx="141.0" cy="12.7" r="1" fill="#e8a0a0"/><circle cx="106.5" cy="3.5" r="2.1" fill="#d25a52"/><circle cx="20.2" cy="34.6" r="1.6" fill="#d25a52"/><circle cx="109.1" cy="64.6" r="1.5" fill="#d25a52"/><circle cx="66.0" cy="82.1" r="1" fill="#e8a0a0"/><circle cx="48.2" cy="86.3" r="1.6" fill="#4a5438"/><circle cx="5.7" cy="35.5" r="1.6" fill="#4a5438"/><circle cx="8.4" cy="30.2" r="1.6" fill="#4a5438"/><circle cx="54.5" cy="68.8" r="1.5" fill="#d25a52"/><circle cx="26.3" cy="48.4" r="1.4" fill="#d25a52"/><circle cx="30.7" cy="41.2" r="1.6" fill="#d25a52"/><circle cx="29.3" cy="33.7" r="1.9" fill="#d25a52"/><circle cx="51.9" cy="24.2" r="1.4" fill="#d25a52"/><circle cx="102.3" cy="23.6" r="1" fill="#e8a0a0"/><circle cx="22.0" cy="82.4" r="1" fill="#e8a0a0"/><circle cx="2.9" cy="28.3" r="1" fill="#e8a0a0"/><circle cx="11.9" cy="77.7" r="2.0" fill="#d25a52"/><circle cx="56.3" cy="21.0" r="1.4" fill="#d25a52"/><circle cx="44.7" cy="37.3" r="1.6" fill="#4a5438"/><circle cx="19.4" cy="62.2" r="1.9" fill="#d25a52"/><circle cx="95.3" cy="13.0" r="1.5" fill="#d25a52"/><circle cx="101.9" cy="35.7" r="1" fill="#e8a0a0"/><circle cx="123.8" cy="19.9" r="1.5" fill="#d25a52"/><circle cx="30.9" cy="3.6" r="1.8" fill="#d25a52"/><circle cx="139.5" cy="26.2" r="1.6" fill="#4a5438"/><circle cx="131.4" cy="19.0" r="1.6" fill="#4a5438"/><circle cx="33.5" cy="55.7" r="1.6" fill="#d25a52"/><circle cx="54.8" cy="28.9" r="1" fill="#e8a0a0"/><circle cx="40.0" cy="14.0" r="1" fill="#e8a0a0"/><circle cx="95.1" cy="21.1" r="1.5" fill="#d25a52"/><circle cx="60.4" cy="13.3" r="1.6" fill="#4a5438"/><circle cx="100.3" cy="48.7" r="1.6" fill="#4a5438"/><circle cx="3.3" cy="34.4" r="1" fill="#e8a0a0"/><circle cx="9.0" cy="35.6" r="1.7" fill="#d25a52"/><circle cx="83.8" cy="41.3" r="1.5" fill="#d25a52"/><circle cx="95.5" cy="16.4" r="1" fill="#e8a0a0"/><circle cx="110.3" cy="55.2" r="1.6" fill="#4a5438"/><circle cx="58.8" cy="36.6" r="2.0" fill="#d25a52"/><circle cx="5.5" cy="12.0" r="1.6" fill="#4a5438"/><circle cx="21.4" cy="16.9" r="1.9" fill="#d25a52"/><circle cx="33.5" cy="0.1" r="1.6" fill="#4a5438"/><circle cx="56.3" cy="21.1" r="1" fill="#e8a0a0"/><circle cx="93.0" cy="48.2" r="1.6" fill="#4a5438"/><circle cx="138.5" cy="29.3" r="2.1" fill="#d25a52"/><circle cx="44.8" cy="63.0" r="1.6" fill="#4a5438"/><circle cx="22.8" cy="54.7" r="1" fill="#e8a0a0"/><circle cx="40.9" cy="65.9" r="1.6" fill="#4a5438"/><circle cx="33.9" cy="21.9" r="1.4" fill="#d25a52"/><circle cx="9.0" cy="6.0" r="1.9" fill="#d25a52"/><circle cx="123.9" cy="76.5" r="1.5" fill="#d25a52"/><circle cx="72.6" cy="70.1" r="1" fill="#e8a0a0"/><circle cx="102.4" cy="22.2" r="1.6" fill="#4a5438"/><circle cx="120.5" cy="72.9" r="1.6" fill="#4a5438"/><circle cx="60.1" cy="62.2" r="1.6" fill="#4a5438"/><circle cx="118.8" cy="70.5" r="1.6" fill="#d25a52"/><circle cx="95.7" cy="20.3" r="1.2" fill="#d25a52"/><circle cx="138.8" cy="11.8" r="1.6" fill="#4a5438"/><circle cx="60.0" cy="55.6" r="1" fill="#e8a0a0"/><circle cx="133.5" cy="87.0" r="1.9" fill="#d25a52"/><circle cx="16.9" cy="3.7" r="1.9" fill="#d25a52"/><circle cx="142.1" cy="10.6" r="1.2" fill="#d25a52"/><circle cx="119.9" cy="25.0" r="1" fill="#e8a0a0"/><circle cx="55.7" cy="61.1" r="1.6" fill="#4a5438"/><circle cx="114.4" cy="12.9" r="1.3" fill="#d25a52"/><circle cx="133.5" cy="22.1" r="1" fill="#e8a0a0"/><circle cx="17.2" cy="28.5" r="1.8" fill="#d25a52"/><circle cx="20.5" cy="55.0" r="1.4" fill="#d25a52"/><circle cx="69.0" cy="32.2" r="1.3" fill="#d25a52"/><circle cx="9.2" cy="78.6" r="1.3" fill="#d25a52"/><circle cx="28.9" cy="76.3" r="1" fill="#e8a0a0"/><circle cx="59.3" cy="71.0" r="1" fill="#e8a0a0"/><circle cx="8.2" cy="48.4" r="1.6" fill="#4a5438"/><circle cx="63.4" cy="73.4" r="1.6" fill="#4a5438"/><circle cx="25.1" cy="2.4" r="1.3" fill="#d25a52"/><circle cx="44.3" cy="45.3" r="1.4" fill="#d25a52"/><circle cx="137.2" cy="1.0" r="1.6" fill="#4a5438"/><circle cx="115.8" cy="69.7" r="1.6" fill="#4a5438"/><circle cx="14.4" cy="83.6" r="1" fill="#e8a0a0"/><circle cx="3.4" cy="50.8" r="1.6" fill="#d25a52"/><circle cx="52.1" cy="56.1" r="1" fill="#e8a0a0"/><circle cx="39.9" cy="79.7" r="1.3" fill="#d25a52"/><circle cx="47.9" cy="65.3" r="1.9" fill="#d25a52"/><circle cx="78.1" cy="59.9" r="1.3" fill="#d25a52"/><circle cx="20.4" cy="30.8" r="1" fill="#e8a0a0"/><circle cx="1.4" cy="44.2" r="1" fill="#e8a0a0"/><circle cx="29.3" cy="77.5" r="2.0" fill="#d25a52"/><circle cx="61.5" cy="84.7" r="1.6" fill="#d25a52"/><circle cx="101.0" cy="15.6" r="1.9" fill="#d25a52"/><circle cx="135.5" cy="28.4" r="1.6" fill="#d25a52"/><circle cx="141.5" cy="13.0" r="1.6" fill="#4a5438"/><circle cx="54.1" cy="56.7" r="1.8" fill="#d25a52"/><circle cx="126.9" cy="75.4" r="1.6" fill="#4a5438"/><circle cx="72.2" cy="50.0" r="2.0" fill="#d25a52"/><circle cx="98.6" cy="39.9" r="1.6" fill="#4a5438"/><circle cx="60.0" cy="33.8" r="1.8" fill="#d25a52"/><circle cx="81.9" cy="45.3" r="1.8" fill="#d25a52"/><circle cx="63.9" cy="52.2" r="1.6" fill="#4a5438"/><circle cx="133.2" cy="13.4" r="1" fill="#e8a0a0"/><circle cx="142.0" cy="64.9" r="1.9" fill="#d25a52"/><circle cx="118.6" cy="70.2" r="1.6" fill="#4a5438"/><circle cx="28.0" cy="24.6" r="1.6" fill="#4a5438"/><circle cx="113.9" cy="13.4" r="1" fill="#e8a0a0"/><circle cx="14.3" cy="3.2" r="2.1" fill="#d25a52"/><circle cx="119.2" cy="10.3" r="1.6" fill="#d25a52"/><circle cx="104.1" cy="17.3" r="1.6" fill="#4a5438"/><circle cx="48.6" cy="27.7" r="1.6" fill="#4a5438"/><circle cx="39.8" cy="53.1" r="1.6" fill="#4a5438"/><circle cx="25.8" cy="11.3" r="1.6" fill="#4a5438"/><circle cx="16.6" cy="82.8" r="1.6" fill="#4a5438"/><circle cx="98.9" cy="64.8" r="1" fill="#e8a0a0"/><circle cx="44.4" cy="35.9" r="1.8" fill="#d25a52"/><circle cx="60.7" cy="72.2" r="1" fill="#e8a0a0"/><circle cx="49.5" cy="61.9" r="1.8" fill="#d25a52"/><circle cx="40.7" cy="76.8" r="2.1" fill="#d25a52"/><circle cx="55.4" cy="65.4" r="1.6" fill="#4a5438"/><circle cx="59.9" cy="24.8" r="1" fill="#e8a0a0"/><circle cx="136.5" cy="25.8" r="1.6" fill="#4a5438"/><circle cx="96.1" cy="21.5" r="1" fill="#e8a0a0"/><circle cx="18.9" cy="78.8" r="1.6" fill="#d25a52"/><circle cx="84.5" cy="48.0" r="2.1" fill="#d25a52"/><circle cx="12.6" cy="32.0" r="1" fill="#e8a0a0"/><circle cx="103.4" cy="58.9" r="2.1" fill="#d25a52"/><circle cx="135.8" cy="2.0" r="1.6" fill="#4a5438"/><circle cx="67.1" cy="31.8" r="1" fill="#e8a0a0"/><circle cx="45.2" cy="59.0" r="1.6" fill="#4a5438"/><circle cx="56.5" cy="72.9" r="1.6" fill="#4a5438"/><circle cx="9.5" cy="40.7" r="1" fill="#e8a0a0"/><circle cx="29.9" cy="32.6" r="1.6" fill="#d25a52"/><circle cx="106.1" cy="7.4" r="1.8" fill="#d25a52"/><circle cx="89.1" cy="65.3" r="2.0" fill="#d25a52"/><circle cx="104.5" cy="68.3" r="1.7" fill="#d25a52"/><circle cx="128.1" cy="2.1" r="1" fill="#e8a0a0"/><circle cx="76.6" cy="47.0" r="2.0" fill="#d25a52"/><circle cx="43.1" cy="44.6" r="1.8" fill="#d25a52"/><circle cx="18.5" cy="7.8" r="1.6" fill="#4a5438"/><circle cx="42.0" cy="68.4" r="1.6" fill="#d25a52"/><circle cx="7.8" cy="19.2" r="1" fill="#e8a0a0"/><circle cx="22.1" cy="85.4" r="1.6" fill="#4a5438"/><circle cx="137.8" cy="36.4" r="1.4" fill="#d25a52"/><circle cx="117.0" cy="64.6" r="1.6" fill="#4a5438"/><circle cx="22.4" cy="46.7" r="1.3" fill="#d25a52"/><circle cx="43.0" cy="85.0" r="1.6" fill="#4a5438"/><circle cx="121.2" cy="4.1" r="1" fill="#e8a0a0"/><circle cx="11.2" cy="23.0" r="2.1" fill="#d25a52"/><circle cx="47.0" cy="43.0" r="1.6" fill="#4a5438"/><circle cx="126.8" cy="83.3" r="1.6" fill="#4a5438"/><circle cx="71.6" cy="79.5" r="1" fill="#e8a0a0"/><circle cx="42.8" cy="65.1" r="1.6" fill="#d25a52"/><circle cx="61.4" cy="42.0" r="1" fill="#e8a0a0"/><circle cx="61.6" cy="39.7" r="2.0" fill="#d25a52"/><circle cx="8.8" cy="46.5" r="1.6" fill="#4a5438"/><circle cx="57.2" cy="19.6" r="1.6" fill="#d25a52"/><circle cx="45.0" cy="42.6" r="1.9" fill="#d25a52"/><circle cx="58.1" cy="85.0" r="1.8" fill="#d25a52"/><circle cx="137.4" cy="32.2" r="1.6" fill="#4a5438"/><circle cx="52.8" cy="26.5" r="1.6" fill="#4a5438"/><circle cx="7.6" cy="8.2" r="1.5" fill="#d25a52"/><circle cx="57.5" cy="25.1" r="1.6" fill="#4a5438"/><circle cx="112.7" cy="56.5" r="2.0" fill="#d25a52"/><circle cx="6.9" cy="55.0" r="1.6" fill="#4a5438"/><circle cx="132.6" cy="56.2" r="2.1" fill="#d25a52"/><circle cx="107.6" cy="51.0" r="1.9" fill="#d25a52"/><circle cx="63.0" cy="66.1" r="1" fill="#e8a0a0"/><circle cx="64.0" cy="38.4" r="1.5" fill="#d25a52"/><circle cx="105.1" cy="6.3" r="2.0" fill="#d25a52"/><circle cx="95.3" cy="48.2" r="1.3" fill="#d25a52"/><circle cx="44.3" cy="83.9" r="1.6" fill="#4a5438"/><circle cx="131.9" cy="18.6" r="1" fill="#e8a0a0"/><circle cx="17.6" cy="76.9" r="1" fill="#e8a0a0"/><circle cx="4.5" cy="38.0" r="1" fill="#e8a0a0"/><circle cx="96.4" cy="81.7" r="1" fill="#e8a0a0"/><circle cx="15.0" cy="65.3" r="1.8" fill="#d25a52"/><circle cx="28.9" cy="30.5" r="1.5" fill="#d25a52"/><circle cx="84.6" cy="45.8" r="1" fill="#e8a0a0"/><circle cx="51.2" cy="51.4" r="1" fill="#e8a0a0"/><circle cx="140.2" cy="28.9" r="1.6" fill="#4a5438"/><circle cx="33.4" cy="23.0" r="1.6" fill="#4a5438"/><circle cx="9.2" cy="72.6" r="1" fill="#e8a0a0"/><circle cx="102.5" cy="38.1" r="1.6" fill="#4a5438"/><circle cx="130.1" cy="40.1" r="1" fill="#e8a0a0"/><circle cx="33.1" cy="66.3" r="1.5" fill="#d25a52"/><circle cx="121.2" cy="3.1" r="1.6" fill="#4a5438"/><circle cx="81.2" cy="48.5" r="1.4" fill="#d25a52"/><circle cx="14.0" cy="69.0" r="1.4" fill="#d25a52"/><circle cx="76.5" cy="53.7" r="2.0" fill="#d25a52"/><circle cx="132.1" cy="60.7" r="1" fill="#e8a0a0"/><circle cx="136.0" cy="63.2" r="2.1" fill="#d25a52"/><circle cx="103.9" cy="23.3" r="1.2" fill="#d25a52"/><circle cx="41.9" cy="22.3" r="1.7" fill="#d25a52"/><circle cx="39.0" cy="25.1" r="1.7" fill="#d25a52"/><circle cx="122.2" cy="53.6" r="1.6" fill="#4a5438"/><circle cx="105.0" cy="47.0" r="1.6" fill="#4a5438"/><circle cx="131.5" cy="68.2" r="1.3" fill="#d25a52"/><circle cx="33.4" cy="39.8" r="1" fill="#e8a0a0"/><circle cx="104.3" cy="83.0" r="1.6" fill="#4a5438"/><circle cx="33.2" cy="83.6" r="2.1" fill="#d25a52"/><circle cx="128.9" cy="9.0" r="1.6" fill="#4a5438"/><circle cx="44.2" cy="76.7" r="1.9" fill="#d25a52"/><circle cx="9.7" cy="2.6" r="1.6" fill="#4a5438"/><circle cx="112.2" cy="45.9" r="1.7" fill="#d25a52"/><circle cx="26.4" cy="46.4" r="1" fill="#e8a0a0"/><circle cx="100.8" cy="36.7" r="1" fill="#e8a0a0"/><circle cx="11.3" cy="42.9" r="1.6" fill="#4a5438"/><circle cx="139.1" cy="49.4" r="1.5" fill="#d25a52"/><circle cx="122.8" cy="82.3" r="1.7" fill="#d25a52"/><circle cx="84.5" cy="60.3" r="1.6" fill="#4a5438"/><circle cx="136.9" cy="2.1" r="2.0" fill="#d25a52"/><circle cx="98.5" cy="45.7" r="1.6" fill="#4a5438"/><circle cx="108.3" cy="71.1" r="1.3" fill="#d25a52"/><circle cx="58.3" cy="29.5" r="1.2" fill="#d25a52"/><circle cx="110.1" cy="23.1" r="1.6" fill="#4a5438"/><circle cx="96.5" cy="40.0" r="2.1" fill="#d25a52"/><circle cx="25.1" cy="13.2" r="1.7" fill="#d25a52"/><circle cx="112.1" cy="29.3" r="1.9" fill="#d25a52"/><circle cx="37.2" cy="46.0" r="2.1" fill="#d25a52"/><circle cx="26.4" cy="20.4" r="1.5" fill="#d25a52"/><circle cx="109.2" cy="21.5" r="1.6" fill="#d25a52"/><rect x="12" y="80" width="7" height="44" fill="#b89272"/><rect x="37" y="80" width="8" height="44" fill="#b89272"/><rect x="57" y="80" width="5" height="24" fill="#b89272"/><rect x="68" y="80" width="4" height="24" fill="#b89272"/><rect x="117" y="80" width="7" height="44" fill="#b89272"/><rect x="135" y="80" width="7" height="44" fill="#b89272"/><rect x="25" y="84" width="4" height="22" fill="#a88468"/><rect x="48" y="84" width="4" height="22" fill="#a88468"/><rect x="88" y="84" width="4" height="22" fill="#a88468"/><rect x="100" y="84" width="5" height="22" fill="#a88468"/><rect x="128" y="84" width="4" height="22" fill="#a88468"/><rect y="104" width="143" height="38" fill="#6a6a50"/><rect x="12" y="100" width="7" height="22" fill="#b08a6e"/><rect x="37" y="100" width="8" height="16" fill="#b08a6e"/><rect x="117" y="100" width="7" height="16" fill="#b08a6e"/><rect x="135" y="100" width="7" height="20" fill="#b08a6e"/><rect x="141.5" y="118.7" width="2" height="1" fill="#7a7a5a"/><rect x="51.0" y="138.7" width="2" height="1" fill="#7a7a5a"/><rect x="141.6" y="119.3" width="2" height="1" fill="#7a7a5a"/><rect x="19.4" y="134.2" width="2" height="1" fill="#7a7a5a"/><rect x="111.9" y="117.5" width="2" height="1" fill="#7a7a5a"/><rect x="113.0" y="119.0" width="2" height="1" fill="#7a7a5a"/><rect x="41.1" y="127.0" width="2" height="1" fill="#7a7a5a"/><rect x="106.0" y="122.6" width="2" height="1" fill="#7a7a5a"/><rect x="117.0" y="105.5" width="2" height="1" fill="#7a7a5a"/><rect x="71.4" y="119.1" width="2" height="1" fill="#7a7a5a"/><rect x="9.3" y="138.8" width="2" height="1" fill="#7a7a5a"/><rect x="20.5" y="112.6" width="2" height="1" fill="#7a7a5a"/><rect x="125.6" y="140.5" width="2" height="1" fill="#7a7a5a"/><rect x="133.2" y="117.7" width="2" height="1" fill="#7a7a5a"/><rect x="133.1" y="110.2" width="2" height="1" fill="#7a7a5a"/><rect x="102.2" y="140.0" width="2" height="1" fill="#7a7a5a"/><rect x="27.6" y="110.0" width="2" height="1" fill="#7a7a5a"/><rect x="97.0" y="137.7" width="2" height="1" fill="#7a7a5a"/><rect x="103.9" y="140.1" width="2" height="1" fill="#7a7a5a"/><rect x="64.9" y="118.8" width="2" height="1" fill="#7a7a5a"/><rect x="17.2" y="115.1" width="2" height="1" fill="#7a7a5a"/><rect x="134.3" y="107.7" width="2" height="1" fill="#7a7a5a"/><rect x="26.4" y="117.9" width="2" height="1" fill="#7a7a5a"/><rect x="7.0" y="116.4" width="2" height="1" fill="#7a7a5a"/><rect x="26.1" y="109.5" width="2" height="1" fill="#7a7a5a"/><rect x="75.3" y="125.0" width="2" height="1" fill="#7a7a5a"/><rect x="81.2" y="133.2" width="2" height="1" fill="#7a7a5a"/><rect x="75.3" y="140.0" width="2" height="1" fill="#7a7a5a"/><rect x="11.7" y="113.2" width="2" height="1" fill="#7a7a5a"/><rect x="11.0" y="116.4" width="2" height="1" fill="#7a7a5a"/><rect x="108.8" y="139.2" width="2" height="1" fill="#7a7a5a"/><rect x="72.0" y="110.9" width="2" height="1" fill="#7a7a5a"/><rect x="47.2" y="126.0" width="2" height="1" fill="#7a7a5a"/><rect x="42.1" y="134.3" width="2" height="1" fill="#7a7a5a"/><rect x="139.1" y="122.0" width="2" height="1" fill="#7a7a5a"/><rect x="86.2" y="136.3" width="2" height="1" fill="#7a7a5a"/><rect x="66.5" y="112.1" width="2" height="1" fill="#7a7a5a"/><rect x="135.0" y="141.2" width="2" height="1" fill="#7a7a5a"/><rect x="3.5" y="133.2" width="2" height="1" fill="#7a7a5a"/><rect x="57.3" y="106.9" width="2" height="1" fill="#7a7a5a"/><rect x="23.3" y="111.4" width="2" height="1" fill="#7a7a5a"/><rect x="105.3" y="112.8" width="2" height="1" fill="#7a7a5a"/><rect x="2.8" y="113.1" width="2" height="1" fill="#7a7a5a"/><rect x="114.3" y="123.5" width="2" height="1" fill="#7a7a5a"/><rect x="93.4" y="122.2" width="2" height="1" fill="#7a7a5a"/><rect x="26.1" y="105.6" width="2" height="1" fill="#7a7a5a"/><rect x="43.5" y="106.5" width="2" height="1" fill="#7a7a5a"/><rect x="37.3" y="127.9" width="2" height="1" fill="#7a7a5a"/><rect x="52.8" y="122.5" width="2" height="1" fill="#7a7a5a"/><rect x="89.2" y="116.7" width="2" height="1" fill="#7a7a5a"/><rect x="51.0" y="137.7" width="2" height="1" fill="#7a7a5a"/><rect x="83.1" y="120.4" width="2" height="1" fill="#7a7a5a"/><rect x="77.2" y="122.0" width="2" height="1" fill="#7a7a5a"/><rect x="47.5" y="138.8" width="2" height="1" fill="#7a7a5a"/><rect x="33.4" y="139.6" width="2" height="1" fill="#7a7a5a"/><rect x="122.0" y="137.6" width="2" height="1" fill="#7a7a5a"/><rect x="23.3" y="123.8" width="2" height="1" fill="#7a7a5a"/><rect x="140.8" y="115.7" width="2" height="1" fill="#7a7a5a"/><rect x="24.4" y="131.8" width="2" height="1" fill="#7a7a5a"/><rect x="33.6" y="126.6" width="2" height="1" fill="#7a7a5a"/><rect x="22.5" y="140.1" width="2" height="1" fill="#7a7a5a"/><rect x="40.6" y="108.6" width="2" height="1" fill="#7a7a5a"/><rect x="98.3" y="117.8" width="2" height="1" fill="#7a7a5a"/><rect x="80.0" y="123.4" width="2" height="1" fill="#7a7a5a"/><rect x="131.9" y="124.0" width="2" height="1" fill="#7a7a5a"/><rect x="54.2" y="105.1" width="2" height="1" fill="#7a7a5a"/><rect x="71.0" y="115.0" width="2" height="1" fill="#7a7a5a"/><rect x="82.1" y="128.4" width="2" height="1" fill="#7a7a5a"/><rect x="66.1" y="108.3" width="2" height="1" fill="#7a7a5a"/><rect x="71.1" y="122.8" width="2" height="1" fill="#7a7a5a"/><rect x="91.7" y="140.9" width="2" height="1" fill="#7a7a5a"/><rect x="40.1" y="121.4" width="2" height="1" fill="#7a7a5a"/><rect x="12.1" y="134.6" width="2" height="1" fill="#7a7a5a"/><rect x="33.5" y="135.7" width="2" height="1" fill="#7a7a5a"/><rect x="114.1" y="114.4" width="2" height="1" fill="#7a7a5a"/><rect x="129.1" y="123.6" width="2" height="1" fill="#7a7a5a"/><rect x="60.9" y="125.5" width="2" height="1" fill="#7a7a5a"/><rect x="135.3" y="123.1" width="2" height="1" fill="#7a7a5a"/><rect x="69.0" y="115.8" width="2" height="1" fill="#7a7a5a"/><rect x="120.3" y="123.6" width="2" height="1" fill="#7a7a5a"/><rect x="49.0" y="112.3" width="2" height="1" fill="#7a7a5a"/><rect x="30.8" y="135.9" width="2" height="1" fill="#7a7a5a"/><rect x="114.9" y="141.2" width="2" height="1" fill="#7a7a5a"/><rect x="131.1" y="130.3" width="2" height="1" fill="#7a7a5a"/><rect x="114.0" y="131.3" width="2" height="1" fill="#7a7a5a"/><rect x="115.8" y="134.6" width="2" height="1" fill="#7a7a5a"/><rect x="25.2" y="135.1" width="2" height="1" fill="#7a7a5a"/><rect x="43.4" y="114.0" width="2" height="1" fill="#7a7a5a"/><rect x="131.5" y="105.8" width="2" height="1" fill="#7a7a5a"/><rect x="73.2" y="117.7" width="2" height="1" fill="#7a7a5a"/><rect x="113.2" y="127.6" width="2" height="1" fill="#7a7a5a"/><rect x="130.3" y="139.5" width="2" height="1" fill="#7a7a5a"/><rect x="92.1" y="107.4" width="2" height="1" fill="#7a7a5a"/><rect x="95.4" y="109.0" width="2" height="1" fill="#7a7a5a"/><rect x="140.5" y="137.2" width="2" height="1" fill="#7a7a5a"/><rect x="44.4" y="111.9" width="2" height="1" fill="#7a7a5a"/><rect x="99.3" y="133.1" width="2" height="1" fill="#7a7a5a"/><rect x="140.9" y="128.0" width="2" height="1" fill="#7a7a5a"/><rect x="17.9" y="131.9" width="2" height="1" fill="#7a7a5a"/><rect x="8.4" y="137.1" width="2" height="1" fill="#7a7a5a"/><rect x="109.9" y="134.1" width="2" height="1" fill="#7a7a5a"/><rect x="124.9" y="126.1" width="2" height="1" fill="#7a7a5a"/><rect x="134.9" y="128.6" width="2" height="1" fill="#7a7a5a"/><rect x="70.3" y="119.2" width="2" height="1" fill="#7a7a5a"/><rect x="50.5" y="105.8" width="2" height="1" fill="#7a7a5a"/><rect x="23.0" y="134.4" width="2" height="1" fill="#7a7a5a"/><rect x="32.7" y="129.2" width="2" height="1" fill="#7a7a5a"/><rect x="110.9" y="130.7" width="2" height="1" fill="#7a7a5a"/><rect x="73.8" y="116.7" width="2" height="1" fill="#7a7a5a"/><rect x="39.0" y="111.9" width="2" height="1" fill="#7a7a5a"/><rect x="92.6" y="130.4" width="2" height="1" fill="#7a7a5a"/><rect x="134.7" y="117.2" width="2" height="1" fill="#7a7a5a"/><rect x="132.6" y="138.7" width="2" height="1" fill="#7a7a5a"/><rect x="41.5" y="140.2" width="2" height="1" fill="#7a7a5a"/><rect x="88.6" y="140.6" width="2" height="1" fill="#7a7a5a"/><rect x="110.7" y="117.3" width="2" height="1" fill="#7a7a5a"/><rect x="39.9" y="124.3" width="2" height="1" fill="#7a7a5a"/><rect x="69.8" y="106.3" width="2" height="1" fill="#7a7a5a"/><rect x="123.3" y="124.8" width="2" height="1" fill="#7a7a5a"/><rect x="67.6" y="132.5" width="2" height="1" fill="#7a7a5a"/><ellipse cx="80" cy="133" rx="18" ry="3" fill="#4a4a38"/><g filter="url(#bl)"><path d="M50 30 L58 27 L64 36 L70 44 L74 54 L90 56 L112 56 L122 64 L126 80 L124 100 L118 106 L114 90 L106 80 L100 96 L96 112 L92 110 L94 92 L82 90 L74 104 L68 108 L66 98 L70 88 L56 86 L54 96 L48 94 L50 80 L46 66 L44 52 L36 56 L34 48 L44 38 Z" fill="url(#uni)"/></g><text x="60" y="72" font-size="8" fill="#fff" font-family="Liberation Serif" font-style="italic">Attitude</text></svg>
<div class="t" style="left:1404px;width:160px;text-align:center;top:338px;font-size:16px;color:#f2eaea;letter-spacing:-0.8px">Mrs. GREEN APPLE</div>
<div class="t" style="left:1404px;width:160px;text-align:center;top:362px;font-size:16px;color:#f2eaea;letter-spacing:-0.6px">Attitude (2019)</div>
<svg class="a" style="left:1592px;top:173px;" width="83" height="14" viewBox="0 0 83 14"><path transform="translate(0.0,0) scale(1.000)" d="M5 1v5M2 3l-1 3M8 3l1 2M8 6c-2 3-5 4-7 4" stroke="#efe3e0" fill="none" stroke-width="1.20" stroke-linecap="square"/><path transform="translate(13.2,0) scale(1.000)" d="M3 1v6c0 2 3 3 6 1" stroke="#efe3e0" fill="none" stroke-width="1.20" stroke-linecap="square"/><path transform="translate(26.4,0) scale(1.000)" d="M1.5 1v8M4 3h5M6.5 1v6c0 3-3 3-3 1s3-1 5 1" stroke="#efe3e0" fill="none" stroke-width="1.20" stroke-linecap="square"/><path transform="translate(39.6,0) scale(1.000)" d="M5 0.5v9M1 5h8M2 1l2 2M8 1l-2 2M5 5l-4 4M5 5l4 4" stroke="#efe3e0" fill="none" stroke-width="1.20" stroke-linecap="square"/><path transform="translate(52.8,0) scale(1.000)" d="M1 3h5c1 0 1 5-1 6M3 1c0 3-1 6-2 8M8 2l1 3" stroke="#efe3e0" fill="none" stroke-width="1.20" stroke-linecap="square"/><path transform="translate(66.0,0) scale(1.000)" d="M1 3h4M3 1l-2 5M7 3l2 1M6 5v3c0 2-4 2-3 0s4 0 5 1" stroke="#efe3e0" fill="none" stroke-width="1.20" stroke-linecap="square"/></svg>
<svg class="a" style="left:1592px;top:194px;" width="111" height="17" viewBox="0 0 111 17"><path transform="translate(0.0,0) scale(1.300)" d="M1 1h7M4.5 1l-3.5 4M4.5 1l3.5 4M5 5v3M0.5 8.5h9" stroke="#f6eeee" fill="none" stroke-width="1.23" stroke-linecap="square"/><path transform="translate(14.6,0) scale(1.300)" d="M1 1h7v2.5M0 5h10M2 6.5h6v3.5H2z" stroke="#f6eeee" fill="none" stroke-width="1.23" stroke-linecap="square"/><path transform="translate(29.1,0) scale(1.300)" d="M5 2.5m-3 0a3 2 0 1 0 6 0a3 2 0 1 0-6 0M0 6h10M1.5 7.5v2.5h7" stroke="#f6eeee" fill="none" stroke-width="1.23" stroke-linecap="square"/><path transform="translate(49.5,0) scale(1.300)" d="M1 1h6M2.5 1v4M5.5 1v4M1 5h6M8 1v6M7 3.5h1M2 7.5v2.5h7" stroke="#f6eeee" fill="none" stroke-width="1.23" stroke-linecap="square"/><path transform="translate(64.1,0) scale(1.300)" d="M3 0.5v1M1 2h4M3 5.5m-2 0a2 2 0 1 0 4 0a2 2 0 1 0-4 0M8 1v9M8 5h2" stroke="#f6eeee" fill="none" stroke-width="1.23" stroke-linecap="square"/><path transform="translate(78.7,0) scale(1.300)" d="M1 1h5v3H1v3h5M8 1v9M6.5 3.5h1.5M6.5 6h1.5" stroke="#f6eeee" fill="none" stroke-width="1.23" stroke-linecap="square"/><path transform="translate(93.2,0) scale(1.300)" d="M1 1v6h5M8 1v9M8 5h2" stroke="#f6eeee" fill="none" stroke-width="1.23" stroke-linecap="square"/></svg>
<svg class="a" style="left:1592px;top:242px;" width="105" height="14" viewBox="0 0 105 14"><path transform="translate(0.0,0) scale(1.000)" d="M2 1l-1.5 4M1.5 3v7M4 2h5M4 4h5M4 6h5M6.5 1v9M4 10l2.5-3 2.5 3" stroke="#f2e8e6" fill="none" stroke-width="1.40" stroke-linecap="square"/><path transform="translate(12.7,0) scale(1.000)" d="M1 3h4M3 1l-2 6M6 4h3M6 8c1 1 3 1 3 0M8 1l1 1M9 1l1 1" stroke="#f2e8e6" fill="none" stroke-width="1.40" stroke-linecap="square"/><path transform="translate(25.4,0) scale(1.000)" d="M1.5 1v8M4 3h5M7 1v5c0 2-1 3-3 4" stroke="#f2e8e6" fill="none" stroke-width="1.40" stroke-linecap="square"/><path transform="translate(38.1,0) scale(1.000)" d="M3 1v6c0 2 3 3 6 1M7 1l1 1M8.5 1l1 1" stroke="#f2e8e6" fill="none" stroke-width="1.40" stroke-linecap="square"/><path transform="translate(50.8,0) scale(1.000)" d="M2 4l3 5M1 5c3-1 6-1 6 1s-2 1-2 1M4 3l1 1" stroke="#f2e8e6" fill="none" stroke-width="1.40" stroke-linecap="square"/><path transform="translate(63.5,0) scale(1.000)" d="M1 3h4M3 1l-2 5M7 3l2 1M6 5v3c0 2-4 2-3 0s4 0 5 1" stroke="#f2e8e6" fill="none" stroke-width="1.40" stroke-linecap="square"/><path transform="translate(76.2,0) scale(1.000)" d="M2 2c0 4 1 6 2 6M7 3l1 3" stroke="#f2e8e6" fill="none" stroke-width="1.40" stroke-linecap="square"/><path transform="translate(88.9,0) scale(1.000)" d="M3 1l1 4M8 3c-4 1-6 3-6 5s3 2 6 1" stroke="#f2e8e6" fill="none" stroke-width="1.40" stroke-linecap="square"/></svg>
<svg class="a" style="left:1592px;top:264px;" width="126" height="17" viewBox="0 0 126 17"><path transform="translate(0.0,0) scale(1.300)" d="M1 1v6h5M8 1v9M8 5h2" stroke="#f6eeee" fill="none" stroke-width="1.23" stroke-linecap="square"/><path transform="translate(14.6,0) scale(1.300)" d="M1 1v3h3V1M5 1v3h3V1M0 5h10M2 6.5v3.5h7" stroke="#f6eeee" fill="none" stroke-width="1.23" stroke-linecap="square"/><path transform="translate(29.1,0) scale(1.300)" d="M1 1h5v4H1zM8 1v6M8 3h2M2 7.5v2.5h7" stroke="#f6eeee" fill="none" stroke-width="1.23" stroke-linecap="square"/><path transform="translate(43.7,0) scale(1.300)" d="M3.5 5.5m-2.5 0a2.5 3 0 1 0 5 0a2.5 3 0 1 0-5 0M8 1v9" stroke="#f6eeee" fill="none" stroke-width="1.23" stroke-linecap="square"/><path transform="translate(64.1,0) scale(1.300)" d="M3.5 5m-2.5 0a2.5 3 0 1 0 5 0a2.5 3 0 1 0-5 0M8 1v9M8 5h2" stroke="#f6eeee" fill="none" stroke-width="1.23" stroke-linecap="square"/><path transform="translate(78.7,0) scale(1.300)" d="M1 1v7h5M8 1v9" stroke="#f6eeee" fill="none" stroke-width="1.23" stroke-linecap="square"/><path transform="translate(93.2,0) scale(1.300)" d="M1 1h5v3H1v3h5M8 1v9M8 5h2" stroke="#f6eeee" fill="none" stroke-width="1.23" stroke-linecap="square"/><path transform="translate(107.8,0) scale(1.300)" d="M1 1h7v4M4.5 5v3M0 8.5h10" stroke="#f6eeee" fill="none" stroke-width="1.23" stroke-linecap="square"/></svg>
<svg class="a" style="left:1592px;top:313px;" width="70" height="14" viewBox="0 0 70 14"><path transform="translate(0.0,0) scale(1.000)" d="M2 1h6v4H2zM2 3h6M5 1v4M1 9c0-2 1-3 1-3M3 7l1 2h4l1-2M6 6l1 1" stroke="#f2e8e6" fill="none" stroke-width="1.40" stroke-linecap="square"/><path transform="translate(13.2,0) scale(1.000)" d="M3 1l3 1M1 4h7l-6 5c1-2 2-2 3-1s2 1 4 1" stroke="#f2e8e6" fill="none" stroke-width="1.40" stroke-linecap="square"/><path transform="translate(26.4,0) scale(1.000)" d="M2 2h5l-4 4c3-1 6 0 6 2s-3 2-4 1" stroke="#f2e8e6" fill="none" stroke-width="1.40" stroke-linecap="square"/><path transform="translate(39.6,0) scale(1.000)" d="M1 3h5c1 0 1 5-1 6M3 1c0 3-1 6-2 8M8 2l1 3" stroke="#f2e8e6" fill="none" stroke-width="1.40" stroke-linecap="square"/><path transform="translate(52.8,0) scale(1.000)" d="M1 3h4M3 1l-2 5M7 3l2 1M6 5v3c0 2-4 2-3 0s4 0 5 1" stroke="#f2e8e6" fill="none" stroke-width="1.40" stroke-linecap="square"/></svg>
<svg class="a" style="left:1592px;top:334px;" width="62" height="17" viewBox="0 0 62 17"><path transform="translate(0.0,0) scale(1.300)" d="M3.5 5m-2.5 0a2.5 3 0 1 0 5 0a2.5 3 0 1 0-5 0M8 1v9M6.5 3.5h1.5M6.5 6.5h1.5" stroke="#cdb8b4" fill="none" stroke-width="1.08" stroke-linecap="square"/><path transform="translate(14.6,0) scale(1.300)" d="M1 2h5c0 3-2 6-5 7M8 1v9" stroke="#cdb8b4" fill="none" stroke-width="1.08" stroke-linecap="square"/><path transform="translate(29.1,0) scale(1.300)" d="M1 1h5v3H1v3h5M8 1v9M6.5 3.5h1.5M6.5 6h1.5" stroke="#cdb8b4" fill="none" stroke-width="1.08" stroke-linecap="square"/><path transform="translate(43.7,0) scale(1.300)" d="M1 1v6h5M8 1v9M8 5h2" stroke="#cdb8b4" fill="none" stroke-width="1.08" stroke-linecap="square"/></svg>
<div class="a" style="left:1379px;top:504px;width:541px;height:156px;background:#0f0f0f;"></div>
<svg class="a" style="left:1404px;top:521px;" width="58" height="21" viewBox="0 0 58 21"><path transform="translate(0.0,0) scale(1.700)" d="M1 2h5v6H1zM8 1v9" stroke="#f1f1f1" fill="none" stroke-width="1.53" stroke-linecap="square"/><path transform="translate(18.2,0) scale(1.700)" d="M3.5 2l-3 7M3.5 4l3 5M7 1v9M7 5h1.5M9 1v9" stroke="#f1f1f1" fill="none" stroke-width="1.53" stroke-linecap="square"/><path transform="translate(36.4,0) scale(1.700)" d="M5 1l-4 4M5 1l4 4M0.5 8h9" stroke="#f1f1f1" fill="none" stroke-width="1.53" stroke-linecap="square"/></svg>
<svg class="a" style="left:1470px;top:521px;" width="40" height="21" viewBox="0 0 40 21"><path transform="translate(0.0,0) scale(1.700)" d="M1 2h7v4M0 8h10" stroke="#f1f1f1" fill="none" stroke-width="1.53" stroke-linecap="square"/><path transform="translate(18.2,0) scale(1.700)" d="M1 1h5v2.5H1V6h5M8 1v6M2 7.5v2.5h7" stroke="#f1f1f1" fill="none" stroke-width="1.53" stroke-linecap="square"/></svg>
<svg class="a" style="left:1515px;top:521px;" width="40" height="21" viewBox="0 0 40 21"><path transform="translate(0.0,0) scale(1.700)" d="M3.5 5.5m-2.5 0a2.5 3 0 1 0 5 0a2.5 3 0 1 0-5 0M7 1v9M7 5h1.5M9 1v9" stroke="#f1f1f1" fill="none" stroke-width="1.53" stroke-linecap="square"/><path transform="translate(18.2,0) scale(1.700)" d="M1 1h8M3 1v3M7 1v3M0.5 4h9M0 6h10M2 7.5h6v2.5H2z" stroke="#f1f1f1" fill="none" stroke-width="1.53" stroke-linecap="square"/></svg>
<div class="t" style="left:1556px;top:518px;font-size:20px;color:#f1f1f1;font-weight:bold;letter-spacing:-0.6px">(Mrs. GREEN APPLE) -</div>
<svg class="a" style="left:1768px;top:521px;" width="58" height="21" viewBox="0 0 58 21"><path transform="translate(0.0,0) scale(1.700)" d="M1 1v6h5M8 1v9M8 5h2" stroke="#f1f1f1" fill="none" stroke-width="1.53" stroke-linecap="square"/><path transform="translate(18.2,0) scale(1.700)" d="M1 1h5v3H1v3h5M8 1v9M8 5h2" stroke="#f1f1f1" fill="none" stroke-width="1.53" stroke-linecap="square"/><path transform="translate(36.4,0) scale(1.700)" d="M1 1v3h7M0 5.5h10M1.5 7v3h7" stroke="#f1f1f1" fill="none" stroke-width="1.53" stroke-linecap="square"/></svg>
<svg class="a" style="left:1835px;top:521px;" width="22" height="21" viewBox="0 0 22 21"><path transform="translate(0.0,0) scale(1.700)" d="M1 1h4l-3 5M4 3l3 3M8 1v6M6.5 3.5h1.5M3 7l-2 3M3 7l3 3" stroke="#f1f1f1" fill="none" stroke-width="1.53" stroke-linecap="square"/></svg>
<div class="t" style="left:1852px;top:518px;font-size:20px;color:#f1f1f1;font-weight:bold">(</div>
<svg class="a" style="left:1860px;top:521px;" width="40" height="21" viewBox="0 0 40 21"><path transform="translate(0.0,0) scale(1.700)" d="M2 1l-1.5 4M1.5 3v7M4 2h5M4 4h5M4 6h5M6.5 1v9M4 10l2.5-3 2.5 3" stroke="#f1f1f1" fill="none" stroke-width="1.41" stroke-linecap="square"/><path transform="translate(18.2,0) scale(1.700)" d="M5 2c-3 0-4 3-4 5s2 2 3 0 1-5 1-5c3 0 4 3 4 5s-3 3-5 2" stroke="#f1f1f1" fill="none" stroke-width="1.41" stroke-linecap="square"/></svg>
<svg class="a" style="left:1404px;top:550px;" width="40" height="21" viewBox="0 0 40 21"><path transform="translate(0.0,0) scale(1.700)" d="M2 2h6M2 7.5c2 1.5 4 1.5 6 0.5" stroke="#f1f1f1" fill="none" stroke-width="1.53" stroke-linecap="square"/><path transform="translate(18.2,0) scale(1.700)" d="M3 1l1 4M8 3c-4 1-6 3-6 5s3 2 6 1" stroke="#f1f1f1" fill="none" stroke-width="1.53" stroke-linecap="square"/></svg>
<div class="t" style="left:1440px;top:547px;font-size:20px;color:#f1f1f1;font-weight:bold">)</div>
<div class="t" style="left:1453px;top:547px;font-size:20px;color:#f1f1f1;font-weight:bold">[</div>
<svg class="a" style="left:1462px;top:550px;" width="40" height="21" viewBox="0 0 40 21"><path transform="translate(0.0,0) scale(1.700)" d="M3 0.5v1M1 2h4M3 5m-2 0a2 1.8 0 1 0 4 0a2 1.8 0 1 0-4 0M8 1v6M8 4h2M2 7.5v2.5h7" stroke="#f1f1f1" fill="none" stroke-width="1.53" stroke-linecap="square"/><path transform="translate(18.2,0) scale(1.700)" d="M1 1h7v2H1v2.5h7M0 6.5h10M2 8h6v2H2" stroke="#f1f1f1" fill="none" stroke-width="1.53" stroke-linecap="square"/></svg>
<svg class="a" style="left:1510px;top:550px;" width="40" height="21" viewBox="0 0 40 21"><path transform="translate(0.0,0) scale(1.700)" d="M1 1h5l-4 8M8 1v9M8 5h2" stroke="#f1f1f1" fill="none" stroke-width="1.53" stroke-linecap="square"/><path transform="translate(18.2,0) scale(1.700)" d="M3 1l-2.5 8M3 3l3 6M8 1v9M8 5h2" stroke="#f1f1f1" fill="none" stroke-width="1.53" stroke-linecap="square"/></svg>
<div class="t" style="left:1550px;top:547px;font-size:20px;color:#f1f1f1;font-weight:bold">/</div>
<svg class="a" style="left:1558px;top:550px;" width="40" height="21" viewBox="0 0 40 21"><path transform="translate(0.0,0) scale(1.700)" d="M3 0.5v1.5M1 2h5M3.5 5.5m-2 0a2 2 0 1 0 4 0a2 2 0 1 0-4 0M7 1v9M7 5h1.5M9 1v9" stroke="#f1f1f1" fill="none" stroke-width="1.53" stroke-linecap="square"/><path transform="translate(18.2,0) scale(1.700)" d="M3 1l-2.5 5M3 2l3 4M8 1v6M6 3.5h2M2 7.5h6v2.5" stroke="#f1f1f1" fill="none" stroke-width="1.53" stroke-linecap="square"/></svg>
<div class="t" style="left:1597px;top:547px;font-size:20px;color:#f1f1f1;font-weight:bold">/</div>
<svg class="a" style="left:1605px;top:550px;" width="40" height="21" viewBox="0 0 40 21"><path transform="translate(0.0,0) scale(1.700)" d="M1 2h5M3.5 2l-3 7M3.5 4l3 5M8 1v9M8 5h2" stroke="#f1f1f1" fill="none" stroke-width="1.53" stroke-linecap="square"/><path transform="translate(18.2,0) scale(1.700)" d="M1 1h5v4H1zM8 1v5M8 3h2M2 7h6v3" stroke="#f1f1f1" fill="none" stroke-width="1.53" stroke-linecap="square"/></svg>
<div class="t" style="left:1643px;top:547px;font-size:20px;color:#f1f1f1;font-weight:bold">]</div>
<div class="a" style="left:1403px;top:582px;width:42px;height:42px;border-radius:50%;background:radial-gradient(circle at 50% 45%,#3f6a52,#1f3a2c)"></div>
<svg class="a" style="left:1413px;top:592px;" width="22" height="20" viewBox="0 0 22 20"><path d="M11 18C2 11 1 6 4 3.5S10 3 11 6c1-3 5-5 7-2.5s2 7.5-7 14.5z" fill="#d7b47a"/></svg>
<svg class="a" style="left:1456px;top:586px;" width="52" height="19" viewBox="0 0 52 19"><path transform="translate(0.0,0) scale(1.500)" d="M1 2h5M3.5 2l-3 7M3.5 4l3 5M7 1v9M7 5h1.5M9 1v9" stroke="#f1f1f1" fill="none" stroke-width="1.27" stroke-linecap="square"/><path transform="translate(16.1,0) scale(1.500)" d="M3.5 5.5m-2.5 0a2.5 3 0 1 0 5 0a2.5 3 0 1 0-5 0M8 1v9" stroke="#f1f1f1" fill="none" stroke-width="1.27" stroke-linecap="square"/><path transform="translate(32.1,0) scale(1.500)" d="M1 1h6M2.5 1v3M5.5 1v3M1 4h6M8 1v4.5M8 2.5h2M2 6v4h6V6M2 8h6" stroke="#f1f1f1" fill="none" stroke-width="1.27" stroke-linecap="square"/></svg>
<div class="t" style="left:1504px;top:592px;font-size:14px;color:#f1f1f1;">...</div>
<div class="t" style="left:1456px;top:608px;font-size:12px;color:#aaaaaa;">164...</div>
<div class="a" style="left:1640px;top:586px;width:128px;height:36px;background:#272727;border-radius:18px"></div>
<div class="a" style="left:1556px;top:586px;width:96px;height:36px;background:#f1f1f1;border-radius:18px"></div>
<div class="t" style="left:1572px;top:596px;font-size:14px;color:#0f0f0f;font-weight:bold;letter-spacing:-0.4px">Subscribe</div>
<svg class="a" style="left:1651px;top:591px;" width="26" height="26" viewBox="0 0 26 26"><path d="M3 12h4v10H3zM7 12l5-8c2 0 3 1 2.5 3L14 11h6c1.5 0 2.5 1.5 2 3l-2 7c-.4 1-1 1.5-2 1.5H7" stroke="#f1f1f1" fill="none" stroke-width="1.7" stroke-linejoin="round"/></svg>
<div class="t" style="left:1682px;top:596px;font-size:14px;color:#f1f1f1;font-weight:bold">69</div>
<div class="a" style="left:1714px;top:592px;width:1px;height:24px;background:#555;"></div>
<svg class="a" style="left:1725px;top:591px;" width="26" height="26" viewBox="0 0 26 26"><path d="M3 14h4V4H3zM7 14l5 8c2 0 3-1 2.5-3L14 15h6c1.5 0 2.5-1.5 2-3l-2-7c-.4-1-1-1.5-2-1.5H7" stroke="#f1f1f1" fill="none" stroke-width="1.7" stroke-linejoin="round"/></svg>
<div class="a" style="left:1777px;top:586px;width:92px;height:36px;background:#272727;border-radius:18px"></div>
<svg class="a" style="left:1787px;top:591px;" width="26" height="26" viewBox="0 0 26 26"><path d="M14 6l8 7-8 7v-4c-6 0-9 1-12 5 1-6 4-10 12-11z" stroke="#f1f1f1" fill="none" stroke-width="1.7" stroke-linejoin="round"/></svg>
<div class="t" style="left:1817px;top:596px;font-size:14px;color:#f1f1f1;font-weight:bold;letter-spacing:-0.3px">Share</div>
<div class="a" style="left:1878px;top:586px;width:36px;height:36px;border-radius:50%;background:#272727"></div>
<svg class="a" style="left:1884px;top:600px;" width="24" height="8" viewBox="0 0 24 8"><circle cx="6" cy="4" r="1.8" fill="#f1f1f1"/><circle cx="12" cy="4" r="1.8" fill="#f1f1f1"/><circle cx="18" cy="4" r="1.8" fill="#f1f1f1"/></svg>
<div class="a" style="left:1403px;top:638px;width:512px;height:40px;background:#272727;border-radius:12px"></div>
<div class="t" style="left:1414px;top:655px;font-size:14px;color:#f1f1f1;font-weight:bold">17K views&nbsp; 1 year ago</div>
<div class="a" style="left:1379px;top:660px;width:541px;height:420px;background:#000000;"></div>
<svg class="a" style="left:1480px;top:740px" width="380" height="320" viewBox="0 0 1282 1080"><g stroke="#0c0c0c" stroke-width="7" stroke-linejoin="round" stroke-linecap="round">
<!-- pillow -->
<path d="M378 122 Q540 108 700 108 Q950 92 1198 116 Q1215 200 1198 330 Q1188 500 1206 660 L1120 652 L1000 520 L700 480 L500 470 L420 562 L345 552 Q372 450 398 380 Q410 300 395 240 Z" fill="#a7a7a7"/>
<path d="M430 160 Q700 130 1140 150 Q1160 300 1140 420 L980 430 L700 410 L470 430 Q460 300 430 160Z" fill="#b3b3b3" stroke="none"/>
<path d="M1150 130 Q1170 300 1160 420 Q1165 540 1190 650 L1206 660 Q1188 500 1198 330 Q1215 200 1198 116Z" fill="#8f8f8f" stroke="none"/>
<path d="M480 250 L560 270 M470 300 L540 290 M440 400 Q480 420 520 440 M1000 300 L1080 270 M1020 330 L1100 320" stroke-width="4" fill="none"/>
<!-- jacket right -->
<path d="M818 470 Q920 430 1000 425 Q1060 470 1090 540 Q1140 620 1152 780 Q1160 860 1135 902 Q1060 930 980 935 L842 877 Q815 800 815 720 Q818 620 825 560 Z" fill="#dca24a"/>
<path d="M900 640 Q960 600 1020 640 M930 760 Q1000 730 1080 760 M880 820 Q940 800 1000 830" stroke="#9a6a22" stroke-width="6" fill="none"/>
<path d="M1040 560 Q1090 620 1100 720" stroke="#f0c070" stroke-width="10" fill="none"/>
<!-- jacket left -->
<path d="M460 490 L540 470 L612 560 Q590 640 572 700 L480 737 L330 705 Q345 670 362 640 L430 560 Z" fill="#d99c44"/>
<path d="M400 640 Q440 620 480 640 M430 690 Q480 680 520 700" stroke="#9a6a22" stroke-width="6" fill="none"/>
<!-- red hood -->
<path d="M520 452 Q560 440 600 440 L642 520 L592 602 L540 562 Z" fill="#c0302a"/>
<path d="M848 432 Q920 415 990 415 Q1040 460 1060 505 L980 567 L870 612 L830 540 Z" fill="#c4322c"/>
<path d="M880 600 L870 760" stroke-width="5" fill="none"/>
<!-- shirt -->
<path d="M570 560 L640 560 L700 660 L820 640 L842 732 Q760 760 700 770 L570 732 Z" fill="#5a5568"/>
<!-- head blue -->
<path d="M502 108 Q570 110 640 122 Q670 95 700 85 L690 60 L745 80 L738 50 L790 92 Q810 100 830 112 Q900 70 958 55 Q965 150 932 252 L975 285 L962 330 L1002 385 L950 420 L962 440 L900 482 L910 520 L852 527 Q820 520 800 515 Q740 480 700 455 L600 425 Q560 400 530 385 Q500 360 505 330 Q540 300 575 272 Q560 230 558 190 Q530 150 502 108 Z" fill="#84aef0"/>
<path d="M865 168 L940 92 L932 232 Q900 200 865 168Z" fill="#e9e2d2" stroke-width="4"/>
<path d="M690 200 Q700 260 760 320" stroke-width="5" fill="none"/>
<!-- muzzle -->
<path d="M520 345 Q560 310 600 302 Q650 290 700 292 Q760 300 800 300 Q840 275 870 262 L940 282 Q935 340 920 382 Q900 430 868 462 Q800 475 760 472 Q700 460 652 442 Q600 420 572 402 Q540 380 520 345Z" fill="#ece4d2"/>
<!-- chest fur -->
<path d="M630 480 L700 470 L800 470 L835 520 L812 600 L830 620 L760 655 L680 662 L650 620 L632 600 Z" fill="#ece4d2"/>
<path d="M700 560 Q740 590 780 560 M720 620 Q750 600 790 620" stroke-width="4" fill="none"/>
<!-- nose -->
<ellipse cx="575" cy="355" rx="48" ry="30" fill="#6a3a26"/>
<ellipse cx="560" cy="345" rx="14" ry="8" fill="#a26a50" stroke="none"/>
<!-- mouth -->
<path d="M690 420 Q730 400 770 398 Q800 410 828 428 Q800 455 772 470 L712 462 Z" fill="#e58a8c"/>
<path d="M675 474 Q770 440 858 422 Q840 450 815 470 Q760 510 714 549 Z" fill="#141414"/>
<!-- eyes closed -->
<ellipse cx="614" cy="232" rx="30" ry="21" fill="#ece4d2" stroke-width="5"/>
<ellipse cx="805" cy="238" rx="40" ry="21" fill="#ece4d2" stroke-width="5"/>
<path d="M585 248 Q612 262 642 250 M768 256 Q805 268 842 252" stroke-width="5" fill="none"/>
<!-- blanket -->
<path d="M20 1035 Q25 960 40 905 Q80 870 120 852 Q220 800 320 762 Q420 730 520 722 Q620 720 700 732 Q790 740 862 762 L880 882 Q940 890 1000 892 Q1080 880 1150 882 Q1200 885 1230 902 Q1245 970 1250 1040 Z" fill="#f0c6c6"/>
<path d="M20 1035 L40 960 Q120 930 200 930 Q350 950 500 970 Q650 990 800 990 Q950 975 1100 960 Q1180 970 1250 990 L1250 1040 Z" fill="#da8e8e" stroke="none"/>
<path d="M380 760 Q560 790 760 820" stroke="#d49a9a" stroke-width="8" fill="none"/>
<!-- red cuff -->
<path d="M832 882 L962 892 L1002 942 L992 1032 L902 1032 L842 962 Z" fill="#c0342a"/>
<path d="M860 900 L880 1000 M900 900 L920 1010 M940 905 L960 1020" stroke="#8a1a14" stroke-width="4" fill="none"/>
<!-- tablet -->
<path d="M80 752 L362 762 L742 862 L782 902 L762 1032 L210 1032 L92 782 Z" fill="#37354c"/>
<path d="M100 770 L360 778 L720 870" stroke="#5a5a78" stroke-width="5" fill="none"/>
<path d="M320 795 L410 800 L405 818 L318 812 Z" fill="#8aa8d8" stroke="none"/>
<path d="M348 915 L372 930 L425 895 L448 932 L500 922 L492 952 L352 942 Z" fill="#e2c052" stroke-width="4"/>
<!-- hands -->
<path d="M132 702 Q190 670 252 652 Q300 670 332 692 L342 762 Q270 770 202 772 L142 752 Z" fill="#84aef0"/>
<path d="M200 700 L260 740 M230 690 L290 730" stroke-width="4" fill="none"/>
<path d="M682 1032 L702 922 Q740 895 782 882 Q840 900 882 922 L932 1002 L902 1032 Z" fill="#84aef0"/>
<!-- pen -->
<path d="M296 575 L310 575 L312 690 L300 692 Z" fill="#888" stroke-width="3"/>
</g>
</svg>
</body></html>
